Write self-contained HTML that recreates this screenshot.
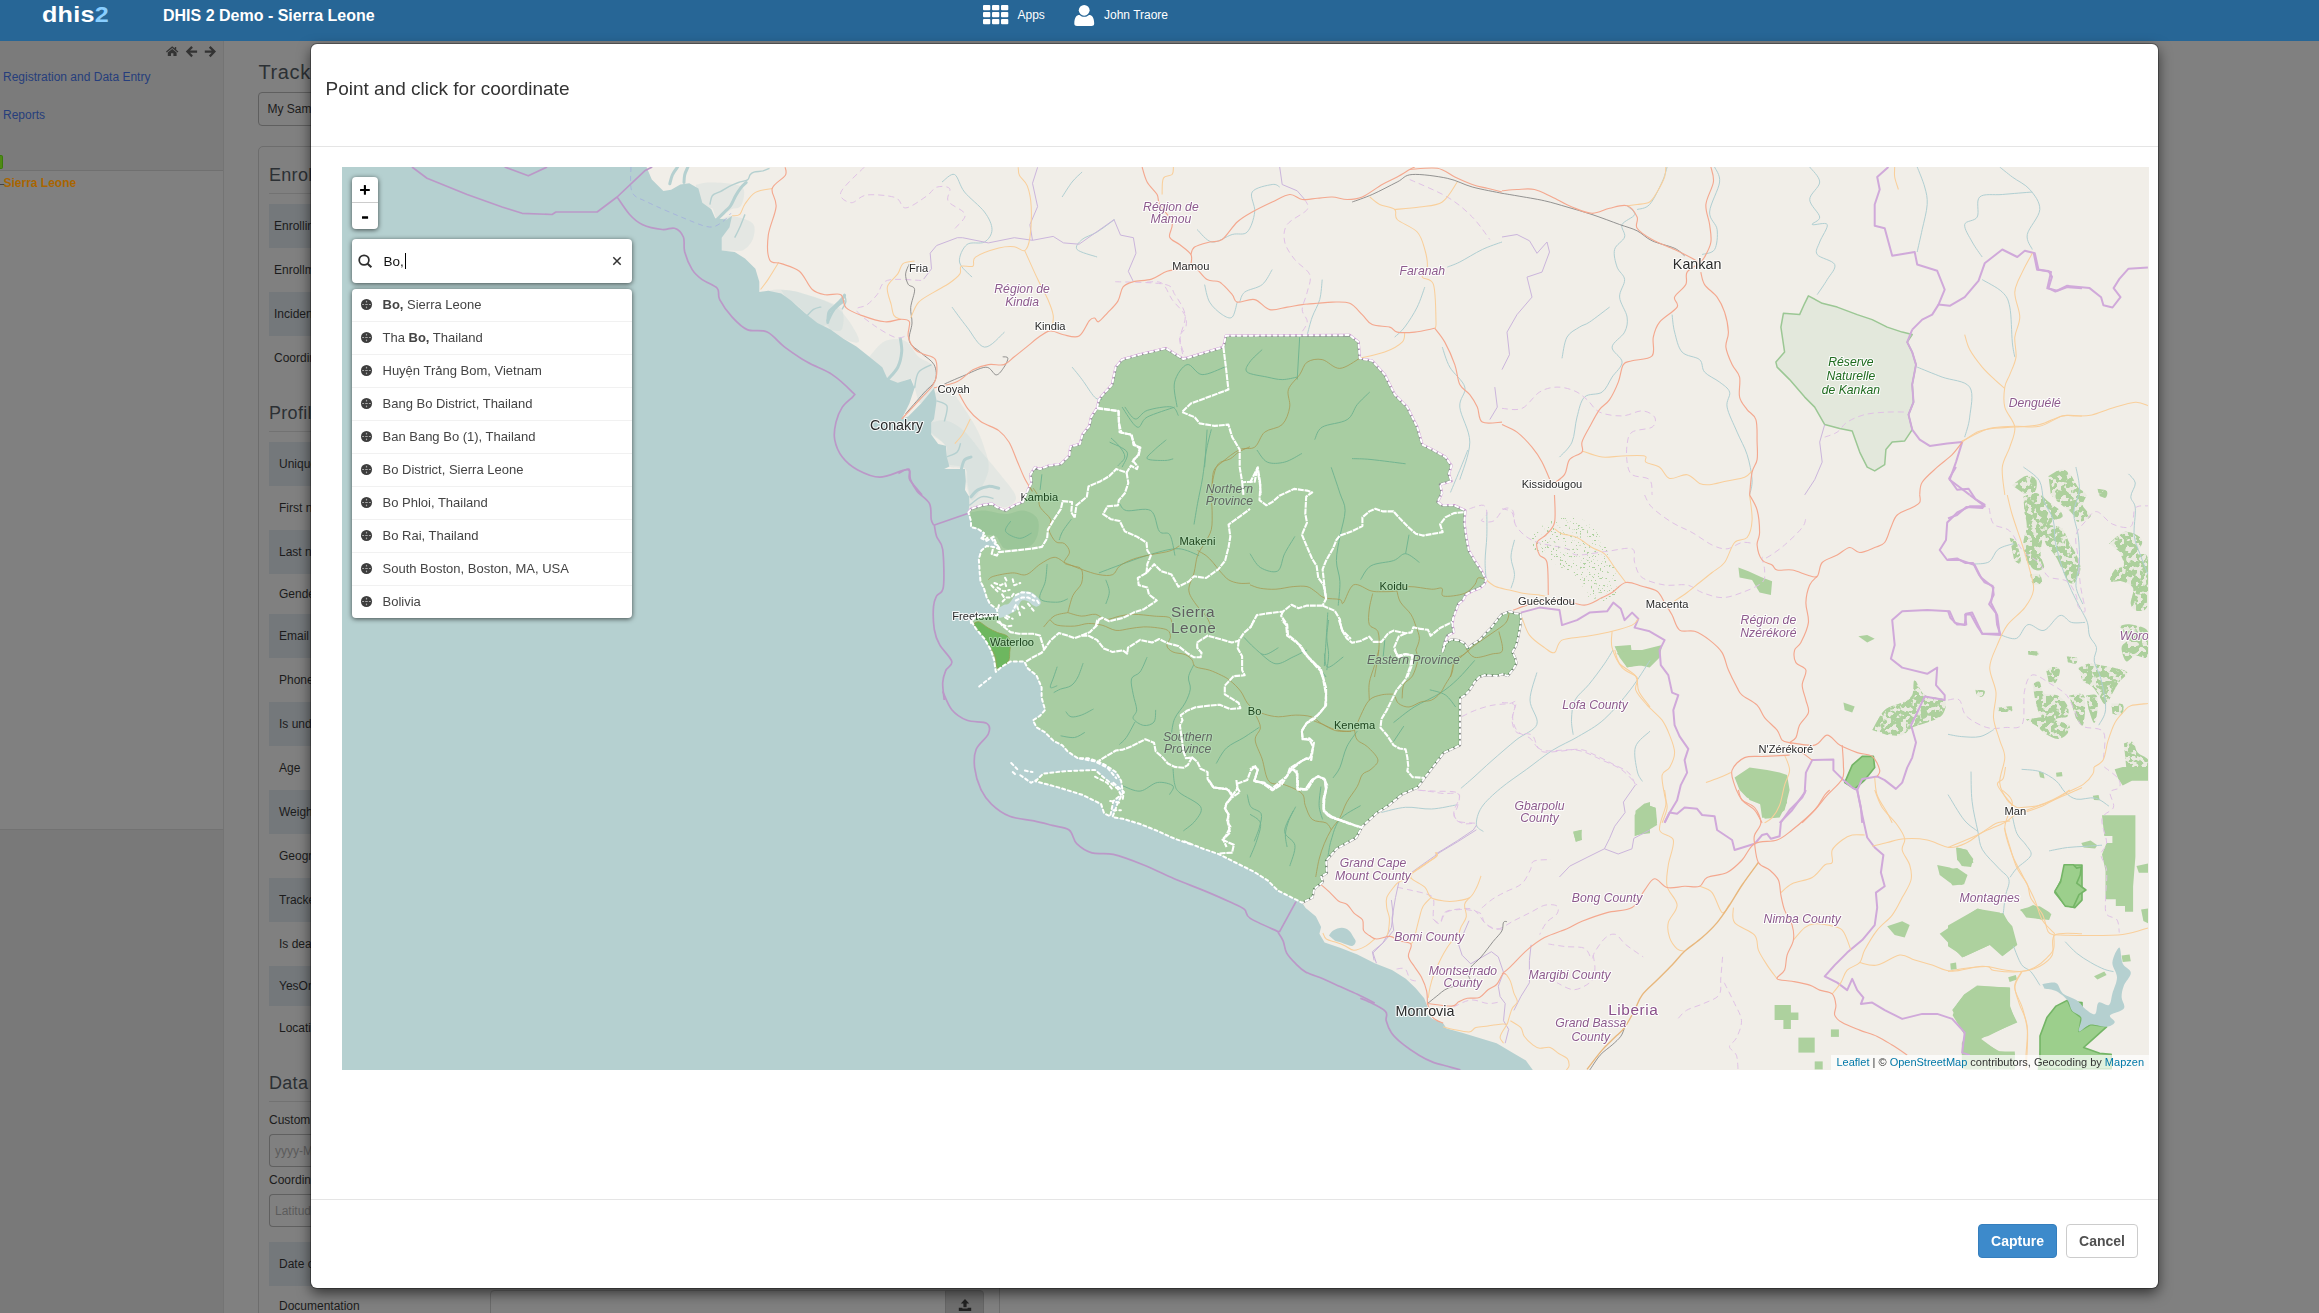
<!DOCTYPE html>
<html>
<head>
<meta charset="utf-8">
<title>DHIS 2 Demo - Sierra Leone</title>
<style>
*{box-sizing:border-box;margin:0;padding:0}
html,body{width:2319px;height:1313px;overflow:hidden}
body{font-family:"Liberation Sans",sans-serif;background:#808080;position:relative;color:#1c1c1c;font-size:12px}
.abs{position:absolute}
#hdr{position:absolute;left:0;top:0;width:2319px;height:41px;background:#276696}
#logo{position:absolute;left:41.8px;top:2.3px;font-weight:bold;font-size:21.5px;line-height:26px;color:#fff;letter-spacing:.2px;transform-origin:0 0;transform:scaleX(1.17)}
#logo span{color:#89ceff}
#title{position:absolute;left:163px;top:6px;font-weight:bold;font-size:16px;line-height:20px;color:#fff;white-space:nowrap}
.hl{position:absolute;top:8px;font-size:12px;line-height:14px;color:#fff;white-space:nowrap}
#leftbar{position:absolute;left:0;top:41px;width:224px;height:788px;background:#808080;border-right:1px solid #747474}
#leftbar .top{position:absolute;left:0;top:0;width:223px;height:130px;background:#7b7b7b;border-bottom:1px solid #707070}
#leftbot{position:absolute;left:0;top:829px;width:224px;height:484px;background:#797979;border-right:1px solid #747474;border-top:1px solid #727272}
.lnk{position:absolute;left:3px;font-size:12px;line-height:14px;color:#263e7c;white-space:nowrap}
.t{position:absolute;white-space:nowrap;color:#1b1b1b;font-size:12px;line-height:14px}
.h{position:absolute;white-space:nowrap;color:#2c3034;font-size:18px;line-height:22px;left:269px;letter-spacing:.3px}
.row{position:absolute;left:269px;width:60px;background:#74787b}
.hr{position:absolute;left:269px;width:60px;height:1px;background:#727272}
.inp{position:absolute;left:269px;width:60px;height:33px;border:1px solid #606060;border-right:0;border-radius:4px 0 0 4px;background:#808080}
#panel{position:absolute;left:258px;top:146px;width:742px;height:1200px;border:1px solid #6d6d6d;border-radius:5px}
#sel{position:absolute;left:258px;top:92px;width:300px;height:34px;border:1px solid #5f5f5f;border-radius:4px}
#modal{will-change:transform;position:absolute;left:311px;top:44px;width:1847px;height:1244px;background:#fff;border-radius:6px;box-shadow:0 5px 14px rgba(0,0,0,.62), 0 0 0 1px rgba(0,0,0,.3)}
#mtitle{position:absolute;left:14.5px;top:34.2px;font-size:19px;line-height:22px;color:#333;white-space:nowrap}
#mhl{position:absolute;left:0;top:102px;width:100%;height:1px;background:#e5e5e5}
#mfl{position:absolute;left:0;top:1155px;width:100%;height:1px;background:#e5e5e5}
#map{position:absolute;left:31px;top:123px;width:1807px;height:903px;background:#f1eee8;overflow:hidden}
#map svg{position:absolute;left:0;top:0}
.btn{position:absolute;top:1180px;height:34px;border-radius:4px;font-weight:bold;font-size:14px;line-height:32px;text-align:center;border:1px solid}
#zoomc{position:absolute;left:10px;top:10px;width:26px;height:52px;background:#fff;border-radius:4px;box-shadow:0 1px 5px rgba(0,0,0,.65)}
#zoomc div{position:absolute;left:0;width:26px;text-align:center;font-weight:bold;font-family:"Liberation Mono",monospace;color:#000;font-size:18px;line-height:26px}
#sbox{position:absolute;left:10px;top:72px;width:280px;height:44px;background:#fff;border-radius:4px;box-shadow:0 1px 5px rgba(0,0,0,.65)}
#res{position:absolute;left:10px;top:122px;width:280px;height:329px;background:#fff;border-radius:4px;box-shadow:0 1px 5px rgba(0,0,0,.65);overflow:hidden}
#res .it{position:absolute;left:0;width:280px;height:33px;border-bottom:1px solid #f1f1f1;font-size:13px;line-height:32px;color:#444;padding-left:30.5px;white-space:nowrap}
#res .it svg{position:absolute;left:7px;top:8px}
#attr{position:absolute;right:0;bottom:0;height:15px;background:rgba(255,255,255,.7);font-size:11px;line-height:15px;padding:0 5px;color:#333;white-space:nowrap}
#attr span{color:#0078a8}
</style>
</head>
<body>
<!-- background page (already dimmed by modal backdrop) -->
<div id="leftbar"><div class="top"></div></div>
<div id="leftbot"></div>
<div id="hdr">
  <div id="logo">dhis<span>2</span></div>
  <div id="title">DHIS 2 Demo - Sierra Leone</div>
  <svg class="abs" style="left:983px;top:5px" width="26" height="20" viewBox="0 0 26 20"><g fill="#fff"><rect x="0" y="0" width="7.3" height="5.2" rx="1"/><rect x="9" y="0" width="7.3" height="5.2" rx="1"/><rect x="18" y="0" width="7.3" height="5.2" rx="1"/><rect x="0" y="7" width="7.3" height="5.2" rx="1"/><rect x="9" y="7" width="7.3" height="5.2" rx="1"/><rect x="18" y="7" width="7.3" height="5.2" rx="1"/><rect x="0" y="14" width="7.3" height="5.2" rx="1"/><rect x="9" y="14" width="7.3" height="5.2" rx="1"/><rect x="18" y="14" width="7.3" height="5.2" rx="1"/></g></svg>
  <div class="hl" style="left:1017.5px">Apps</div>
  <svg class="abs" style="left:1074px;top:4px" width="21" height="23" viewBox="0 0 21 23"><g fill="#fff"><circle cx="10.2" cy="6.3" r="5.4"/><path d="M0.3 19.5 C0.3 13.5 2.5 11 5.5 11 C7 12.3 8.5 12.8 10.2 12.8 C12 12.8 13.5 12.3 15 11 C18 11 20.2 13.5 20.2 19.5 C20.2 21.3 19 22 17.5 22 L3 22 C1.5 22 0.3 21.3 0.3 19.5 Z"/></g></svg>
  <div class="hl" style="left:1104px">John Traore</div>
</div>
<!-- left bar content -->
<svg class="abs" style="left:165px;top:45px" width="54" height="14" viewBox="165 45 54 14"><g fill="#333">
<path d="M172.2 46.2 L166 51.6 L166.8 52.5 L172.2 47.9 L177.6 52.5 L178.4 51.6 L176.2 49.7 L176.2 46.9 L174.8 46.9 L174.8 48.5 Z"/>
<path d="M172.2 48.9 L167.8 52.6 L167.8 56 L171 56 L171 53.2 L173.4 53.2 L173.4 56 L176.6 56 L176.6 52.6 Z"/>
<path d="M185.8 51.6 L191.3 46.1 L192.9 47.7 L190.1 50.5 L197.1 50.5 L197.1 52.8 L190.1 52.8 L192.9 55.6 L191.3 57.2 Z"/>
<path d="M216 51.6 L210.5 46.1 L208.9 47.7 L211.7 50.5 L204.8 50.5 L204.8 52.8 L211.7 52.8 L208.9 55.6 L210.5 57.2 Z"/>
</g></svg>
<div class="lnk" style="top:70px">Registration and Data Entry</div>
<div class="lnk" style="top:108px">Reports</div>
<div class="abs" style="left:0;top:155px;width:3px;height:14px;background:#4f8a14;border:1px solid #3a7a0c;border-left:0;border-radius:0 2px 2px 0"></div>
<div class="abs" style="left:0;top:184px;width:4px;height:1px;background:#444"></div>
<div class="lnk" style="left:3.5px;top:176px;font-weight:bold;color:#a96500">Sierra Leone</div>
<!-- main content under modal -->
<div class="h" style="left:258.5px;top:61px;font-size:20px;letter-spacing:.6px">Tracker Capture</div>
<div id="sel"><div class="t" style="left:8.5px;top:9px">My Sample Programs</div></div>
<div id="panel"></div>
<div class="h" style="top:164px">Enrollment</div>
<div class="hr" style="top:193px"></div>
<div class="row" style="top:204px;height:44px"></div><div class="t" style="left:274px;top:219px">Enrolling organisation unit</div>
<div class="t" style="left:274px;top:263px">Enrollment date</div>
<div class="row" style="top:292px;height:44px"></div><div class="t" style="left:274px;top:307px">Incident date</div>
<div class="t" style="left:274px;top:351px">Coordinate</div>
<div class="h" style="top:402px">Profile</div>
<div class="hr" style="top:431px"></div>
<div class="row" style="top:442px;height:44px"></div><div class="t" style="left:279px;top:457px">Unique ID</div>
<div class="t" style="left:279px;top:501px">First name</div>
<div class="row" style="top:530px;height:43.5px"></div><div class="t" style="left:279px;top:545px">Last name</div>
<div class="t" style="left:279px;top:587px">Gender</div>
<div class="row" style="top:613.5px;height:44px"></div><div class="t" style="left:279px;top:629px">Email</div>
<div class="t" style="left:279px;top:673px">Phone number</div>
<div class="row" style="top:702px;height:44px"></div><div class="t" style="left:279px;top:717px">Is under 5</div>
<div class="t" style="left:279px;top:761px">Age</div>
<div class="row" style="top:790px;height:43.5px"></div><div class="t" style="left:279px;top:805px">Weight in kg</div>
<div class="t" style="left:279px;top:849px">Geography</div>
<div class="row" style="top:877.5px;height:44.5px"></div><div class="t" style="left:279px;top:893px">Tracker</div>
<div class="t" style="left:279px;top:937px">Is dead</div>
<div class="row" style="top:966px;height:40px"></div><div class="t" style="left:279px;top:979px">YesOnly</div>
<div class="t" style="left:279px;top:1021px">Location</div>
<div class="h" style="top:1072px">Data entry</div>
<div class="hr" style="top:1101px"></div>
<div class="t" style="left:269px;top:1113px">Custom date</div>
<div class="inp" style="top:1133.5px"><div class="t" style="left:5px;top:9px;color:#5c5c5c">yyyy-MM-dd</div></div>
<div class="t" style="left:269px;top:1173px">Coordinate</div>
<div class="inp" style="top:1193.5px"><div class="t" style="left:5px;top:9px;color:#5c5c5c">Latitude</div></div>
<div class="row" style="top:1242px;height:44px"></div><div class="t" style="left:279px;top:1257px">Date of birth</div>
<div class="t" style="left:279px;top:1298.5px">Documentation</div>
<!-- bits visible below the modal -->
<div class="abs" style="left:490px;top:1290px;width:456px;height:34px;border:1px solid #6b6b6b;border-radius:4px 0 0 4px"></div>
<div class="abs" style="left:945px;top:1290px;width:39px;height:34px;background:#6e6e6e;border:1px solid #666;border-radius:0 4px 4px 0"></div>
<svg class="abs" style="left:958px;top:1298px" width="14" height="14" viewBox="0 0 14 14"><g fill="#222"><path d="M7 1 L11.2 5.6 L8.6 5.6 L8.6 9.2 L5.4 9.2 L5.4 5.6 L2.8 5.6 Z"/><path d="M0.8 9.8 L4.4 9.8 L4.4 10.4 L9.6 10.4 L9.6 9.8 L13.2 9.8 L13.2 13 L0.8 13 Z"/></g></svg>
<!-- modal -->
<div id="modal">
  <div id="mtitle">Point and click for coordinate</div>
  <div id="mhl"></div>
  <div id="map">
<svg width="1806" height="903" viewBox="0 0 1806 903" font-family="Liberation Sans, sans-serif">
<g fill="#add19e"><path d="M1272.6 479.3 L1288.8 478.1 L1290.1 488.1 L1300.1 483.1 L1310.1 480.6 L1320.1 478.1 L1317.6 490.6 L1307.6 500.6 L1296.3 498.1 L1285.1 500.6 L1277.6 490.6Z"/><path d="M1396.4 400.5 L1406.4 404.3 L1420.1 410.5 L1430.1 414.3 L1428.9 428.1 L1417.6 425.5 L1410.1 413 L1397.6 410.5Z"/><path d="M1392.6 610.6 L1407.6 600.6 L1425.1 603.1 L1437.6 605.6 L1445.1 608.1 L1447.6 623.1 L1442.6 643.2 L1432.6 650.7 L1420.1 650.7 L1417.6 633.2 L1405.1 630.7 L1397.6 623.1Z"/><path d="M1516.4 469.3 L1525.2 468.1 L1532.7 471.8 L1525.2 475.6Z"/><path d="M1501.4 535.6 L1512.7 539.4 L1510.2 545.6 L1502.7 543.1Z"/><path d="M1293.8 645.7 L1305.1 638.2 L1313.8 640.7 L1315.1 655.9 L1293.8 655.9Z"/><path d="M1292.6 648 L1302.6 636.8 L1312.6 640.5 L1315.1 658 L1302.6 665.5 L1292.6 669.3Z"/><path d="M1401.4 623 L1440.1 623 L1445.1 635.5 L1437.6 650.5 L1422.6 651.8 L1420.1 638 L1407.6 633Z"/><path d="M1432.6 838.1 L1448.9 838.1 L1448.9 845.6 L1456.4 845.6 L1456.4 853.1 L1448.9 853.1 L1448.9 861.9 L1441.4 861.9 L1441.4 853.1 L1432.6 853.1Z"/><path d="M1456.4 870.6 L1472.7 870.6 L1472.7 885.6 L1456.4 885.6Z"/><path d="M1488.9 862.4 L1496.9 862.4 L1496.9 869.9 L1488.9 869.9Z"/><path d="M1472.7 894.4 L1480.7 894.4 L1480.7 902.4 L1472.7 902.4Z"/><path d="M1597.7 766.8 L1635.2 741.8 L1657.7 745.6 L1670.3 759.3 L1675.3 778.1 L1660.3 789.3 L1647.7 778.1 L1620.2 790.6Z"/><path d="M1610.2 843.1 L1622.7 826.9 L1634 819.3 L1667.8 820.6 L1667.8 840.6 L1675.3 855.6 L1642.7 869.4 L1637.7 873.1 L1657.7 884.4 L1672.8 884.4 L1672.8 902.4 L1622.7 902.4 L1620.2 885.6 L1622.7 865.6Z"/><path d="M1545.2 759.3 L1560.2 754.3 L1567.7 758.1 L1562.7 770.6 L1552.7 768.1Z"/><path d="M1595.2 698 L1607.7 700.5 L1625.2 708 L1620.2 718 L1607.7 715.5 L1597.7 708Z"/><path d="M1614 680.5 L1625.2 683 L1631.5 695.5 L1622.7 699.3 L1615.2 693Z"/><path d="M1677.8 743.1 L1687.8 740.6 L1697.8 739.3 L1707.8 745.6 L1700.3 753.1 L1687.8 749.3Z"/><path d="M1231.3 665.5 L1238.8 663 L1240 673 L1233.8 674.3Z"/><path d="M1760 648.3 L1793.4 648.3 L1793.4 689.7 L1791.1 719.5 L1791.1 744.8 L1783 744.8 L1783 739.1 L1773.8 739.1 L1773.8 732.2 L1763.5 732.2 L1763.5 703.4 L1760 687.4 L1764.6 675.9 L1770.4 675.9 L1770.4 669 L1762.3 669Z"/><path d="M1606 758.6 L1635.9 741.4 L1652 747.1 L1661.2 746 L1668.1 758.6 L1668.1 770.1 L1675 777 L1661.2 788.5 L1649.7 777 L1622.1 789.7 L1606 779.3Z"/><path d="M1610.6 848.3 L1615.2 836.8 L1622.1 827.6 L1633.6 825.3 L1634.7 818.4 L1668.1 820.7 L1668.1 839.1 L1673.8 855.2 L1646.2 869 L1638.2 871.3 L1655.4 883.9 L1672.7 886.2 L1672.7 901.8 L1619.8 901.8 L1619.8 875.9 L1623.2 869Z"/><path d="M1615.2 680.5 L1624.4 682.8 L1631.3 692 L1629 700 L1619.8 698.9 L1615.2 692Z"/><path d="M1606 702.3 L1615.2 701.1 L1625.5 708 L1622.1 717.2 L1610.6 718.4 L1606 712.6Z"/><path d="M1678.4 742.5 L1686.5 740.2 L1691.1 737.9 L1698 740.2 L1709.4 747.1 L1707.1 752.9 L1695.7 751.7 L1684.2 750.6Z"/><path d="M1772.7 602.3 L1780.7 600 L1806 600 L1806 613.8 L1789.9 613.8 L1780.7 618.4 L1776.1 611.5Z"/><path d="M1739.3 675.9 L1748.5 673.6 L1755.4 678.2 L1753.1 681.6 L1741.6 680.5Z"/><path d="M1794.5 698.9 L1806 696.6 L1806 705.7 L1796.8 705.7Z"/><path d="M1799.1 742.5 L1806 741.4 L1806 756.3 L1801.4 754Z"/><path d="M1779.6 788.5 L1787.6 787.4 L1788.8 794.3 L1780.7 794.9Z"/><path d="M1752 809.2 L1762.3 804.6 L1764.6 808 L1755.4 812.6Z"/><path d="M1696.8 604.6 L1701.4 605.7 L1702.6 611.5 L1698 610.3Z"/><path d="M1714 605.7 L1719.8 605.1 L1720.5 609.2 L1714.5 609.7Z"/><path d="M1750.8 628.7 L1756.6 628 L1757.7 633.3 L1752 632.9Z"/><path d="M1666.2 810.3 L1673.8 808 L1675 812.6 L1667.6 814.9Z"/><path d="M1608.3 796.6 L1614 795.4 L1614.7 802.3 L1608.8 802.8Z"/><path d="M1274.5 486.5 L1288.3 483 L1308 483 L1308 495.1 L1298.7 498.6 L1284.8 500.3 L1281.4 491.6Z"/><path d="M1293.5 643.8 L1302.1 636.8 L1308 635.1 L1308 666.2 L1293.5 668Z"/><path d="M1231.2 664.5 L1239.9 662.8 L1239 673.1 L1233.8 674.9Z"/></g>
<defs><filter id="sp" x="0" y="0" width="100%" height="100%" filterUnits="userSpaceOnUse" primitiveUnits="userSpaceOnUse"><feTurbulence type="fractalNoise" baseFrequency="0.2" numOctaves="2" seed="7" result="n"/><feColorMatrix in="n" type="matrix" values="0 0 0 0 0  0 0 0 0 0  0 0 0 0 0  0 0 0 -16 9.2" result="m"/><feComposite in="SourceGraphic" in2="m" operator="in"/></filter></defs>
<g fill="#add19e" filter="url(#sp)"><path d="M1530.2 563.1 C1532.3 559.8 1537.7 547.7 1542.7 543.1 C1547.7 538.5 1555.6 538.1 1560.2 535.6 C1564.8 533.1 1568.1 531.9 1570.2 528.1 C1572.3 524.4 1570.6 513.1 1572.7 513.1 C1574.8 513.1 1577.7 524.8 1582.7 528.1 C1587.7 531.4 1599.8 529.8 1602.7 533.1 C1605.6 536.4 1603.1 544.4 1600.2 548.1 C1597.3 551.9 1590.2 553.5 1585.2 555.6 C1580.2 557.7 1574.4 558.5 1570.2 560.6 C1566.0 562.7 1564.4 566.9 1560.2 568.1 C1556.0 569.4 1547.7 568.1 1545.2 568.1Z"/><path d="M1670 318.3 C1672.3 316.8 1679.7 310.1 1683.7 309.1 C1687.7 308.2 1692.5 309.9 1694 312.6 C1695.5 315.3 1694.9 322.8 1692.8 325.1 C1690.7 327.4 1683.3 326.1 1681.4 326.3Z"/><path d="M1681.4 329.7 C1683.7 329.1 1690.5 325.1 1695.1 326.3 C1699.7 327.5 1705.0 333.8 1708.8 336.6 C1712.6 339.5 1716.0 341.1 1717.9 343.4 C1719.8 345.7 1721.5 348.4 1720.2 350.3 C1718.9 352.2 1713.0 351.8 1710 354.8 C1707.0 357.8 1703.9 363.2 1702 368.5 C1700.1 373.8 1698.5 381.5 1698.5 386.8 C1698.5 392.1 1703.0 397.8 1702 400.5 C1701.0 403.2 1695.8 404.3 1692.8 402.8 C1689.8 401.3 1685.6 396.0 1683.7 391.4 C1681.8 386.8 1681.2 380.7 1681.4 375.4 C1681.6 370.1 1684.6 364.3 1684.8 359.4 C1685.0 354.4 1682.9 348.0 1682.5 345.7Z"/><path d="M1706.5 309.1 C1708.8 308.0 1716.4 302.3 1720.2 302.3 C1724.0 302.3 1726.7 306.1 1729.4 309.1 C1732.1 312.2 1733.7 317.6 1736.2 320.6 C1738.7 323.7 1743.4 324.4 1744.2 327.4 C1745.0 330.4 1740.0 335.2 1740.8 338.8 C1741.6 342.4 1749.6 346.4 1748.8 349.1 C1748.0 351.8 1739.4 355.4 1736.2 354.8 C1733.0 354.2 1732.5 348.7 1729.4 345.7 C1726.4 342.7 1721.3 339.7 1717.9 336.6 C1714.5 333.6 1710.3 328.9 1708.8 327.4Z"/><path d="M1696.2 357.1 C1698.3 357.3 1704.8 357.5 1708.8 358.3 C1712.8 359.1 1717.2 358.9 1720.2 361.7 C1723.2 364.5 1724.8 371.2 1727.1 375.4 C1729.4 379.6 1732.0 382.6 1733.9 386.8 C1735.8 391.0 1738.5 395.9 1738.5 400.5 C1738.5 405.1 1735.8 411.7 1733.9 414.2 C1732.0 416.7 1729.4 417.3 1727.1 415.4 C1724.8 413.5 1722.5 407.2 1720.2 402.8 C1717.9 398.4 1716.1 393.3 1713.4 389.1 C1710.7 384.9 1705.7 379.6 1704.2 377.7Z"/><path d="M1767.1 376.5 C1769.6 374.6 1777.2 366.4 1781.9 365.1 C1786.7 363.8 1792.5 366.8 1795.6 368.5 C1798.6 370.2 1800.2 372.3 1800.2 375.4 C1800.2 378.4 1794.6 384.1 1795.6 386.8 C1796.5 389.5 1804.2 383.0 1805.9 391.4 C1807.6 399.8 1807.6 428.4 1805.9 437.1 C1804.2 445.9 1798.4 443.9 1795.6 443.9 C1792.8 443.9 1789.5 440.9 1788.8 437.1 C1788.0 433.3 1792.6 424.9 1791.1 421.1 C1789.6 417.3 1783.4 415.4 1779.6 414.2 C1775.8 413.0 1769.3 416.1 1768.2 414.2 C1767.1 412.3 1770.5 405.5 1772.8 402.8 C1775.1 400.1 1781.1 401.2 1781.9 398.2 C1782.7 395.1 1778.2 386.8 1777.4 384.5Z"/><path d="M1777.4 458.8 C1779.3 458.6 1784.0 456.7 1788.8 457.6 C1793.5 458.6 1803.1 459.2 1805.9 464.5 C1808.8 469.8 1808.0 485.6 1805.9 489.6 C1803.8 493.6 1796.9 487.7 1793.3 488.5 C1789.7 489.3 1786.5 495.5 1784.2 494.2 C1781.9 492.9 1779.2 483.9 1779.6 480.5 C1780.0 477.1 1785.3 474.8 1786.5 473.6Z"/><path d="M1736.2 501.1 C1738.1 500.3 1743.4 496.9 1747.6 496.5 C1751.8 496.1 1757.2 498.0 1761.4 498.8 C1765.6 499.6 1768.8 500.0 1772.8 501.1 C1776.8 502.2 1784.5 503.3 1785.3 505.6 C1786.1 507.9 1779.9 511.4 1777.4 514.8 C1774.9 518.2 1772.8 522.4 1770.5 526.2 C1768.2 530.0 1765.9 537.2 1763.6 537.6 C1761.3 538.0 1759.1 531.5 1756.8 528.5 C1754.5 525.5 1752.6 521.6 1749.9 519.3 C1747.2 517.0 1742.3 515.5 1740.8 514.8Z"/><path d="M1690.5 517 C1691.7 516.6 1695.5 513.3 1697.4 514.8 C1699.3 516.3 1699.0 523.9 1702 526.2 C1705.0 528.5 1711.9 526.6 1715.7 528.5 C1719.5 530.4 1723.1 534.2 1724.8 537.6 C1726.5 541.0 1727.4 546.7 1725.9 549 C1724.4 551.3 1718.9 550.1 1715.7 551.3 C1712.5 552.4 1709.5 556.7 1706.5 555.9 C1703.5 555.1 1699.7 550.9 1697.4 546.7 C1695.1 542.5 1693.6 533.4 1692.8 530.8Z"/><path d="M1727.1 528.5 C1729.4 528.3 1738.1 525.4 1740.8 527.3 C1743.5 529.2 1743.1 534.8 1743.1 539.9 C1743.1 545.0 1742.3 556.3 1740.8 558.2 C1739.3 560.1 1735.1 552.4 1733.9 551.3Z"/><path d="M1744.2 528.5 C1745.9 528.5 1752.6 526.2 1754.5 528.5 C1756.4 530.8 1756.0 537.6 1755.6 542.2 C1755.2 546.8 1753.7 555.9 1752.2 555.9 C1750.7 555.9 1747.5 544.5 1746.5 542.2Z"/><path d="M1683.7 552.5 C1686.8 552.1 1697.0 550.0 1702 550.2 C1707.0 550.4 1709.2 552.3 1713.4 553.6 C1717.6 554.9 1725.2 555.9 1727.1 558.2 C1729.0 560.5 1726.7 565.0 1724.8 567.3 C1722.9 569.6 1719.1 571.9 1715.7 571.9 C1712.3 571.9 1707.6 569.4 1704.2 567.3 C1700.8 565.2 1696.6 560.6 1695.1 559.3Z"/><path d="M1704.2 503.3 C1705.3 502.7 1708.8 499.9 1711.1 499.9 C1713.4 499.9 1717.5 500.6 1717.9 503.3 C1718.3 506.0 1715.3 514.0 1713.4 515.9 C1711.5 517.8 1707.7 515.0 1706.5 514.8Z"/><path d="M1781.9 576.4 C1783.4 576.2 1788.8 573.8 1791.1 575.3 C1793.4 576.8 1793.1 582.8 1795.6 585.6 C1798.1 588.5 1804.2 590.0 1805.9 592.4 C1807.6 594.8 1809.5 598.7 1805.9 600 C1802.3 601.3 1787.8 600.0 1784.2 600Z"/><path d="M1688.2 407.4 C1689.7 407.4 1695.5 405.9 1697.4 407.4 C1699.3 408.9 1700.9 414.8 1699.7 416.5 C1698.5 418.2 1692.0 417.5 1690.5 417.7Z"/><path d="M1769.4 536.5 C1771.3 536.7 1779.1 535.7 1780.8 537.6 C1782.5 539.5 1781.3 546.4 1779.6 547.9 C1777.9 549.4 1772.0 546.9 1770.5 546.7Z"/><path d="M1667.7 370.8 C1668.8 371.6 1672.6 371.2 1674.5 375.4 C1676.4 379.6 1679.5 392.9 1679.1 396 C1678.7 399.1 1673.4 394.1 1672.3 393.7Z"/><path d="M1755.6 321.7 C1757.1 322.1 1763.5 322.5 1764.8 324 C1766.1 325.5 1764.9 330.0 1763.6 330.8 C1762.3 331.6 1757.9 329.0 1756.8 328.6Z"/><path d="M1633.4 522.8 C1634.9 523.0 1641.4 522.8 1642.6 523.9 C1643.8 525.0 1641.6 528.8 1640.3 529.6 C1639.0 530.4 1635.5 528.7 1634.6 528.5Z"/><path d="M1655.1 541 C1657.6 540.7 1667.7 538.8 1670 539.4 C1672.3 540.0 1671.1 543.6 1668.8 544.5 C1666.5 545.4 1658.4 544.8 1656.3 544.9Z"/><path d="M1724.8 489.6 C1726.5 489.8 1733.6 489.7 1735.1 490.8 C1736.6 491.9 1735.4 495.8 1733.9 496.5 C1732.4 497.2 1727.2 495.5 1725.9 495.3Z"/><path d="M1686 483.9 C1687.7 484.0 1694.6 483.8 1696.2 484.6 C1697.8 485.4 1697.2 488.0 1695.6 488.5 C1694.0 489.0 1687.9 487.9 1686.4 487.8Z"/></g>
<g fill="#add19e" fill-opacity=".1"><path d="M1530.2 563.1 C1532.3 559.8 1537.7 547.7 1542.7 543.1 C1547.7 538.5 1555.6 538.1 1560.2 535.6 C1564.8 533.1 1568.1 531.9 1570.2 528.1 C1572.3 524.4 1570.6 513.1 1572.7 513.1 C1574.8 513.1 1577.7 524.8 1582.7 528.1 C1587.7 531.4 1599.8 529.8 1602.7 533.1 C1605.6 536.4 1603.1 544.4 1600.2 548.1 C1597.3 551.9 1590.2 553.5 1585.2 555.6 C1580.2 557.7 1574.4 558.5 1570.2 560.6 C1566.0 562.7 1564.4 566.9 1560.2 568.1 C1556.0 569.4 1547.7 568.1 1545.2 568.1Z"/><path d="M1670 318.3 C1672.3 316.8 1679.7 310.1 1683.7 309.1 C1687.7 308.2 1692.5 309.9 1694 312.6 C1695.5 315.3 1694.9 322.8 1692.8 325.1 C1690.7 327.4 1683.3 326.1 1681.4 326.3Z"/><path d="M1681.4 329.7 C1683.7 329.1 1690.5 325.1 1695.1 326.3 C1699.7 327.5 1705.0 333.8 1708.8 336.6 C1712.6 339.5 1716.0 341.1 1717.9 343.4 C1719.8 345.7 1721.5 348.4 1720.2 350.3 C1718.9 352.2 1713.0 351.8 1710 354.8 C1707.0 357.8 1703.9 363.2 1702 368.5 C1700.1 373.8 1698.5 381.5 1698.5 386.8 C1698.5 392.1 1703.0 397.8 1702 400.5 C1701.0 403.2 1695.8 404.3 1692.8 402.8 C1689.8 401.3 1685.6 396.0 1683.7 391.4 C1681.8 386.8 1681.2 380.7 1681.4 375.4 C1681.6 370.1 1684.6 364.3 1684.8 359.4 C1685.0 354.4 1682.9 348.0 1682.5 345.7Z"/><path d="M1706.5 309.1 C1708.8 308.0 1716.4 302.3 1720.2 302.3 C1724.0 302.3 1726.7 306.1 1729.4 309.1 C1732.1 312.2 1733.7 317.6 1736.2 320.6 C1738.7 323.7 1743.4 324.4 1744.2 327.4 C1745.0 330.4 1740.0 335.2 1740.8 338.8 C1741.6 342.4 1749.6 346.4 1748.8 349.1 C1748.0 351.8 1739.4 355.4 1736.2 354.8 C1733.0 354.2 1732.5 348.7 1729.4 345.7 C1726.4 342.7 1721.3 339.7 1717.9 336.6 C1714.5 333.6 1710.3 328.9 1708.8 327.4Z"/><path d="M1696.2 357.1 C1698.3 357.3 1704.8 357.5 1708.8 358.3 C1712.8 359.1 1717.2 358.9 1720.2 361.7 C1723.2 364.5 1724.8 371.2 1727.1 375.4 C1729.4 379.6 1732.0 382.6 1733.9 386.8 C1735.8 391.0 1738.5 395.9 1738.5 400.5 C1738.5 405.1 1735.8 411.7 1733.9 414.2 C1732.0 416.7 1729.4 417.3 1727.1 415.4 C1724.8 413.5 1722.5 407.2 1720.2 402.8 C1717.9 398.4 1716.1 393.3 1713.4 389.1 C1710.7 384.9 1705.7 379.6 1704.2 377.7Z"/><path d="M1767.1 376.5 C1769.6 374.6 1777.2 366.4 1781.9 365.1 C1786.7 363.8 1792.5 366.8 1795.6 368.5 C1798.6 370.2 1800.2 372.3 1800.2 375.4 C1800.2 378.4 1794.6 384.1 1795.6 386.8 C1796.5 389.5 1804.2 383.0 1805.9 391.4 C1807.6 399.8 1807.6 428.4 1805.9 437.1 C1804.2 445.9 1798.4 443.9 1795.6 443.9 C1792.8 443.9 1789.5 440.9 1788.8 437.1 C1788.0 433.3 1792.6 424.9 1791.1 421.1 C1789.6 417.3 1783.4 415.4 1779.6 414.2 C1775.8 413.0 1769.3 416.1 1768.2 414.2 C1767.1 412.3 1770.5 405.5 1772.8 402.8 C1775.1 400.1 1781.1 401.2 1781.9 398.2 C1782.7 395.1 1778.2 386.8 1777.4 384.5Z"/><path d="M1777.4 458.8 C1779.3 458.6 1784.0 456.7 1788.8 457.6 C1793.5 458.6 1803.1 459.2 1805.9 464.5 C1808.8 469.8 1808.0 485.6 1805.9 489.6 C1803.8 493.6 1796.9 487.7 1793.3 488.5 C1789.7 489.3 1786.5 495.5 1784.2 494.2 C1781.9 492.9 1779.2 483.9 1779.6 480.5 C1780.0 477.1 1785.3 474.8 1786.5 473.6Z"/><path d="M1736.2 501.1 C1738.1 500.3 1743.4 496.9 1747.6 496.5 C1751.8 496.1 1757.2 498.0 1761.4 498.8 C1765.6 499.6 1768.8 500.0 1772.8 501.1 C1776.8 502.2 1784.5 503.3 1785.3 505.6 C1786.1 507.9 1779.9 511.4 1777.4 514.8 C1774.9 518.2 1772.8 522.4 1770.5 526.2 C1768.2 530.0 1765.9 537.2 1763.6 537.6 C1761.3 538.0 1759.1 531.5 1756.8 528.5 C1754.5 525.5 1752.6 521.6 1749.9 519.3 C1747.2 517.0 1742.3 515.5 1740.8 514.8Z"/><path d="M1690.5 517 C1691.7 516.6 1695.5 513.3 1697.4 514.8 C1699.3 516.3 1699.0 523.9 1702 526.2 C1705.0 528.5 1711.9 526.6 1715.7 528.5 C1719.5 530.4 1723.1 534.2 1724.8 537.6 C1726.5 541.0 1727.4 546.7 1725.9 549 C1724.4 551.3 1718.9 550.1 1715.7 551.3 C1712.5 552.4 1709.5 556.7 1706.5 555.9 C1703.5 555.1 1699.7 550.9 1697.4 546.7 C1695.1 542.5 1693.6 533.4 1692.8 530.8Z"/><path d="M1727.1 528.5 C1729.4 528.3 1738.1 525.4 1740.8 527.3 C1743.5 529.2 1743.1 534.8 1743.1 539.9 C1743.1 545.0 1742.3 556.3 1740.8 558.2 C1739.3 560.1 1735.1 552.4 1733.9 551.3Z"/><path d="M1744.2 528.5 C1745.9 528.5 1752.6 526.2 1754.5 528.5 C1756.4 530.8 1756.0 537.6 1755.6 542.2 C1755.2 546.8 1753.7 555.9 1752.2 555.9 C1750.7 555.9 1747.5 544.5 1746.5 542.2Z"/><path d="M1683.7 552.5 C1686.8 552.1 1697.0 550.0 1702 550.2 C1707.0 550.4 1709.2 552.3 1713.4 553.6 C1717.6 554.9 1725.2 555.9 1727.1 558.2 C1729.0 560.5 1726.7 565.0 1724.8 567.3 C1722.9 569.6 1719.1 571.9 1715.7 571.9 C1712.3 571.9 1707.6 569.4 1704.2 567.3 C1700.8 565.2 1696.6 560.6 1695.1 559.3Z"/><path d="M1704.2 503.3 C1705.3 502.7 1708.8 499.9 1711.1 499.9 C1713.4 499.9 1717.5 500.6 1717.9 503.3 C1718.3 506.0 1715.3 514.0 1713.4 515.9 C1711.5 517.8 1707.7 515.0 1706.5 514.8Z"/><path d="M1781.9 576.4 C1783.4 576.2 1788.8 573.8 1791.1 575.3 C1793.4 576.8 1793.1 582.8 1795.6 585.6 C1798.1 588.5 1804.2 590.0 1805.9 592.4 C1807.6 594.8 1809.5 598.7 1805.9 600 C1802.3 601.3 1787.8 600.0 1784.2 600Z"/><path d="M1688.2 407.4 C1689.7 407.4 1695.5 405.9 1697.4 407.4 C1699.3 408.9 1700.9 414.8 1699.7 416.5 C1698.5 418.2 1692.0 417.5 1690.5 417.7Z"/><path d="M1769.4 536.5 C1771.3 536.7 1779.1 535.7 1780.8 537.6 C1782.5 539.5 1781.3 546.4 1779.6 547.9 C1777.9 549.4 1772.0 546.9 1770.5 546.7Z"/><path d="M1667.7 370.8 C1668.8 371.6 1672.6 371.2 1674.5 375.4 C1676.4 379.6 1679.5 392.9 1679.1 396 C1678.7 399.1 1673.4 394.1 1672.3 393.7Z"/><path d="M1755.6 321.7 C1757.1 322.1 1763.5 322.5 1764.8 324 C1766.1 325.5 1764.9 330.0 1763.6 330.8 C1762.3 331.6 1757.9 329.0 1756.8 328.6Z"/><path d="M1633.4 522.8 C1634.9 523.0 1641.4 522.8 1642.6 523.9 C1643.8 525.0 1641.6 528.8 1640.3 529.6 C1639.0 530.4 1635.5 528.7 1634.6 528.5Z"/><path d="M1655.1 541 C1657.6 540.7 1667.7 538.8 1670 539.4 C1672.3 540.0 1671.1 543.6 1668.8 544.5 C1666.5 545.4 1658.4 544.8 1656.3 544.9Z"/><path d="M1724.8 489.6 C1726.5 489.8 1733.6 489.7 1735.1 490.8 C1736.6 491.9 1735.4 495.8 1733.9 496.5 C1732.4 497.2 1727.2 495.5 1725.9 495.3Z"/><path d="M1686 483.9 C1687.7 484.0 1694.6 483.8 1696.2 484.6 C1697.8 485.4 1697.2 488.0 1695.6 488.5 C1694.0 489.0 1687.9 487.9 1686.4 487.8Z"/></g>
<defs><filter id="dt" x="0" y="0" width="100%" height="100%" filterUnits="userSpaceOnUse" primitiveUnits="userSpaceOnUse"><feTurbulence type="fractalNoise" baseFrequency="0.55" numOctaves="1" seed="11" result="n"/><feColorMatrix in="n" type="matrix" values="0 0 0 0 0  0 0 0 0 0  0 0 0 0 0  0 0 0 -20 7.2" result="m"/><feComposite in="SourceGraphic" in2="m" operator="in"/></filter></defs>
<g fill="#add19e" filter="url(#dt)"><path d="M1192.5 365.5 C1195.4 363.4 1202.9 355.5 1210 353 C1217.1 350.5 1227.5 348.4 1235 350.5 C1242.5 352.6 1249.2 358.4 1255 365.5 C1260.8 372.6 1266.3 384.7 1270.1 393 C1273.9 401.3 1277.6 409.2 1277.6 415.5 C1277.6 421.8 1274.7 427.7 1270.1 430.6 C1265.5 433.5 1255.8 436.5 1250 433.1 C1244.2 429.8 1240.4 415.9 1235 410.5 C1229.6 405.1 1222.9 404.7 1217.5 400.5 C1212.1 396.3 1205.0 388.0 1202.5 385.5Z"/><path d="M1191.5 366 C1193.2 365.7 1199.0 363.1 1201.9 364.2 C1204.8 365.3 1208.2 369.7 1208.8 372.9 C1209.4 376.1 1207.6 381.3 1205.3 383.3 C1203.0 385.3 1197.8 386.2 1194.9 385 C1192.0 383.8 1189.2 377.8 1188 376.3Z"/></g>
<g fill="#9ccf88" stroke="#d0b070" stroke-width=".8"><path d="M631.9 456.4 C632.8 456.1 634.8 454.1 637.2 454.9 C639.6 455.7 643.2 459.2 646.3 461 C649.3 462.8 652.5 464.2 655.5 465.5 C658.5 466.8 662.5 467.1 664.6 468.6 C666.8 470.1 667.9 471.9 668.4 474.7 C668.9 477.5 668.0 482.3 667.7 485.3 C667.5 488.3 667.9 490.6 666.9 492.9 C665.9 495.2 663.5 497.6 661.6 499 C659.7 500.4 656.9 502.8 655.5 501.3 C654.1 499.8 654.2 493.1 653.2 489.9 C652.2 486.7 651.0 484.8 649.4 482.3 C647.8 479.8 645.3 477.2 643.3 474.7 C641.3 472.1 638.2 468.3 637.2 467Z"/></g>
<g fill="#9ccf8c" stroke="#74b566" stroke-width="1.6" stroke-linejoin="round"><path d="M1502.7 615.6 L1510.2 598.1 L1520.2 589.4 L1531.4 589.4 L1532.7 600.6 L1522.7 613.1 L1512.7 621.9Z"/><path d="M1740 698 L1727.8 698 L1720.3 710.5 L1712.8 725.6 L1722.8 738.1 L1732.8 740.6 L1740 733.1Z"/><path d="M1740 835.6 L1725.3 834.4 L1710.3 848.1 L1700.3 868.1 L1696.5 902.4 L1740 902.4Z"/><path d="M1722.1 697.7 L1731.3 697.7 L1734.7 701.1 L1739.3 700 L1738.2 708 L1734.7 716.1 L1743.9 723 L1737 727.6 L1731.3 740.2 L1723.2 739.1 L1712.9 724.1 L1718.6 714.9Z"/><path d="M1698 901.8 L1698 869 L1704.9 850.6 L1714 839.1 L1725.5 833.3 L1730.1 843.7 L1739.3 850.6 L1737 864.4 L1748.5 857.5 L1764.6 859.8 L1741.6 880.5 L1757.7 886.2 L1769.2 887.4 L1769.2 901.8Z"/></g>
<path d="M1466.4 128.8 L1480.2 136.3 L1495.2 140.1 L1515.2 147.6 L1530.2 152.6 L1545.2 160.1 L1560.2 165.1 L1570.2 167.6 L1565.2 175.1 L1570.2 185.1 L1574 197.6 L1570.2 217.6 L1571.5 235.1 L1566.5 247.6 L1570.2 262.6 L1562.7 273.9 L1550.2 275.1 L1543.9 282.6 L1542.7 297.6 L1532.7 303.9 L1525.2 300.2 L1517.7 285.1 L1510.2 263.9 L1497.7 261.4 L1482.7 257.6 L1472.7 240.1 L1462.7 230.1 L1447.6 212.6 L1435.1 200.1 L1433.9 195.1 L1442.6 185.1 L1438.9 160.1 L1441.4 146.3 L1457.6 147.6 L1462.7 136.3Z" fill="#e3e8dc" stroke="#9bc794" stroke-width="1.5" stroke-linejoin="round"/>
<g fill="#b5d0d0" fill-opacity=".22"><path d="M379.6 51.8 C381.1 51.4 384.9 49.2 388.6 49.2 C392.3 49.2 397.7 50.3 401.6 51.8 C405.5 53.3 410.4 54.8 411.9 58.3 C413.4 61.8 412.4 68.4 410.7 72.5 C409.0 76.6 405.3 81.1 401.6 82.9 C397.9 84.7 392.3 83.3 388.6 83.5 C384.9 83.7 381.3 86.0 379.6 84.2 C377.9 82.4 378.1 76.0 378.3 72.5 C378.5 69.0 380.5 64.9 380.9 63.4Z"/><path d="M439.1 123 C441.5 123.2 448.2 123.2 453.4 124.3 C458.6 125.4 464.8 127.8 470.2 129.5 C475.6 131.2 480.8 132.5 485.8 134.7 C490.8 136.8 497.6 137.9 500 142.4 C502.4 146.9 501.7 158.5 500 161.9 C498.3 165.3 492.2 163.8 489.6 163.1 C487.0 162.4 486.9 158.4 484.5 158 C482.1 157.6 478.4 161.7 475.4 160.6 C472.4 159.5 470.0 155.2 466.3 151.5 C462.6 147.8 456.8 141.5 453.4 138.5 C449.9 135.5 446.9 134.2 445.6 133.4Z"/><path d="M353.7 18.1 C355.6 17.7 359.5 15.7 365.3 15.5 C371.1 15.3 382.6 15.7 388.6 16.8 C394.7 17.9 399.9 18.3 401.6 22 C403.3 25.7 401.2 35.3 399 38.8 C396.8 42.2 392.5 40.5 388.6 42.7 C384.7 44.9 378.7 52.0 375.7 51.8 C372.7 51.6 372.2 42.9 370.5 41.4 C368.8 39.9 367.4 43.6 365.3 42.7 C363.2 41.9 358.9 37.4 357.6 36.3Z"/><path d="M418.6 125.1 C422.1 124.7 431.5 122.1 439.3 122.5 C447.1 122.9 456.6 125.1 465.2 127.7 C473.8 130.3 484.2 133.7 491.1 138 C498.0 142.3 502.3 147.5 506.6 153.6 C510.9 159.7 517.9 171.3 517 174.3 C516.1 177.3 508.3 174.7 501.4 171.7 C494.5 168.7 484.1 162.4 475.5 156.1 C466.9 149.8 457.8 139.5 449.6 134.1 C441.4 128.7 430.2 125.5 426.3 123.8Z"/><path d="M527.3 189.8 C529.9 187.2 536.8 176.9 542.8 174.3 C548.8 171.7 558.0 171.7 563.6 174.3 C569.2 176.9 571.8 185.5 576.5 189.8 C581.2 194.1 589.4 195.0 592 200.2 C594.6 205.4 594.1 214.9 592 220.9 C589.9 226.9 582.3 236.4 579.1 236.4 C575.9 236.4 574.3 225.0 572.6 220.9 C570.9 216.8 571.5 212.7 568.7 211.8 C565.9 210.9 559.7 215.7 555.8 215.7 C551.9 215.7 547.1 212.5 545.4 211.8Z"/><path d="M592 226.1 C594.6 225.7 602.9 221.3 607.6 223.5 C612.4 225.7 616.2 233.0 620.5 239 C624.8 245.0 630.0 253.2 633.5 259.7 C637.0 266.2 639.1 270.5 641.3 277.8 C643.4 285.1 648.1 294.5 646.4 303.7 C644.7 312.9 634.3 330.8 630.9 333 C627.5 335.2 627.0 322.0 625.7 316.7 C624.4 311.4 626.6 304.6 623.1 301.2 C619.6 297.8 608.2 299.7 605 296 C601.8 292.3 606.5 284.3 603.7 279.1 C600.9 273.9 590.8 267.3 588.2 264.9Z"/><path d="M589.2 255.5 C591.8 255.2 599.3 252.3 604.8 253.7 C610.3 255.1 616.3 258.9 622.1 264.1 C627.9 269.3 633.6 278.0 639.4 284.9 C645.2 291.8 651.0 298.1 656.7 305.6 C662.5 313.1 672.8 324.0 673.9 329.8 C675.0 335.6 667.6 339.1 663.6 340.2 C659.6 341.3 655.5 336.4 649.7 336.7 C643.9 337.0 632.7 343.0 629 341.9 C625.3 340.8 628.2 334.4 627.3 329.8 C626.4 325.2 624.5 318.8 623.8 314.2 C623.1 309.6 625.7 304.5 623 302.1 C620.3 299.7 610.4 301.6 607.4 299.6 C604.4 297.6 605.4 293.5 604.8 290 C604.2 286.5 606.5 282.5 603.9 278.8 C601.3 275.1 591.7 269.5 589.2 267.6Z"/></g>
<g fill="none" stroke="#b5d0d0" stroke-width="3" stroke-linecap="round"><path d="M375.7 51.8 C377.0 50.5 381.4 46.2 383.5 44 C385.6 41.8 386.9 41.4 388.6 38.8 C390.3 36.2 392.1 31.5 393.8 28.5 C395.5 25.5 397.3 22.9 399 20.7 C400.7 18.5 403.3 16.4 404.2 15.5"/><path d="M485.8 155.4 C486.0 153.7 485.9 147.6 487 145 C488.1 142.4 490.0 142.0 492.2 139.8 C494.4 137.7 498.3 134.0 500 132.1 C501.7 130.2 502.2 128.8 502.6 128.2"/><path d="M327.8 16.8 C328.2 15.3 329.1 10.6 330.4 7.8 C331.7 5.0 334.7 1.3 335.6 0"/><path d="M342 15.5 C342.1 14.2 342.1 10.4 342.7 7.8 C343.3 5.2 345.4 1.3 345.9 0"/><path d="M485.9 153.6 C487.0 151.7 489.8 145.2 492.4 141.9 C495.0 138.7 499.9 135.4 501.4 134.1"/><path d="M545.4 213.1 C547.1 210.9 553.4 204.9 555.8 200.2 C558.2 195.4 559.3 189.3 559.7 184.6 C560.1 179.8 558.6 173.8 558.4 171.7"/><path d="M618.6 305.6 C619.2 303.6 620.4 296.1 622.1 293.5 C623.8 290.9 627.9 290.6 629 290"/><path d="M629 329.8 C630.1 328.6 633.0 324.6 635.9 322.9 C638.8 321.2 642.8 319.7 646.3 319.4 C649.8 319.1 655.0 320.9 656.7 321.2"/></g>
<g fill="none" stroke="#b5d0d0" stroke-width="1.4"><path d="M367.9 37.6 C368.3 36.1 368.8 30.7 370.5 28.5 C372.2 26.3 375.5 26.1 378.3 24.6 C381.1 23.1 384.3 20.9 387.3 19.4 C390.3 17.9 393.4 16.6 396.4 15.5 C399.4 14.4 403.6 14.2 405.5 12.9 C407.4 11.6 407.0 9.1 408.1 7.8 C409.2 6.5 409.8 5.9 411.9 5.2 C414.0 4.5 418.4 4.5 421 3.9 C423.6 3.2 426.4 1.7 427.5 1.3"/><path d="M465 148.9 C466.1 147.8 469.1 143.9 471.5 142.4 C473.9 140.9 478.0 140.2 479.3 139.8"/><path d="M502.6 128.2 C502.8 129.3 504.3 132.3 503.9 134.7 C503.5 137.1 500.6 141.1 500 142.4"/><path d="M403 47.4 C402.1 49.5 399.5 56.4 397.8 60.3 C396.1 64.2 393.6 69.0 392.7 70.7"/><path d="M572.6 220.9 C573.2 218.3 573.7 209.2 576.5 205.3 C579.3 201.4 587.3 198.9 589.5 197.6"/><path d="M594.6 233.8 C596.3 234.7 603.7 235.6 605 239 C606.3 242.4 602.8 251.9 602.4 254.5"/><path d="M604.8 290 C606.5 289.1 612.9 287.2 615.2 284.9 C617.5 282.6 618.0 277.6 618.6 276.2"/><path d="M627.3 338.4 C629.3 337.0 635.4 330.9 639.4 329.8 C643.4 328.7 649.5 331.2 651.5 331.5"/></g>
<g fill="#5f9f80" fill-opacity=".12"><path d="M629 345.4 C631.3 345.1 637.0 343.3 642.8 343.6 C648.6 343.9 657.2 347.1 663.6 347.1 C670.0 347.1 675.7 343.0 680.9 343.6 C686.1 344.2 692.1 347.0 694.7 350.5 C697.3 354.0 697.0 360.1 696.4 364.4 C695.8 368.7 693.8 373.6 691.2 376.5 C688.6 379.4 685.5 380.8 680.9 381.7 C676.3 382.6 667.4 382.6 663.6 381.7 C659.9 380.8 660.0 378.5 658.4 376.5 C656.8 374.5 656.4 371.1 654.1 369.6 C651.8 368.2 647.6 369.1 644.6 367.8 C641.6 366.5 638.5 363.1 635.9 361.8 C633.3 360.5 630.1 360.4 629 360.1Z"/></g>
<path d="M0 0 L304.6 0 L304.6 0.3 L309.8 12.4 L321.4 24.1 L329.2 22.8 L338.3 17.6 L347.3 16.3 L356.4 21.5 L360.3 35.7 L369.3 42.2 L373.2 51.3 L384.9 52.6 L390.1 48.7 L387.5 60.3 L379.7 70.7 L379.7 83.6 L392.7 84.9 L403 91.4 L413.4 101.8 L417.3 114.7 L417.3 125.1 L426.3 123.8 L439.3 126.4 L449.6 134.1 L462.6 145.8 L475.5 156.1 L488.5 162.6 L501.4 171.7 L514.4 179.4 L527.3 189.8 L540.3 200.2 L545.4 211.8 L555.8 215.7 L568.7 211.8 L572.6 220.9 L567.4 236.4 L559.7 252 L566.2 249.4 L579.1 236.4 L592 220.9 L594.6 233.8 L592 252 L589.2 255.5 L589.2 267.6 L596.2 277.1 L603.9 278.8 L604.8 290 L607.4 299.6 L602.2 302.1 L611.7 302.1 L623 302.1 L623.8 314.2 L623 322.9 L627.3 329.8 L627.3 338.4 L626.4 345.4 L629 354 L629 360.1 L635.9 361.8 L642 366.1 L639.4 371.3 L644.6 373.9 L651.5 369.6 L654.1 376.5 L658.4 382.5 L651.5 379.9 L644.6 379.1 L639.4 383.4 L636.8 392 L637.6 404.1 L638.5 414.5 L642 421.4 L644.6 430.1 L648 437 L654.9 442.2 L655.8 448.2 L646.3 449.1 L632.5 450.8 L629 456 L628.7 453 L633.9 461.6 L642.6 472 L648.6 482.4 L652.1 492.8 L653.8 504.9 L659.9 499.7 L668.5 494.5 L682.3 494.5 L685.8 501.4 L694.4 508.3 L699.6 520.4 L699.6 530.8 L703.1 542.9 L697.9 548.9 L691 553.3 L694.4 560.2 L703.1 565.4 L711.7 574 L720.4 578.3 L725.5 584.4 L735.9 591.3 L746.3 591.3 L756.7 594.7 L763.6 598.2 L773.9 605.1 L779.1 613.8 L780.9 625.9 L775.7 636.2 L770.5 650.1 L780.9 651.8 L798.1 657 L815.4 663.9 L832.7 671.7 L850 677.7 L842.6 674.4 L859.9 681.3 L877.1 687.3 L894.4 696 L911.7 704.6 L925.5 713.3 L935.9 723.6 L946.3 728.8 L960.1 735.7 L963.6 740.9 L973.9 749.6 L979.1 759.9 L977.4 766.8 L982.6 775.5 L998.1 780.7 L1015.4 787.6 L1032.7 796.2 L1050 803.1 L1063.8 811.8 L1073.5 821 L1082.2 831.3 L1085.6 839.9 L1083.9 846.8 L1090.8 852 L1101.1 856.3 L1104.6 861.5 L1120.1 865.8 L1137.4 871 L1154.6 876.2 L1171.9 886.5 L1183.9 893.4 L1190.8 902.9 L1193.8 903 L0 903Z" fill="#b5d0d0"/>
<path d="M693.6 614.3 L701.2 606.6 L722.5 604.2 L753 603 L759.1 608.2 L768.2 615.8 L775.8 621.9 L778.9 628 L771.3 634.1 L768.2 649.3 L762.1 646.3 L759.1 637.1 L740.8 628 L716.4 620.4Z" fill="#f1eee8"/>
<path d="M1700.3 817.2 C1702.6 817.0 1710.6 814.6 1714 816.1 C1717.4 817.6 1717.5 823.5 1720.9 826.4 C1724.4 829.3 1730.9 830.6 1734.7 833.3 C1738.5 836.0 1740.8 840.2 1743.9 842.5 C1747.0 844.8 1751.0 848.2 1753.1 847.1 C1755.2 846.0 1754.3 837.1 1756.6 835.6 C1758.9 834.1 1764.6 839.4 1766.9 837.9 C1769.2 836.4 1769.1 831.0 1770.4 826.4 C1771.8 821.8 1775.0 815.5 1775 810.3 C1775.0 805.1 1770.0 800.4 1770.4 795.4 C1770.8 790.4 1775.6 780.3 1777.3 780.5 C1779.0 780.7 1778.8 792.4 1780.7 796.6 C1782.6 800.8 1788.6 802.1 1788.8 805.7 C1789.0 809.3 1783.4 814.4 1781.9 818.4 C1780.4 822.4 1779.6 826.1 1779.6 829.9 C1779.6 833.7 1783.8 838.3 1781.9 841.4 C1780.0 844.5 1769.6 846.0 1768.1 848.3 C1766.6 850.6 1773.3 853.3 1772.7 855.2 C1772.1 857.1 1768.6 859.4 1764.6 859.8 C1760.6 860.2 1753.1 856.7 1748.5 857.5 C1743.9 858.3 1738.5 865.5 1737 864.4 C1735.5 863.2 1740.5 854.0 1739.3 850.6 C1738.1 847.2 1732.4 846.6 1730.1 843.7 C1727.8 840.8 1728.2 836.6 1725.5 833.3 C1722.8 830.0 1717.8 826.0 1714 824.1 C1710.2 822.2 1704.5 822.2 1702.6 821.8Z" fill="#b5d0d0"/>
<path d="M986.9 768.6 C987.6 767.7 989.0 764.7 991.2 763.4 C993.4 762.1 997.3 760.8 999.9 760.8 C1002.5 760.8 1004.9 762.0 1006.8 763.4 C1008.7 764.8 1010.0 767.5 1011.1 769.4 C1012.2 771.3 1013.9 773.0 1013.7 774.6 C1013.6 776.2 1012.2 778.6 1010.2 778.9 C1008.2 779.2 1004.5 777.2 1001.6 776.4 C998.7 775.5 994.4 774.2 993 773.8Z" fill="#b5d0d0"/>
<g fill="none" stroke="#b0cfd2" stroke-width="1" stroke-linejoin="round"><path d="M1467.7 0 C1469.4 2.5 1477.7 9.6 1477.7 15 C1477.7 20.4 1467.7 26.7 1467.7 32.5 C1467.7 38.3 1477.3 45.8 1477.7 50 C1478.1 54.2 1469.0 56.2 1470.2 57.5 C1471.5 58.8 1484.0 54.6 1485.2 57.5 C1486.5 60.4 1479.4 70.0 1477.7 75 C1476.0 80.0 1472.7 83.8 1475.2 87.5 C1477.7 91.2 1491.0 93.3 1492.7 97.5 C1494.4 101.7 1488.1 107.6 1485.2 112.6 C1482.3 117.6 1476.9 125.1 1475.2 127.6"/><path d="M1285.1 38.8 C1286.3 40.2 1293.4 44.4 1292.6 47.5 C1291.8 50.6 1281.8 53.8 1280.1 57.5 C1278.4 61.2 1283.8 65.8 1282.6 70 C1281.3 74.2 1273.8 77.5 1272.6 82.5 C1271.3 87.5 1273.4 95.1 1275.1 100.1 C1276.8 105.1 1282.2 107.6 1282.6 112.6 C1283.0 117.6 1277.2 123.8 1277.6 130.1 C1278.0 136.3 1284.3 144.3 1285.1 150.1 C1285.9 155.9 1285.1 160.1 1282.6 165.1 C1280.1 170.1 1270.5 175.1 1270.1 180.1 C1269.7 185.1 1280.1 190.1 1280.1 195.1 C1280.1 200.1 1273.4 205.1 1270.1 210.1 C1266.8 215.1 1264.7 221.8 1260.1 225.1 C1255.5 228.4 1246.7 225.9 1242.5 230.1 C1238.3 234.3 1237.1 242.6 1235 250.1 C1232.9 257.6 1232.9 268.4 1230 275.1 C1227.1 281.8 1219.6 287.6 1217.5 290.1"/><path d="M1325.1 0 C1324.3 2.5 1323.0 8.8 1320.1 15 C1317.2 21.2 1311.8 32.9 1307.6 37.5 C1303.4 42.1 1297.2 41.7 1295.1 42.5"/><path d="M1372.6 0 C1373.4 2.5 1378.4 7.5 1377.6 15 C1376.8 22.5 1368.0 37.1 1367.6 45 C1367.2 52.9 1374.3 56.2 1375.1 62.5 C1375.9 68.8 1375.1 78.3 1372.6 82.5 C1370.1 86.7 1362.2 86.7 1360.1 87.5"/><path d="M1330.1 147.6 C1330.5 150.5 1330.9 158.8 1332.6 165.1 C1334.3 171.3 1335.9 180.5 1340.1 185.1 C1344.3 189.7 1353.8 189.3 1357.6 192.6 C1361.3 195.9 1359.3 201.3 1362.6 205.1 C1365.9 208.8 1373.4 211.8 1377.6 215.1 C1381.8 218.4 1386.3 220.9 1387.6 225.1 C1388.8 229.3 1383.8 233.4 1385.1 240.1 C1386.3 246.8 1391.8 257.2 1395.1 265.1 C1398.4 273.0 1402.6 279.7 1405.1 287.6 C1407.6 295.5 1409.7 306.0 1410.1 312.7 C1410.5 319.4 1408.0 325.4 1407.6 327.9"/><path d="M1267.6 140.1 C1264.2 142.6 1252.5 151.8 1247.5 155.1 C1242.5 158.4 1241.2 157.6 1237.5 160.1 C1233.8 162.6 1227.9 164.9 1225 170.1 C1222.1 175.3 1220.8 187.8 1220 191.3"/><path d="M1575.2 0 C1576.5 3.3 1581.0 13.8 1582.7 20 C1584.4 26.2 1585.6 30.4 1585.2 37.5 C1584.8 44.6 1581.9 54.6 1580.2 62.5 C1578.5 70.4 1576.0 81.2 1575.2 85"/><path d="M1657.7 0 C1659.8 1.7 1665.3 6.2 1670.3 10 C1675.3 13.8 1683.2 17.1 1687.8 22.5 C1692.4 27.9 1698.2 35.0 1697.8 42.5 C1697.4 50.0 1686.5 60.8 1685.3 67.5 C1684.0 74.2 1689.5 80.0 1690.3 82.5"/><path d="M1690.3 25 C1685.3 25.4 1669.1 26.7 1660.3 27.5 C1651.5 28.3 1641.9 26.2 1637.7 30 C1633.5 33.8 1637.7 45.4 1635.2 50 C1632.7 54.6 1623.5 53.3 1622.7 57.5 C1621.9 61.7 1627.3 69.6 1630.2 75 C1633.1 80.4 1638.5 87.5 1640.2 90"/><path d="M1640.2 112.6 C1643.5 114.7 1655.7 120.5 1660.3 125.1 C1664.9 129.7 1666.1 131.8 1667.8 140.1 C1669.5 148.4 1669.5 166.8 1670.3 175.1 C1671.1 183.4 1672.4 187.6 1672.8 190.1"/><path d="M1575.2 200.1 C1579.4 201.8 1591.5 206.8 1600.2 210.1 C1609.0 213.4 1623.1 213.4 1627.7 220.1 C1632.3 226.8 1628.5 241.8 1627.7 250.1 C1626.9 258.4 1623.5 266.8 1622.7 270.1"/><path d="M1681.4 300 C1684.1 302.3 1694.0 308.0 1697.4 313.7 C1700.8 319.4 1699.7 327.8 1702 334.3 C1704.3 340.8 1709.2 345.6 1711.1 352.5 C1713.0 359.4 1711.9 367.4 1713.4 375.4 C1714.9 383.4 1717.5 392.5 1720.2 400.5 C1722.9 408.5 1726.4 416.5 1729.4 423.4 C1732.5 430.2 1735.8 436.3 1738.5 441.6 C1741.2 446.9 1743.9 450.8 1745.4 455.4 C1746.9 460.0 1746.1 464.9 1747.6 469.1 C1749.1 473.3 1753.7 476.3 1754.5 480.5 C1755.3 484.7 1751.4 488.9 1752.2 494.2 C1753.0 499.5 1757.2 504.5 1759.1 512.5 C1761.0 520.5 1764.0 534.6 1763.6 542.2 C1763.2 549.8 1757.9 555.5 1756.8 558.2"/><path d="M1733.9 300 C1734.5 303.8 1737.8 315.2 1737.4 322.8 C1737.0 330.4 1731.9 338.1 1731.7 345.7 C1731.5 353.3 1735.2 360.1 1736.2 368.5 C1737.2 376.9 1737.8 387.6 1737.4 396 C1737.0 404.4 1733.3 411.9 1733.9 418.8 C1734.5 425.7 1739.7 434.1 1740.8 437.1"/><path d="M1631.1 397.1 C1633.8 396.7 1642.9 397.3 1647.1 394.8 C1651.3 392.3 1652.1 385.2 1656.3 382.2 C1660.5 379.1 1669.6 377.4 1672.3 376.5"/><path d="M1658.5 467.9 C1661.2 468.5 1669.9 473.1 1674.5 471.4 C1679.1 469.7 1681.4 458.9 1686 457.6 C1690.6 456.3 1696.7 464.9 1702 463.4 C1707.3 461.9 1713.3 449.8 1717.9 448.5 C1722.5 447.2 1725.2 454.2 1729.4 455.4 C1733.6 456.5 1740.8 455.4 1743.1 455.4"/><path d="M1606 567.3 C1608.3 567.7 1614.4 569.2 1619.7 569.6 C1625.0 570.0 1632.7 570.8 1638 569.6 C1643.3 568.5 1649.4 563.9 1651.7 562.7"/><path d="M1786.5 306.9 C1787.6 308.4 1792.9 312.2 1793.3 316 C1793.7 319.8 1788.8 325.5 1788.8 329.7 C1788.8 333.9 1792.7 334.6 1793.3 341.1 C1793.9 347.6 1791.4 360.9 1792.2 368.5 C1793.0 376.1 1795.6 380.3 1797.9 386.8 C1800.2 393.3 1804.6 404.0 1805.9 407.4"/><path d="M1629 604.6 C1629.2 609.6 1628.9 624.5 1630.1 634.5 C1631.2 644.5 1634.2 656.4 1635.9 664.4 C1637.6 672.4 1637.0 676.7 1640.5 682.8 C1644.0 688.9 1652.2 696.1 1656.6 701.1 C1661.0 706.1 1665.8 708.0 1666.9 712.6 C1668.1 717.2 1664.5 723.0 1663.5 728.7 C1662.5 734.5 1661.6 744.0 1661.2 747.1"/><path d="M1606 627.6 C1608.7 631.8 1617.1 646.8 1622.1 652.9 C1627.1 659.0 1633.6 662.5 1635.9 664.4"/><path d="M1670.4 649.4 C1671.2 652.3 1672.7 661.9 1675 666.7 C1677.3 671.5 1681.9 674.6 1684.2 678.2 C1686.5 681.8 1690.3 684.7 1688.8 688.5 C1687.3 692.3 1678.5 697.5 1675 701.1 C1671.5 704.7 1669.2 708.8 1668.1 710.3"/><path d="M1679.6 602.3 C1682.7 602.7 1692.3 602.7 1698 604.6 C1703.7 606.5 1709.8 610.3 1714 613.8 C1718.2 617.2 1719.8 622.2 1723.2 625.3 C1726.7 628.4 1729.7 631.2 1734.7 632.2 C1739.7 633.2 1747.7 629.9 1753.1 631 C1758.5 632.1 1764.6 637.8 1766.9 639.1"/><path d="M1707.1 683.9 C1710.2 683.3 1719.4 681.3 1725.5 680.5 C1731.6 679.7 1738.2 679.7 1743.9 679.3 C1749.7 678.9 1757.3 678.4 1760 678.2"/><path d="M1723.2 774.7 C1725.1 776.6 1730.5 782.8 1734.7 786.2 C1738.9 789.7 1743.9 792.7 1748.5 795.4 C1753.1 798.1 1758.5 800.8 1762.3 802.3 C1766.1 803.8 1770.0 804.2 1771.5 804.6"/><path d="M1671.5 779.3 C1672.8 782.4 1676.7 793.5 1679.6 797.7 C1682.5 801.9 1685.7 801.2 1688.8 804.6 C1691.9 808.0 1696.5 816.1 1698 818.4"/><path d="M600 15 C602.1 13.8 608.8 5.8 612.5 7.5 C616.2 9.2 617.5 18.8 622.5 25 C627.5 31.2 637.9 38.8 642.5 45 C647.1 51.2 650.0 57.5 650 62.5 C650.0 67.5 646.7 72.5 642.5 75 C638.3 77.5 629.2 74.2 625 77.5 C620.8 80.8 616.7 89.6 617.5 95 C618.3 100.4 627.9 107.6 630 110.1"/><path d="M720.1 30 C721.8 27.5 726.8 19.2 730.1 15 C733.4 10.8 738.4 6.7 740.1 5"/><path d="M772.6 52.5 C769.7 54.6 760.5 61.7 755.1 65 C749.7 68.3 743.4 69.6 740.1 72.5 C736.8 75.4 732.6 79.6 735.1 82.5 C737.6 85.4 751.8 88.8 755.1 90"/><path d="M855.1 62.5 C857.6 64.6 864.2 74.2 870.1 75 C876.0 75.8 884.4 69.2 890.2 67.5 C896.1 65.8 901.5 68.8 905.2 65 C909.0 61.2 911.9 51.7 912.7 45 C913.5 38.3 907.3 29.6 910.2 25 C913.1 20.4 925.6 18.3 930.2 17.5 C934.8 16.7 936.5 19.6 937.7 20"/><path d="M862.6 117.6 C863.4 120.5 864.7 130.1 867.6 135.1 C870.5 140.1 876.4 145.1 880.2 147.6 C884.0 150.1 887.7 152.2 890.2 150.1 C892.7 148.0 894.4 137.6 895.2 135.1"/><path d="M930.2 102.6 C928.5 105.1 924.8 113.8 920.2 117.6 C915.6 121.3 906.5 122.2 902.7 125.1 C899.0 128.0 898.5 133.4 897.7 135.1"/><path d="M980.2 112.6 C979.8 115.9 979.4 126.3 977.7 132.6 C976.0 138.8 972.3 144.2 970.2 150.1 C968.1 156.0 966.0 165.1 965.2 168.1"/><path d="M610 140.1 C612.5 143.4 619.6 153.4 625 160.1 C630.4 166.8 636.2 179.3 642.5 180.1 C648.8 180.9 659.2 167.6 662.5 165.1"/><path d="M730.1 200.1 C731.8 202.2 736.4 207.6 740.1 212.6 C743.9 217.6 749.3 226.8 752.6 230.1 C755.9 233.4 758.9 232.2 760.1 232.6"/><path d="M1082.8 120.1 C1081.5 123.4 1078.5 133.4 1075.2 140.1 C1071.9 146.8 1066.5 155.1 1062.7 160.1 C1059.0 165.1 1054.4 168.4 1052.7 170.1"/><path d="M1100.3 180.1 C1101.5 183.4 1104.0 193.4 1107.8 200.1 C1111.5 206.8 1121.1 213.4 1122.8 220.1 C1124.5 226.8 1117.0 230.9 1117.8 240.1 C1118.6 249.3 1127.8 263.0 1127.8 275.1 C1127.8 287.2 1119.5 306.4 1117.8 312.7"/><path d="M1160 75 C1156.7 76.2 1147.3 79.2 1140.3 82.5 C1133.3 85.8 1123.6 92.1 1117.8 95 C1112.0 97.9 1107.4 99.2 1105.3 100.1"/><path d="M1271 483 C1269.6 485.3 1266.4 491.0 1262.4 496.8 C1258.4 502.6 1251.7 511.6 1246.8 517.6 C1241.9 523.6 1235.9 527.4 1233 533.1 C1230.1 538.9 1229.8 546.3 1229.5 552.1 C1229.2 557.9 1230.9 565.1 1231.2 567.7"/><path d="M1308 493.4 C1304.7 498.3 1295.9 513.0 1288.3 522.8 C1280.7 532.6 1271.1 544.3 1262.4 552.1 C1253.8 559.9 1245.1 564.2 1236.4 569.4 C1227.8 574.6 1219.1 577.8 1210.5 583.3 C1201.9 588.8 1193.2 596.0 1184.6 602.3 C1175.9 608.6 1166.1 615.0 1158.6 621.3 C1151.1 627.6 1143.6 634.2 1139.6 640.3 C1135.6 646.3 1134.1 653.6 1134.4 657.6 C1134.7 661.6 1140.2 663.4 1141.4 664.5"/><path d="M1194.9 505.5 C1193.8 510.1 1188.0 524.5 1188 533.1 C1188.0 541.7 1197.2 550.7 1194.9 557.3 C1192.6 563.9 1181.7 566.8 1174.2 572.9 C1166.7 579.0 1157.2 587.3 1150 593.6 C1142.8 599.9 1136.2 606.3 1131 610.9 C1125.8 615.5 1120.9 619.6 1118.9 621.3"/><path d="M1039.4 645.5 C1043.4 644.6 1055.2 640.9 1063.6 640.3 C1071.9 639.7 1080.9 642.4 1089.5 642 C1098.1 641.6 1111.1 638.4 1115.4 637.7"/><path d="M1308 564.2 C1305.6 566.8 1295.6 573.2 1293.5 579.8 C1291.4 586.4 1294.0 598.2 1295.2 604 C1296.4 609.8 1299.5 612.7 1300.4 614.4"/><path d="M1125.8 283 C1124.7 285.9 1121.8 293.2 1118.9 300.3 C1116.0 307.4 1110.2 321.2 1108.5 325.4"/><path d="M1144.8 345.2 C1144.8 349.2 1145.1 361.3 1144.8 369.4 C1144.5 377.5 1143.2 386.7 1143.1 393.6 C1143.0 400.5 1143.8 408.0 1144 410.9"/><path d="M1172.5 372.9 C1171.9 375.8 1169.0 384.4 1169 390.2 C1169.0 396.0 1172.5 402.3 1172.5 407.5 C1172.5 412.7 1169.6 419.0 1169 421.3"/></g>
<g fill="none" stroke="#a4cbd0" stroke-width="1" stroke-linejoin="round"><path d="M715.2 499.7 C714.6 501.4 712.9 506.6 711.7 510 C710.6 513.5 707.7 518.9 708.3 520.4 C708.9 521.9 714.1 519.0 715.2 518.7"/><path d="M741.1 496.2 C740.2 498.5 737.9 506.2 735.9 510 C733.9 513.8 731.9 516.7 729 518.7 C726.1 520.7 721.5 521.0 718.6 522.1 C715.7 523.2 712.9 525.0 711.7 525.6"/><path d="M805.1 490.2 C803.9 492.6 800.7 501.3 798.1 504.9 C795.5 508.5 790.6 508.1 789.5 511.8 C788.4 515.5 790.3 522.1 791.2 527.3 C792.1 532.5 794.7 538.9 794.7 542.9 C794.7 546.9 790.1 548.9 791.2 551.5 C792.4 554.1 798.1 557.8 801.6 558.4 C805.1 559.0 810.0 557.6 812 555 C814.0 552.4 813.4 544.9 813.7 542.9"/><path d="M851.7 497.9 C850.8 499.9 847.1 506.0 846.5 510 C845.9 514.0 848.9 517.8 848.3 522.1 C847.7 526.4 845.7 531.1 843.1 536 C840.5 540.9 835.0 546.3 832.7 551.5 C830.4 556.7 829.9 564.5 829.3 567.1"/><path d="M751.5 542 C749.5 543.0 743.1 546.8 739.4 548.1 C735.6 549.4 731.6 550.4 729 549.8 C726.4 549.2 724.7 545.5 723.8 544.6"/><path d="M742.8 565.4 C741.1 566.2 736.5 569.9 732.5 570.5 C728.5 571.1 720.9 569.1 718.6 568.8"/><path d="M793 555 C791.5 557.6 786.9 566.8 784.3 570.5 C781.7 574.2 778.5 576.3 777.4 577.5"/><path d="M917.4 560.2 C914.8 561.9 907.4 567.0 901.9 570.5 C896.4 574.0 889.2 576.6 884.6 580.9 C880.0 585.2 875.9 593.9 874.2 596.5"/><path d="M780.9 618.9 C783.8 619.8 792.4 624.7 798.1 624.1 C803.9 623.5 809.9 616.4 815.4 615.5 C820.9 614.6 829.0 616.9 831 618.9 C833.0 620.9 828.1 626.1 827.5 627.6"/><path d="M831 601.7 C831.3 604.3 831.6 613.2 832.7 617.2 C833.9 621.2 833.6 622.1 837.9 625.9 C842.2 629.6 856.0 635.1 858.6 639.7 C861.2 644.3 856.4 649.5 853.5 653.5 C850.6 657.5 843.4 662.2 841.4 663.9"/><path d="M905.3 627.6 C905.9 629.6 906.5 636.5 908.8 639.7 C911.1 642.9 917.7 643.2 919.1 646.6 C920.5 650.0 918.5 655.8 917.4 660.4 C916.2 665.0 913.1 672.0 912.2 674.3"/><path d="M953.7 639.7 C952.6 642.0 948.5 648.9 946.8 653.5 C945.1 658.1 943.7 662.9 943.4 667.3 C943.1 671.7 944.8 677.9 945.1 680"/><path d="M984.8 503.1 C985.1 500.5 986.6 493.1 986.6 487.6 C986.6 482.1 984.8 476.1 984.8 470.3 C984.8 464.5 986.3 455.9 986.6 453"/><path d="M901.9 470.3 C903.6 472.0 908.8 477.8 912.2 480.7 C915.7 483.6 918.6 487.6 922.6 487.6 C926.6 487.6 934.1 481.9 936.4 480.7"/><path d="M782.8 239.9 C784.5 241.9 789.5 251.4 793.2 252 C797.0 252.6 799.2 245.4 805.3 243.4 C811.3 241.4 824.3 239.0 829.5 239.9 C834.7 240.8 835.2 247.2 836.4 248.6"/><path d="M769 271 C770.5 272.4 775.4 276.5 777.7 279.7 C780.0 282.9 783.1 286.8 782.8 290 C782.5 293.2 777.0 297.2 775.9 298.7"/><path d="M824.3 272.8 C822.3 274.5 815.4 279.9 812.2 283.1 C809.0 286.3 803.6 290.1 805.3 291.8 C807.0 293.5 818.3 293.5 822.6 293.5 C826.9 293.5 829.8 292.1 831.2 291.8"/><path d="M869.3 262.4 C868.4 266.1 865.5 276.8 864.1 284.9 C862.7 293.0 862.0 302.2 860.6 310.8 C859.2 319.4 856.9 328.9 855.5 336.7 C854.1 344.5 852.6 354.0 852 357.5"/><path d="M777.7 336.7 C778.9 337.9 779.4 342.5 784.6 343.6 C789.8 344.8 803.3 340.1 808.8 343.6 C814.3 347.1 814.2 360.4 817.4 364.4 C820.6 368.4 825.2 363.8 827.8 367.8 C830.4 371.8 832.1 385.1 833 388.6"/><path d="M699.9 307.3 L698.1 322.9"/><path d="M729.3 352.3 C727.8 354.3 722.6 360.9 720.6 364.4 C718.6 367.8 717.8 371.6 717.2 373"/><path d="M668.8 354 C667.9 355.7 662.2 361.5 663.6 364.4 C665.0 367.3 673.1 371.0 677.4 371.3 C681.7 371.6 687.5 367.0 689.5 366.1"/><path d="M857.2 388.6 C853.7 387.5 844.2 382.0 836.4 381.7 C828.6 381.4 819.1 384.5 810.5 386.8 C801.9 389.1 793.5 392.3 784.6 395.5 C775.7 398.7 761.5 404.2 756.9 405.9"/><path d="M705.1 397.2 C704.8 400.1 704.5 408.7 703.3 414.5 C702.1 420.3 696.1 428.4 698.1 431.8 C700.1 435.2 710.8 435.2 715.4 435.2 C720.0 435.2 724.1 432.4 725.8 431.8"/><path d="M763.8 412.8 C764.4 414.8 767.3 420.9 767.3 424.9 C767.3 428.9 764.4 435.0 763.8 437"/><path d="M914.9 283 C916.6 285.0 920.7 293.1 925.3 295.1 C929.9 297.1 936.8 296.5 942.6 295.1 C948.4 293.7 957.0 287.9 959.9 286.5"/><path d="M989.2 300.3 C990.7 304.6 995.6 319.0 997.9 326.2 C1000.2 333.4 1003.1 336.3 1003.1 343.5 C1003.1 350.7 999.4 361.0 997.9 369.4 C996.4 377.8 994.4 386.1 994.4 393.6 C994.4 401.1 997.6 406.9 997.9 414.4 C998.2 421.9 996.5 434.6 996.2 438.6"/><path d="M1010 291.6 C1013.2 291.8 1020.1 291.6 1029 292.5 C1037.9 293.4 1057.8 296.1 1063.6 296.8"/><path d="M908 386.7 C909.7 389.0 913.8 397.6 918.4 400.5 C923.0 403.4 931.7 406.3 935.7 404 C939.7 401.7 939.7 392.5 942.6 386.7 C945.5 380.9 951.2 372.3 952.9 369.4"/><path d="M1018.6 412.6 C1020.3 410.3 1023.5 402.0 1029 398.8 C1034.5 395.6 1045.7 395.6 1051.5 393.6 C1057.3 391.6 1059.3 386.4 1063.6 386.7 C1067.9 387.0 1075.1 393.9 1077.4 395.4"/><path d="M1063.6 386.7 L1067 367.7"/><path d="M985.8 445.5 C985.5 450.1 984.7 464.2 984.1 473.1 C983.5 482.0 982.6 494.8 982.3 499.1"/><path d="M1042.8 473.1 L1041.1 490.4"/><path d="M977.1 500.8 L984.1 510"/><path d="M918.4 486.5 C921.0 488.2 928.4 496.2 933.9 496.8 C939.4 497.4 946.0 492.2 951.2 489.9 C956.4 487.6 962.7 484.1 965 483"/><path d="M982.3 486.5 C982.9 488.8 982.6 499.7 985.8 500.3 C989.0 500.9 998.7 491.6 1001.3 489.9"/><path d="M1132.7 493.4 C1129.8 496.6 1121.2 506.9 1115.4 512.4 C1109.6 517.9 1105.3 521.6 1098.1 526.2 C1090.9 530.8 1080.0 535.1 1072.2 540 C1064.4 544.9 1055.0 553.0 1051.5 555.6"/><path d="M1113.7 540 C1112.0 538.0 1107.6 530.8 1103.3 527.9 C1099.0 525.0 1090.4 523.6 1087.8 522.8"/><path d="M1015.2 564.2 C1013.5 566.8 1007.7 573.8 1004.8 579.8 C1001.9 585.8 1000.2 595.3 997.9 600.5 C995.6 605.7 992.1 609.2 991 610.9"/><path d="M1061.8 559.1 L1051.5 574.6"/><path d="M1018.6 638.6 C1015.1 640.9 1002.8 646.6 997.9 652.4 C993.0 658.1 991.2 666.8 989.2 673.1 C987.2 679.4 986.4 687.5 985.8 690.4"/><path d="M951.2 643.8 C949.8 647.2 942.3 658.8 942.6 664.5 C942.9 670.2 952.0 672.5 952.9 678.3 C953.8 684.1 948.6 695.6 947.8 699.1"/><path d="M908 647.2 C909.7 648.7 917.2 651.6 918.4 655.9 C919.5 660.2 916.6 667.4 914.9 673.1 C913.2 678.9 909.1 687.5 908 690.4"/><path d="M978.9 619.6 C978.6 622.8 976.8 633.1 977.1 638.6 C977.4 644.1 980.0 650.1 980.6 652.4"/><path d="M882.7 200.1 C878.9 201.3 866.4 208.0 860.1 207.6 C853.8 207.2 849.7 196.3 845.1 197.6 C840.5 198.8 834.3 208.0 832.6 215.1 C830.9 222.2 834.7 235.9 835.1 240.1"/><path d="M832.6 240.1 C828.0 241.8 811.4 246.8 805.1 250.1 C798.9 253.4 799.3 261.8 795.1 260.1 C790.9 258.4 782.6 243.4 780.1 240.1"/><path d="M920.2 182.6 C918.1 184.7 910.2 191.3 907.7 195.1 C905.2 198.8 902.3 202.6 905.2 205.1 C908.1 207.6 919.4 208.8 925.2 210.1 C931.0 211.3 935.2 212.6 940.2 212.6 C945.2 212.6 952.7 210.5 955.2 210.1"/><path d="M957.7 170.1 L955.2 212.6"/><path d="M1027.7 225.1 C1025.6 227.2 1019.0 233.0 1015.2 237.6 C1011.5 242.2 1011.0 248.8 1005.2 252.6 C999.4 256.4 985.6 256.8 980.2 260.1 C974.8 263.4 974.0 270.5 972.7 272.6"/><path d="M865.1 262.6 L862.6 300.2"/><path d="M767.6 275.1 C770.5 276.8 783.0 280.9 785.1 285.1 C787.2 289.3 780.9 297.7 780.1 300.2"/></g>
<g fill="none" stroke="#e0c2e6" stroke-width="1" stroke-dasharray="6 4"><path d="M1160 241.4 C1163.3 241.4 1173.8 244.1 1180 241.4 C1186.2 238.7 1191.7 228.7 1197.5 225.1 C1203.3 221.5 1209.2 220.3 1215 220.1 C1220.8 219.9 1227.5 221.8 1232.5 223.9 C1237.5 226.0 1240.8 229.1 1245 232.6 C1249.2 236.1 1251.7 242.4 1257.5 245.1 C1263.3 247.8 1273.0 249.1 1280.1 248.9 C1287.2 248.7 1294.7 243.7 1300.1 243.9 C1305.5 244.1 1310.9 247.4 1312.6 250.1 C1314.3 252.8 1313.8 257.6 1310.1 260.1 C1306.3 262.6 1294.3 262.2 1290.1 265.1 C1285.9 268.0 1285.9 272.6 1285.1 277.6 C1284.3 282.6 1284.3 290.1 1285.1 295.1 C1285.9 300.1 1286.3 304.8 1290.1 307.7 C1293.8 310.6 1304.3 309.3 1307.6 312.7 C1310.9 316.1 1309.7 325.4 1310.1 327.9"/><path d="M1482.7 270.1 C1484.8 269.3 1491.5 267.6 1495.2 265.1 C1499.0 262.6 1500.6 258.0 1505.2 255.1 C1509.8 252.2 1516.0 249.3 1522.7 247.6 C1529.4 245.9 1538.1 245.5 1545.2 245.1 C1552.3 244.7 1561.9 245.1 1565.2 245.1"/><path d="M1302.6 328 C1303.8 330.1 1305.5 335.9 1310.1 340.5 C1314.7 345.1 1323.4 351.3 1330.1 355.5 C1336.8 359.7 1343.4 361.8 1350.1 365.5 C1356.8 369.2 1364.3 375.3 1370.1 378 C1375.9 380.7 1380.1 382.2 1385.1 381.8 C1390.1 381.4 1395.5 376.3 1400.1 375.5 C1404.7 374.7 1410.5 376.6 1412.6 376.8"/><path d="M1160 341.8 C1161.7 342.4 1167.5 342.4 1170 345.5 C1172.5 348.6 1171.2 355.7 1175 360.5 C1178.8 365.3 1184.2 370.8 1192.5 374.3 C1200.8 377.9 1217.9 379.5 1225 381.8 C1232.1 384.1 1228.3 387.6 1235 388 C1241.7 388.4 1255.9 385.3 1265.1 384.3 C1274.3 383.3 1285.5 379.9 1290.1 381.8 C1294.7 383.7 1290.9 390.7 1292.6 395.5 C1294.3 400.3 1295.1 406.8 1300.1 410.5 C1305.1 414.2 1315.1 416.8 1322.6 418 C1330.1 419.2 1338.8 416.8 1345.1 418 C1351.3 419.2 1354.3 423.4 1360.1 425.5 C1365.9 427.6 1373.4 430.6 1380.1 430.6 C1386.8 430.6 1393.4 428.0 1400.1 425.5 C1406.8 423.0 1416.3 419.2 1420.1 415.5 C1423.8 411.8 1422.6 407.2 1422.6 403 C1422.6 398.8 1419.7 392.6 1420.1 390.5 C1420.5 388.4 1421.3 392.6 1425.1 390.5 C1428.8 388.4 1436.8 383.0 1442.6 378 C1448.4 373.0 1456.7 365.1 1460.2 360.5 C1463.8 355.9 1463.3 352.2 1463.9 350.5"/><path d="M1160 535.6 C1162.1 536.0 1170.8 535.2 1172.5 538.1 C1174.2 541.0 1169.6 548.5 1170 553.1 C1170.4 557.7 1171.7 563.1 1175 565.6 C1178.3 568.1 1185.8 565.2 1190 568.1 C1194.2 571.0 1192.5 580.6 1200 583.1 C1207.5 585.6 1225.0 581.4 1235 583.1 C1245.0 584.8 1252.6 589.8 1260.1 593.1 C1267.6 596.4 1274.3 598.9 1280.1 603.1 C1285.9 607.3 1292.6 615.6 1295.1 618.1"/><path d="M1647.1 341.1 C1647.9 343.8 1648.3 353.3 1651.7 357.1 C1655.1 360.9 1662.8 359.4 1667.7 364 C1672.7 368.6 1676.5 379.2 1681.4 384.5 C1686.4 389.8 1693.2 391.8 1697.4 396 C1701.6 400.2 1701.9 406.7 1706.5 409.7 C1711.1 412.7 1720.2 411.2 1724.8 414.2 C1729.4 417.2 1732.0 423.7 1733.9 427.9 C1735.8 432.1 1734.7 436.7 1736.2 439.4 C1737.7 442.1 1742.7 447.3 1743.1 443.9 C1743.5 440.5 1739.7 427.6 1738.5 418.8 C1737.3 410.1 1737.0 399.8 1736.2 391.4 C1735.4 383.0 1732.8 374.6 1733.9 368.5 C1735.1 362.4 1739.7 358.8 1743.1 354.8 C1746.5 350.8 1749.9 344.2 1754.5 344.6 C1759.1 345.0 1764.8 354.6 1770.5 357.1 C1776.2 359.6 1785.0 362.1 1788.8 359.4 C1792.6 356.7 1790.4 344.5 1793.3 341.1 C1796.2 337.7 1803.8 339.2 1805.9 338.8"/><path d="M1606 533 C1607.9 533.0 1614.4 530.3 1617.4 533 C1620.5 535.7 1619.7 544.4 1624.3 549 C1628.9 553.6 1638.3 558.6 1644.8 560.5 C1651.3 562.4 1657.2 561.1 1663.1 560.5 C1669.0 559.9 1677.1 563.1 1680.3 557 C1683.5 550.9 1680.8 532.1 1682.5 523.9 C1684.2 515.7 1686.1 509.0 1690.5 507.9 C1694.9 506.8 1703.1 513.6 1708.8 517 C1714.5 520.4 1720.6 523.5 1724.8 528.5 C1729.0 533.5 1731.2 541.6 1733.9 546.7 C1736.6 551.8 1736.2 556.2 1740.8 559.3 C1745.4 562.3 1758.0 559.5 1761.4 565 C1764.8 570.5 1761.4 587.8 1761.4 592.4"/><path d="M1762.3 600 C1764.6 601.9 1773.6 608.0 1776.1 611.5 C1778.6 615.0 1778.6 618.4 1777.3 620.7 C1776.0 623.0 1769.1 622.0 1768.1 625.3 C1767.1 628.5 1772.8 635.8 1771.5 640.2 C1770.2 644.6 1761.2 645.8 1760 651.7 C1758.8 657.7 1764.8 670.0 1764.6 675.9 C1764.4 681.8 1758.9 682.8 1758.9 687.4 C1758.9 692.0 1763.8 695.9 1764.6 703.4 C1765.4 710.9 1763.5 724.9 1763.5 732.2 C1763.5 739.5 1762.7 743.7 1764.6 747.1 C1766.5 750.5 1772.9 749.8 1775 752.9 C1777.1 756.0 1776.9 763.4 1777.3 765.5"/><path d="M522.1 0.3 C518.2 4.5 501.0 19.5 498.8 25.4 C496.6 31.3 504.9 35.3 509.2 35.7 C513.5 36.1 517.4 28.9 524.7 28 C532.0 27.1 546.7 28.4 553.2 30.5 C559.7 32.6 558.4 41.1 563.6 40.9 C568.8 40.7 579.1 32.8 584.3 29.3 C589.5 25.9 590.7 21.5 594.6 20.2 C598.5 18.9 605.7 19.1 607.6 21.5 C609.5 23.9 603.7 30.1 606.3 34.4 C608.9 38.7 622.0 42.9 623.1 47.4 C624.2 51.9 614.5 59.2 612.8 61.6"/><path d="M579.1 113.4 C573.5 113.4 552.7 111.0 545.4 113.4 C538.1 115.8 538.5 123.6 535.1 127.7 C531.7 131.8 528.2 135.4 524.7 138 C521.2 140.6 513.1 139.8 514.4 143.2 C515.7 146.6 526.0 154.2 532.5 158.7 C539.0 163.2 548.0 168.7 553.2 170.4 C558.4 172.1 561.9 169.3 563.6 169.1"/><path d="M773.3 114.7 C781.5 115.1 812.6 115.1 822.5 117.3 C832.4 119.5 829.4 122.5 832.9 127.7 C836.4 132.9 842.3 141.1 843.2 148.4 C844.1 155.7 838.1 164.8 838.1 171.7 C838.1 178.6 842.4 186.8 843.2 189.8"/><path d="M805.1 115.1 C807.6 115.3 815.9 113.4 820.1 116.3 C824.3 119.2 826.4 127.4 830.1 132.6 C833.9 137.8 840.3 143.0 842.6 147.6 C844.9 152.2 844.7 156.3 843.9 160.1 C843.1 163.8 838.0 165.1 837.6 170.1 C837.2 175.1 840.8 186.8 841.4 190.1"/><path d="M962.7 32.5 C963.1 34.2 968.1 38.3 965.2 42.5 C962.3 46.7 949.0 52.1 945.2 57.5 C941.5 62.9 941.5 69.2 942.7 75 C944.0 80.8 948.5 87.1 952.7 92.5 C956.9 97.9 965.6 102.2 967.7 107.6 C969.8 113.0 966.5 119.3 965.2 125.1 C964.0 130.9 960.2 137.6 960.2 142.6 C960.2 147.6 965.6 150.8 965.2 155.1 C964.8 159.3 959.0 165.9 957.7 168.1"/><path d="M1067.7 12.5 C1074.0 15.4 1094.9 23.8 1105.3 30 C1115.7 36.2 1123.2 42.9 1130.3 50 C1137.4 57.1 1144.9 68.8 1147.8 72.5"/><path d="M1077.7 623.4 C1080.3 623.5 1086.9 623.8 1093.2 624.2 C1099.5 624.6 1112.0 623.5 1115.7 626 C1119.5 628.5 1116.3 635.3 1115.7 638.9 C1115.1 642.5 1111.9 645.0 1112.2 647.6 C1112.5 650.2 1113.9 653.1 1117.4 654.5 C1120.9 655.9 1130.4 655.9 1133 656.2"/><path d="M1055.2 720.2 C1057.8 720.8 1065.8 722.5 1070.7 723.6 C1075.6 724.8 1081.1 725.7 1084.6 727.1 C1088.1 728.5 1090.3 728.3 1091.5 732.3 C1092.7 736.3 1090.3 747.3 1091.5 751.3 C1092.7 755.3 1096.7 757.4 1098.4 756.5 C1100.1 755.6 1099.6 748.4 1101.9 746.1 C1104.2 743.8 1107.3 743.2 1112.2 742.6 C1117.1 742.0 1126.0 740.3 1131.2 742.6 C1136.4 744.9 1139.7 753.3 1143.4 756.5 C1147.2 759.7 1150.2 760.8 1153.7 761.7 C1157.2 762.6 1162.4 761.7 1164.1 761.7"/><path d="M1139.9 740.9 C1141.6 739.5 1146.5 734.9 1150.3 732.3 C1154.0 729.7 1157.5 728.0 1162.4 725.4 C1167.3 722.8 1175.4 720.5 1179.7 716.7 C1184.0 713.0 1186.3 706.6 1188.3 702.9 C1190.3 699.1 1188.4 695.9 1191.8 694.2 C1195.2 692.5 1206.1 692.8 1208.9 692.5"/><path d="M1090.8 752 C1092.0 752.6 1095.4 756.5 1097.7 755.4 C1100.0 754.2 1101.1 747.2 1104.6 745.1 C1108.0 743.0 1114.4 742.8 1118.4 742.5 C1122.4 742.2 1125.2 742.6 1128.7 743.3 C1132.2 744.0 1136.8 744.8 1139.1 746.8 C1141.4 748.8 1139.9 752.8 1142.5 755.4 C1145.1 758.0 1149.7 762.6 1154.6 762.3 C1159.5 762.0 1166.2 756.6 1171.9 753.7 C1177.7 750.8 1183.9 747.7 1189.1 745.1 C1194.3 742.5 1198.6 739.2 1202.9 738.2 C1207.2 737.2 1213.0 737.6 1215 739 C1217.0 740.4 1216.7 744.1 1215 746.8 C1213.3 749.5 1207.5 751.9 1204.6 755.4 C1201.7 758.9 1198.8 765.5 1197.7 767.5"/><path d="M1206.4 777 C1209.3 777.4 1217.6 778.9 1223.6 779.6 C1229.6 780.3 1238.3 779.3 1242.6 781.3 C1246.9 783.3 1247.8 791.0 1249.5 791.6 C1251.2 792.2 1250.6 788.2 1252.9 784.7 C1255.2 781.2 1259.8 773.8 1263.3 770.9 C1266.8 768.0 1270.1 766.4 1273.6 767.5 C1277.0 768.6 1279.4 774.1 1284 777.8 C1288.6 781.5 1298.3 787.9 1301.2 789.9"/><path d="M1251.2 788.2 C1251.5 790.5 1253.2 797.7 1252.9 802 C1252.6 806.3 1253.0 810.6 1249.5 814.1 C1246.0 817.6 1238.0 822.4 1232.2 822.7 C1226.5 823.0 1217.9 816.9 1215 815.8"/><path d="M1054.6 802 C1056.0 802.0 1060.9 800.3 1063.2 802 C1065.5 803.7 1066.1 810.3 1068.4 812.3 C1070.7 814.3 1075.6 813.8 1077 814.1"/><path d="M1111.5 839.9 C1114.4 838.8 1123.0 833.6 1128.7 833 C1134.5 832.4 1141.1 836.2 1146 836.5 C1150.9 836.8 1156.1 835.1 1158.1 834.8"/><path d="M1380.6 789.9 C1380.3 793.4 1379.4 804.3 1378.8 810.6 C1378.2 816.9 1380.0 823.6 1377.1 827.9 C1374.2 832.2 1367.0 833.9 1361.6 836.5 C1356.1 839.1 1348.7 840.8 1344.4 843.4 C1340.1 846.0 1337.2 850.6 1335.7 852"/><path d="M1382.3 815.8 C1384.0 819.2 1389.7 830.2 1392.6 836.5 C1395.5 842.8 1399.2 848.0 1399.5 853.7 C1399.8 859.5 1396.4 866.7 1394.4 871 C1392.4 875.3 1387.5 876.7 1387.5 879.6 C1387.5 882.5 1393.0 884.3 1394.4 888.2 C1395.8 892.1 1395.8 900.5 1396.1 902.9"/><path d="M1119.8 549.6 C1122.0 548.6 1127.7 545.4 1132.7 543.5 C1137.7 541.6 1144.2 539.4 1150 538.3 C1155.8 537.1 1163.3 537.2 1167.3 536.6 C1171.3 536.0 1173.6 532.9 1174.2 534.9 C1174.8 536.9 1171.0 544.7 1170.7 548.7 C1170.4 552.7 1171.3 556.2 1172.5 559.1 C1173.7 562.0 1175.1 564.0 1177.7 566 C1180.3 568.0 1185.1 568.9 1188 571.2 C1190.9 573.5 1192.6 577.5 1194.9 579.8 C1197.2 582.1 1197.9 584.3 1201.9 585 C1205.9 585.7 1213.0 584.5 1219.1 584.1 C1225.1 583.7 1232.4 581.7 1238.2 582.4 C1244.0 583.1 1248.2 585.9 1253.7 588.4 C1259.2 590.9 1265.5 594.2 1271 597.1 C1276.5 600.0 1282.8 602.2 1286.6 605.7 C1290.3 609.2 1292.3 615.8 1293.5 617.8"/><path d="M1075.7 623 C1078.0 623.3 1085.2 624.1 1089.5 624.7 C1093.8 625.3 1097.3 626.2 1101.6 626.5 C1105.9 626.8 1112.8 625.6 1115.4 626.5 C1118.0 627.4 1117.8 628.8 1117.2 631.7 C1116.6 634.6 1112.6 640.3 1112 643.8 C1111.4 647.2 1112.0 650.2 1113.7 652.4 C1115.4 654.5 1118.8 656.1 1122.3 656.7 C1125.8 657.3 1132.4 656.0 1134.4 655.9"/><path d="M1127.5 341.8 C1129.8 341.2 1138.5 337.4 1141.4 338.3 C1144.3 339.2 1145.1 344.4 1144.8 347 C1144.5 349.6 1138.4 352.8 1139.6 353.9 C1140.8 355.0 1148.0 355.9 1151.7 353.9 C1155.5 351.9 1158.9 343.5 1162.1 341.8 C1165.3 340.1 1169.0 341.2 1170.7 343.5 C1172.4 345.8 1172.2 353.6 1172.5 355.6"/></g>
<g fill="none" stroke="#cbb5dc" stroke-width="1" stroke-linejoin="round"><path d="M1160 70 L1175 67.5 L1187.5 73.8 L1195 86.3 L1205 75 L1207.5 85 L1200 105.1 L1185 110.1 L1190 130.1 L1175 147.6 L1165 165.1 L1167.5 187.6 L1160 202.6"/><path d="M1482.7 257.6 L1477.7 275.1 L1480.2 295.1 L1472.7 312.7 L1462.7 327.9"/><path d="M695.6 0.3 L690.5 16.3 L695.6 39.6 L687.9 57.7 L690.5 73.3 L711.2 69.4 L721.5 75.9 L737.1 77.2 L750 68.1 L763 59 L772 52.6 L778.5 68.1 L791.4 70.7 L794 86.2 L786.3 104.3 L791.4 114.7"/><path d="M690.5 73.3 L672.3 70.7 L646.4 75.9 L620.5 70.7 L615.4 70.7 L594.6 78.5 L588.2 86.2 L589.5 101.8 L581.7 112.1"/><path d="M937.7 0 L940.2 17.5 L955.2 23.8 L962.7 32.5"/><path d="M1152.8 220.1 L1155.3 240.1 L1147.8 252.6"/><path d="M1093.2 687.3 L1101.9 682.1 L1115.7 673.5 L1131.2 663.1 L1134.7 657.9"/><path d="M1056.9 715 L1053.5 730.5 L1050 751.3 L1051.7 763.4 L1041.4 775.5 L1031 785.9 L1034.4 796.2"/><path d="M1049.4 733 L1051.1 746.8 L1049.4 760.6 L1040.8 776.1 L1030.4 784.7 L1032.1 793.4"/><path d="M1127 753.7 L1116.7 777.8 L1120.1 788.2 L1128.7 796.8 L1149.4 784.7 L1156.3 789.9 L1161.5 805.4 L1156.3 819.2 L1158.1 829.6 L1163.2 836.5 L1161.5 853.7 L1166.7 862.4 L1163.2 876.2"/><path d="M1189.1 777.8 L1187.4 793.4 L1187.4 815.8 L1178.8 829.6 L1171.9 843.4"/><path d="M1293.5 617.8 L1281.4 635.1 L1283.1 645.5 L1272.7 659.3 L1267.6 671.4 L1262.4 681.8 L1276.2 687 L1290 681.8 L1291.8 671.4 L1308 662.8"/><path d="M1262.4 681.8 L1245.1 690.4 L1227.8 699.1 L1217.4 710"/><path d="M1134.4 662.8 L1115.4 674.9 L1098.1 685.2 L1080.9 697.3 L1068.8 706"/></g>
<g fill="none" stroke="#9fa8e0" stroke-width=".7" stroke-dasharray="5 4"><path d="M288.9 0 C289.1 4.2 287.4 19.2 290.1 25 C292.8 30.8 296.0 30.4 305.2 35 C314.4 39.6 334.8 48.3 345.2 52.5 C355.6 56.7 361.9 59.6 367.7 60 C373.5 60.4 376.7 57.3 380.2 55 C383.7 52.7 387.4 47.8 388.9 46.3"/></g>
<g fill="none" stroke="#bb98c8" stroke-width="1.7" stroke-linejoin="round"><path d="M70 0 L85 11.3 L125.1 27.5 L160.1 40 L180.1 46.3 L210.1 47.5 L213.9 45 L255.1 45 L275.1 30 L302.7 3.8 L310.2 0"/><path d="M162.6 0 L186.3 8.8 L205.1 0"/><path d="M591.8 358.3 L626.4 346.2"/><path d="M937.3 765.1 L954 734.6"/></g>
<g fill="none" stroke="#bb98c8" stroke-width="1.7" stroke-linejoin="round"><path d="M275.1 30 C277.2 32.9 283.4 42.9 287.6 47.5 C291.8 52.1 294.8 55.0 300.2 57.5 C305.6 60.0 314.8 61.9 320.2 62.5 C325.6 63.1 329.2 60.0 332.7 61.3 C336.2 62.5 339.7 66.0 341.4 70 C343.1 74.0 341.2 79.6 342.7 85 C344.2 90.4 347.3 98.0 350.2 102.6 C353.1 107.2 356.0 109.5 360.2 112.6 C364.4 115.7 372.3 118.0 375.2 121.3 C378.1 124.6 375.2 127.8 377.7 132.6 C380.2 137.4 385.6 145.1 390.2 150.1 C394.8 155.1 399.4 160.1 405.2 162.6 C411.0 165.1 418.9 162.2 425.2 165.1 C431.4 168.0 436.0 175.1 442.7 180.1 C449.4 185.1 457.3 190.5 465.2 195.1 C473.1 199.7 482.7 202.6 490.2 207.6 C497.7 212.6 506.8 221.5 510.3 225.1 C513.9 228.7 513.2 226.4 511.5 228.9 C509.8 231.4 503.2 235.7 500.3 240.1 C497.4 244.5 495.3 249.7 494 255.1 C492.7 260.5 491.6 266.8 492.7 272.6 C493.8 278.4 496.5 285.1 500.3 290.1 C504.1 295.1 509.0 299.4 515.3 302.7 C521.5 306.0 529.5 310.2 537.8 310.2 C546.1 310.2 560.3 302.3 565.3 302.7 C570.3 303.1 565.3 308.5 567.8 312.7 C570.2 316.9 578.0 325.4 580 327.9"/><path d="M556.4 306.5 C558.1 305.8 564.8 301.1 566.8 302.1 C568.8 303.1 567.1 308.8 568.5 312.5 C569.9 316.2 572.2 320.6 575.4 324.6 C578.6 328.6 585.2 332.1 587.5 336.7 C589.8 341.3 588.5 348.7 589.2 352.3 C589.9 355.9 591.4 357.3 591.8 358.3"/><path d="M592.3 358.1 C592.7 360.0 593.2 365.5 594.6 369.6 C596.0 373.7 599.6 374.1 600.7 382.5 C601.8 390.9 602.4 412.1 601.4 419.8 C600.4 427.6 596.2 425.7 594.6 429 C593.0 432.3 591.9 434.0 591.5 439.6 C591.1 445.2 591.3 456.1 592.3 462.5 C593.3 468.9 594.7 472.4 597.6 477.7 C600.5 483.0 608.8 490.2 609.8 494.5 C610.8 498.8 605.2 500.1 603.7 503.6 C602.2 507.2 601.0 510.9 600.7 515.8 C600.5 520.7 602.0 530.1 602.2 533"/><path d="M600.7 524.4 C602.2 527.5 605.8 537.9 609.8 542.7 C613.8 547.5 619.2 551.0 625 553.3 C630.8 555.6 641.2 554.1 644.8 556.4 C648.3 558.7 648.1 562.7 646.3 567 C644.5 571.3 636.5 576.7 634.2 582.3 C631.9 587.9 631.9 594.0 632.6 600.6 C633.4 607.2 635.9 615.8 638.7 621.9 C641.5 628.0 644.6 632.5 649.4 637.1 C654.2 641.7 660.6 646.5 667.7 649.3 C674.8 652.1 684.9 652.4 692 653.9 C699.1 655.4 704.4 656.9 710.3 658.4 C716.1 659.9 723.0 660.0 727.1 663 C731.2 666.0 730.9 672.9 734.7 676.7 C738.5 680.5 743.8 684.1 749.9 685.9 C756.0 687.7 762.7 685.4 771.3 687.4 C779.9 689.4 791.6 693.9 801.7 698 C811.9 702.1 822.1 707.5 832.2 711.8 C842.4 716.1 853.5 720.1 862.6 723.9 C871.7 727.7 880.4 731.5 887 734.6 C893.6 737.7 898.7 739.4 902.2 742.2 C905.8 745.0 902.4 747.6 908.3 751.4 C914.1 755.2 932.5 762.8 937.3 765.1"/><path d="M1018.3 831.3 C1019.4 831.7 1021.0 831.7 1025.2 833.9 C1029.4 836.1 1040.2 841.0 1043.4 844.3 C1046.6 847.6 1043.2 850.1 1044.2 853.7 C1045.2 857.3 1046.8 862.0 1049.4 865.8 C1052.0 869.5 1055.1 872.5 1059.7 876.2 C1064.3 879.9 1071.8 885.1 1077 888.2 C1082.2 891.4 1085.9 893.2 1090.8 895.1 C1095.7 897.0 1101.7 898.2 1106.3 899.5 C1110.9 900.8 1116.4 902.3 1118.4 902.9"/><path d="M935.9 765.1 C936.8 766.5 939.6 770.3 941.1 773.8 C942.6 777.3 942.6 782.2 944.6 785.9 C946.6 789.6 950.0 793.0 953.2 796.2 C956.4 799.4 959.0 802.3 963.6 804.9 C968.2 807.5 975.1 809.3 980.9 811.8 C986.6 814.2 992.4 817.0 998.1 819.6 C1003.9 822.2 1009.6 824.6 1015.4 827.3 C1021.2 830.0 1029.8 834.5 1032.7 836"/></g>
<g fill="none" stroke="#cb9ad2" stroke-width="2.6" stroke-linejoin="round"><path d="M626.4 345.4 L629 341.9 L639.4 338.4 L649.7 336.7 L654.9 340.2 L663.6 343.6 L672.2 338.4 L680.9 335 L686 322.9 L689.5 316 L688.6 307.3 L693 300.4 L698.1 302.1 L706.8 298.7 L718.9 297 L727.5 288.3 L728.4 279.7 L737.9 277.1 L740.5 267.6 L747.4 258.9 L749.1 250.3 L755.2 240.8 L756.9 233 L758.8 230.1 L770.1 217.6 L773.8 200.1 L780.1 192.6 L797.6 187.6 L823.9 181.3 L841.4 192.1 L881.4 180.1 L883.9 168.8 L1007.7 168.1 L1016.5 175.1 L1017.7 191.3 L1030.2 193.8 L1042.7 207.6 L1052.7 227.6 L1065.2 240.1 L1075.2 260.1 L1080.3 277.6 L1090.3 282.6 L1103.3 289.9 L1109.4 298.6 L1106.8 307.2 L1109.4 314.1 L1098.1 317.6 L1099.9 326.2 L1095.6 334.9 L1099.9 338.3 L1112 338.3 L1123.2 343.5 L1122.3 355.6 L1124.1 369.4 L1126.7 383.3 L1132.7 393.6 L1139.6 404 L1144 412.6 L1143.9 413 L1142.1 417.6 L1137.5 421.2 L1130.2 424 L1123.8 427.6 L1121 433.1 L1116.5 436.8 L1113.7 444.1 L1111 451.4 L1110.5 458.7 L1111.9 465.1 L1105.5 468.7 L1102.8 475.1 L1100.5 485.2"/></g>
<g fill="none" stroke="#8a8a8a" stroke-width="2.4" stroke-linejoin="round"><path d="M1100.5 485.2 L1103.7 476 L1109.2 472.4 L1116.5 473.3 L1122 476 L1125.6 481.1 L1131.1 477 L1138.4 472.4 L1143.9 466 L1149.4 460.5 L1155.8 452.3 L1159.4 447.7 L1167.6 444.5 L1173.1 446.4 L1178.6 447.3 L1179.1 453.2 L1177.7 462.3 L1175.9 471.5 L1174 478.8 L1170.4 485.2 L1173.1 490.7 L1174.5 496.2 L1172.2 500.7 L1168.6 505.3 L1165.8 508.9 L1160.3 507.1 L1154.9 508.9 L1149.4 508.5 L1143 508 L1137.5 509.9 L1132.9 514.4 L1130.2 519 L1126.5 524.5 L1122 529 L1118.3 530.9 L1118 533.1 L1118 578.1 L1101.6 585.9 L1082.6 610.9 L1075.7 620.4 L1060.1 627.3 L1046.3 638.6 L1034.2 646.4 L1020.4 659.3 L1014.3 670.6 L994.4 681.8 L984.1 693.9 L984.9 706 L979.1 709.8 L980.9 715 L972.2 721.9 L970.5 730.5 L960.1 735.7"/></g>
<g fill="none" stroke="#d0a9da" stroke-width="2" stroke-linejoin="round"><path d="M1546.4 0 L1535.2 10 L1537.7 22.5 L1532.7 37.5 L1532.7 58.8 L1542.7 61.3 L1550.2 88.8 L1572.7 85 L1575.2 97.5 L1595.2 103.8 L1602.7 122.6 L1596.5 137.6 L1607.7 138.8 L1622.7 130.1 L1636.5 113.8 L1642.7 96.3 L1660.3 82.5 L1675.3 90 L1682.8 83.8 L1692.8 86.3 L1696.5 102.6 L1709 105.1 L1705.3 121.3 L1715.3 123.8 L1725.3 120.1 L1740 121.3"/><path d="M1691.7 85.7 L1695.1 102.8 L1706.5 104 L1710 109.7 L1706.5 121.1 L1713.4 124.5 L1724.8 118.8 L1747.6 121.1 L1759.1 130.2 L1761.4 138.2 L1770.5 140.5 L1778.5 130.2 L1771.6 121.1 L1777.4 111.9 L1786.5 101.7 L1805.9 100.5"/><path d="M1570.2 162.6 L1580.2 152.6 L1590.2 147.6 L1596.5 137.6"/><path d="M1570.2 162.6 L1565.2 175.1 L1570.2 185.1 L1574 197.6 L1570.2 217.6 L1571.5 235.1 L1566.5 247.6 L1570.2 262.6 L1577.7 272.6 L1587.7 278.9 L1605.2 276.4 L1620.2 275.1 L1614 295.1 L1607.7 312.7 L1617.7 320.2 L1627.7 327.9"/><path d="M1178.8 445.6 L1197.5 440.6 L1217.5 443.1 L1220 458.1 L1235 453.1 L1247.5 445.6 L1265.1 444.3 L1271.3 435.6 L1278.8 441.8 L1282.6 453.1 L1290.1 445.6 L1296.3 451.8 L1292.6 460.6 L1307.6 464.3 L1322.6 473.1 L1317.6 483.1 L1318.8 498.1 L1326.3 508.1 L1330.1 525.6 L1336.3 528.1 L1331.3 543.1 L1332.6 558.1 L1337.6 569.4 L1346.3 581.9 L1342.6 593.1 L1345.1 605.6 L1338.8 618.1 L1335.1 633.2 L1327.6 645.7 L1322.6 655.9"/><path d="M1627.7 328 L1642.7 339.3 L1627.7 339.3 L1615.2 345.5 L1605.2 355.5 L1604 373 L1597.7 383 L1605.2 393 L1617.7 393 L1632.7 398 L1639 410.5 L1651.5 420.5 L1649 435.6 L1655.2 448.1 L1657.7 466.8 L1640.2 466.8 L1630.2 445.6 L1624 446.8 L1622.7 458.1 L1612.7 455.6 L1607.7 444.3 L1585.2 443.1 L1560.2 444.3 L1550.2 453.1 L1552.7 478.1 L1548.9 491.8 L1560.2 500.6 L1585.2 506.8 L1595.2 500.6 L1594 518.1 L1602.7 528.1 L1602.7 533.1 L1582.7 529.4 L1575.2 545.6 L1569 558.1 L1574 575.6 L1570.2 590.6 L1565.2 600.6 L1560.2 615.6 L1553.9 621.9 L1542.7 613.1 L1535.2 609.4 L1520.2 611.9 L1515.2 623.1 L1518.9 640.7 L1520.2 655.9"/><path d="M1437.6 655.9 L1450.1 643.2 L1462.7 625.6 L1463.9 605.6 L1470.2 593.1 L1491.4 592.6 L1491.4 603.1 L1500.2 611.9 L1510.2 620.6 L1515.2 623.1"/><path d="M1322.6 655.5 L1327.6 645.5 L1335.1 646.8 L1342.6 640.5 L1355.1 641.8 L1360.1 648 L1372.6 649.3 L1375.1 663 L1390.1 673 L1392.6 683 L1412.6 676.8 L1420.1 668 L1425.1 666.8 L1428.9 671.8 L1437.6 669.3 L1438.9 655.5 L1447.6 643 L1460.2 630.5 L1463.9 623"/><path d="M1515.2 623 L1520.2 648 L1525.2 670.5 L1532.7 680.5 L1541.4 688 L1538.9 705.5 L1542.7 719.3 L1533.9 725.6 L1535.2 740.6 L1532.7 758.1 L1520.2 773.1 L1505.2 785.6 L1492.7 798.1 L1482.7 809.3 L1495.2 815.6 L1505.2 823.1 L1510.2 811.8 L1515.2 823.1 L1521.4 830.6 L1518.9 836.9 L1530.2 835.6 L1542.7 843.1 L1560.2 851.9 L1580.2 846.9 L1595.2 846.9 L1610.2 851.9 L1622.7 865.6 L1620.2 885.6 L1627.7 888.1"/><path d="M1614 300 L1607.1 311.4 L1615.1 322.8 L1626.6 321.7 L1633.4 332 L1642.6 337.7 L1640.3 341.1 L1624.3 340 L1615.1 348 L1606 351.4"/><path d="M1606 392.5 L1615.1 391.4 L1623.1 396 L1631.1 396 L1636.8 407.4 L1642.6 415.4 L1650.6 418.8 L1651.7 427.9 L1647.1 437.1 L1654 446.2 L1655.1 457.6 L1658.5 467.9 L1640.3 466.8 L1635.7 459.9 L1628.8 447.4 L1623.1 447.4 L1624.3 457.6 L1615.1 457.6 L1608.3 450.8 L1606 443.9"/></g>
<g fill="none" stroke="#7a7a7a" stroke-width=".8"><path d="M1160 26.3 C1162.5 26.7 1167.9 27.6 1175 28.8 C1182.1 30.1 1194.2 31.9 1202.5 33.8 C1210.8 35.7 1217.1 37.7 1225 40 C1232.9 42.3 1241.2 44.6 1250 47.5 C1258.8 50.4 1270.1 54.8 1277.6 57.5 C1285.1 60.2 1289.7 61.1 1295.1 63.8 C1300.5 66.5 1303.8 70.9 1310.1 73.8 C1316.3 76.7 1327.2 78.8 1332.6 81.3 C1338.0 83.8 1340.9 87.5 1342.6 88.8"/><path d="M567.4 96.6 C566.8 98.3 563.8 103.5 563.6 106.9 C563.4 110.4 564.7 114.7 566.2 117.3 C567.7 119.9 572.2 118.6 572.6 122.5 C573.0 126.4 569.1 135.0 568.7 140.6 C568.3 146.2 570.2 150.5 570 156.1 C569.8 161.7 565.9 169.3 567.4 174.3 C568.9 179.3 575.0 182.0 579.1 185.9 C583.2 189.8 589.6 193.1 592 197.6 C594.4 202.1 595.0 208.3 593.3 213.1 C591.6 217.8 586.7 220.5 581.7 226.1 C576.8 231.7 566.6 243.4 563.6 246.8"/><path d="M602.4 217 C605.4 215.7 613.6 212.0 620.5 209.2 C627.4 206.4 638.2 200.4 643.8 200.2 C649.4 200.0 651.2 207.9 654.2 207.9 C657.2 207.9 660.0 203.0 662 200.2 C664.0 197.4 666.1 192.8 665.9 191.1 C665.7 189.4 661.6 190.0 660.7 189.8"/><path d="M1010.2 35 C1013.5 33.8 1022.7 30.8 1030.2 27.5 C1037.7 24.2 1048.5 18.3 1055.2 15 C1061.9 11.7 1061.9 8.1 1070.2 7.5 C1078.5 6.9 1095.3 9.2 1105.3 11.3 C1115.3 13.4 1121.2 17.5 1130.3 20 C1139.4 22.5 1155.0 25.2 1160 26.3"/><path d="M1085.6 836.5 C1087.0 835.4 1090.8 832.2 1094.2 829.6 C1097.7 827.0 1100.8 823.3 1106.3 821 C1111.8 818.7 1123.7 818.1 1127 815.8 C1130.3 813.5 1125.9 809.8 1126.2 807.2 C1126.5 804.6 1126.6 803.2 1128.7 800.3 C1130.8 797.4 1135.3 794.2 1139.1 789.9 C1142.8 785.6 1147.8 778.7 1151.2 774.4 C1154.7 770.1 1158.1 767.2 1159.8 764 C1161.5 760.8 1160.6 757.0 1161.5 755.4 C1162.4 753.8 1164.4 754.7 1165 754.6"/><path d="M1247.8 902.9 C1249.5 900.5 1254.4 892.4 1258.1 888.2 C1261.8 884.0 1266.8 881.0 1270.2 877.9 C1273.7 874.8 1276.8 872.0 1278.8 869.3 C1280.8 866.6 1281.7 862.8 1282.3 861.5"/></g>
<g fill="none" stroke="#f9cf9b" stroke-width="1.05" stroke-linejoin="round"><path d="M1323.8 0 C1323.6 1.7 1324.0 5.8 1322.6 10 C1321.1 14.2 1317.6 20.8 1315.1 25 C1312.6 29.2 1310.9 32.9 1307.6 35 C1304.3 37.1 1298.8 36.9 1295.1 37.5 C1291.3 38.1 1286.8 38.6 1285.1 38.8"/><path d="M1240 283.9 C1243.3 284.9 1253.4 289.3 1260.1 290.1 C1266.8 290.9 1273.0 289.1 1280.1 288.9 C1287.2 288.7 1298.6 287.9 1302.6 288.9 C1306.5 289.9 1301.3 293.2 1303.8 295.1 C1306.3 297.0 1313.6 297.5 1317.6 300.2 C1321.6 302.9 1323.0 310.1 1327.6 311.4 C1332.2 312.6 1340.1 306.9 1345.1 307.7 C1350.1 308.5 1353.8 314.7 1357.6 316.4 C1361.3 318.1 1363.0 318.1 1367.6 317.7 C1372.2 317.3 1379.3 315.1 1385.1 313.9 C1390.9 312.6 1398.4 311.9 1402.6 310.2 C1406.8 308.5 1408.8 304.9 1410.1 303.9"/><path d="M1690.3 86.3 C1688.6 89.4 1683.2 98.6 1680.3 105.1 C1677.4 111.6 1673.2 117.6 1672.8 125.1 C1672.4 132.6 1677.8 142.6 1677.8 150.1 C1677.8 157.6 1673.4 163.4 1672.8 170.1 C1672.2 176.8 1674.8 183.8 1674 190.1 C1673.2 196.3 1669.7 202.6 1667.8 207.6 C1665.9 212.6 1663.6 214.7 1662.8 220.1 C1662.0 225.5 1661.1 233.4 1662.8 240.1 C1664.5 246.8 1672.0 253.4 1672.8 260.1 C1673.6 266.8 1669.9 273.4 1667.8 280.1 C1665.7 286.8 1661.1 292.2 1660.3 300.2 C1659.5 308.2 1662.4 323.3 1662.8 327.9"/><path d="M1622.7 167.6 C1623.5 170.1 1624.8 177.2 1627.7 182.6 C1630.6 188.0 1636.0 195.1 1640.2 200.1 C1644.4 205.1 1648.9 209.0 1652.7 212.6 C1656.5 216.2 1661.1 219.9 1662.8 221.4"/><path d="M1620.2 275.1 C1622.7 273.4 1630.2 267.4 1635.2 265.1 C1640.2 262.8 1643.9 262.2 1650.2 261.4 C1656.5 260.6 1664.9 260.7 1672.8 260.1 C1680.7 259.5 1689.9 259.5 1697.8 257.6 C1705.7 255.7 1713.3 250.4 1720.3 248.9 C1727.3 247.4 1736.7 248.9 1740 248.9"/><path d="M1619.7 274.2 C1624.3 272.1 1638.3 264.1 1647.1 261.6 C1655.9 259.1 1663.9 259.7 1672.3 259.3 C1680.7 258.9 1689.4 261.0 1697.4 259.3 C1705.4 257.6 1714.1 250.7 1720.2 249 C1726.3 247.3 1729.0 249.2 1733.9 249 C1738.9 248.8 1743.8 249.2 1749.9 247.9 C1756.0 246.6 1763.3 243.1 1770.5 241 C1777.7 238.9 1787.4 235.7 1793.3 235.3 C1799.2 234.9 1803.8 238.1 1805.9 238.7"/><path d="M1552.7 0 C1552.7 1.7 1552.1 6.2 1552.7 10 C1553.3 13.8 1555.8 20.4 1556.4 22.5"/><path d="M1212.5 361.8 C1213.8 362.6 1216.2 365.4 1220 366.8 C1223.8 368.2 1230.0 368.2 1235 370.5 C1240.0 372.8 1245.4 377.8 1250 380.5 C1254.6 383.2 1258.8 383.5 1262.6 386.8 C1266.4 390.1 1269.1 395.7 1272.6 400.5 C1276.1 405.3 1281.9 413.0 1283.8 415.5"/><path d="M1330.1 435.6 C1332.6 433.9 1340.5 428.9 1345.1 425.5 C1349.7 422.1 1353.4 418.8 1357.6 415.5 C1361.8 412.2 1365.9 408.8 1370.1 405.5 C1374.3 402.2 1378.8 400.5 1382.6 395.5 C1386.3 390.5 1388.8 379.7 1392.6 375.5 C1396.3 371.3 1402.2 374.2 1405.1 370.5 C1408.0 366.8 1409.7 360.1 1410.1 353 C1410.5 345.9 1408.0 332.2 1407.6 328"/><path d="M1180 450.6 C1181.2 453.5 1183.8 463.1 1187.5 468.1 C1191.2 473.1 1198.3 477.7 1202.5 480.6 C1206.7 483.5 1209.6 486.9 1212.5 485.6 C1215.4 484.4 1214.6 475.8 1220 473.1 C1225.4 470.4 1236.7 470.8 1245 469.3 C1253.3 467.8 1262.6 466.2 1270.1 464.3 C1277.6 462.4 1285.7 460.2 1290.1 458.1 C1294.5 456.0 1295.3 452.9 1296.3 451.8"/><path d="M1270.1 464.3 C1270.1 467.0 1268.4 474.6 1270.1 480.6 C1271.8 486.7 1275.9 495.6 1280.1 500.6 C1284.3 505.6 1292.8 506.9 1295.1 510.6 C1297.4 514.4 1292.1 518.5 1293.8 523.1 C1295.5 527.7 1300.7 533.1 1305.1 538.1 C1309.5 543.1 1316.3 548.1 1320.1 553.1 C1323.8 558.1 1325.5 562.7 1327.6 568.1 C1329.7 573.5 1332.6 580.2 1332.6 585.6 C1332.6 591.0 1329.7 596.9 1327.6 600.6 C1325.5 604.4 1320.9 603.5 1320.1 608.1 C1319.3 612.7 1321.8 622.8 1322.6 628.2 C1323.4 633.6 1325.5 636.1 1325.1 640.7 C1324.7 645.3 1320.9 653.4 1320.1 655.9"/><path d="M1665.3 328 C1666.1 331.3 1667.8 339.7 1670.3 348 C1672.8 356.3 1677.4 368.8 1680.3 378 C1683.2 387.2 1685.9 395.5 1687.8 403 C1689.7 410.5 1692.3 416.7 1691.5 423 C1690.7 429.3 1687.2 434.8 1682.8 440.6 C1678.4 446.5 1669.9 451.9 1665.3 458.1 C1660.7 464.4 1658.1 471.0 1655.2 478.1 C1652.3 485.2 1647.9 492.7 1647.7 500.6 C1647.5 508.5 1653.4 517.3 1654 525.6 C1654.6 533.9 1650.9 542.7 1651.5 550.6 C1652.1 558.5 1655.8 566.4 1657.7 573.1 C1659.6 579.8 1662.8 583.5 1662.8 590.6 C1662.8 597.7 1657.3 608.5 1657.7 615.6 C1658.1 622.7 1662.4 629.0 1665.3 633.2 C1668.2 637.4 1673.6 639.5 1675.3 640.7"/><path d="M1675.3 640.7 C1679.0 640.3 1689.9 640.3 1697.8 638.2 C1705.7 636.1 1715.8 631.1 1722.8 628.2 C1729.8 625.3 1737.1 621.9 1740 620.6"/><path d="M1442.6 588.1 C1443.4 590.6 1447.6 598.1 1447.6 603.1 C1447.6 608.1 1444.3 612.2 1442.6 618.1 C1440.9 624.0 1439.7 632.8 1437.6 638.2 C1435.5 643.6 1432.6 647.8 1430.1 650.7 C1427.6 653.7 1423.8 655.0 1422.6 655.9"/><path d="M1363.9 615.6 C1366.2 614.8 1373.4 612.3 1377.6 610.6 C1381.8 608.9 1387.0 606.4 1388.9 605.6"/><path d="M1532.7 610.6 C1533.1 613.5 1533.1 622.4 1535.2 628.2 C1537.3 634.1 1542.7 641.1 1545.2 645.7 C1547.7 650.3 1549.4 654.2 1550.2 655.9"/><path d="M1322.6 623 C1322.8 625.5 1324.6 631.3 1323.8 638 C1323.0 644.7 1316.3 657.2 1317.6 663 C1318.8 668.8 1329.8 667.2 1331.3 673 C1332.8 678.8 1327.3 690.3 1326.3 698 C1325.3 705.7 1323.6 712.6 1325.1 719.3 C1326.6 726.0 1334.9 732.0 1335.1 738.1 C1335.3 744.2 1327.5 750.2 1326.3 755.6 C1325.0 761.0 1326.1 766.2 1327.6 770.6 C1329.1 775.0 1332.6 779.5 1335.1 781.8 C1337.6 784.1 1341.3 783.9 1342.6 784.3"/><path d="M1357.6 719.3 C1359.7 720.3 1366.3 721.2 1370.1 725.6 C1373.8 730.0 1377.2 743.7 1380.1 745.6 C1383.0 747.5 1386.3 738.3 1387.6 736.8"/><path d="M1391.4 740.6 C1391.6 743.1 1389.1 751.0 1392.6 755.6 C1396.1 760.2 1408.6 763.5 1412.6 768.1 C1416.6 772.7 1414.3 778.1 1416.4 783.1 C1418.5 788.1 1422.0 793.3 1425.1 798.1 C1428.2 802.9 1433.4 809.5 1435.1 811.8"/><path d="M1451.4 773.1 C1453.3 771.0 1459.2 763.3 1462.7 760.6 C1466.2 757.9 1469.0 757.2 1472.7 756.8 C1476.5 756.4 1480.6 757.0 1485.2 758.1 C1489.8 759.2 1496.2 758.9 1500.2 763.1 C1504.2 767.3 1507.5 779.8 1508.9 783.1"/><path d="M1438.9 725.6 C1440.8 724.1 1444.9 719.3 1450.1 716.8 C1455.3 714.3 1464.8 713.6 1470.2 710.5 C1475.6 707.4 1479.4 700.5 1482.7 698 C1486.0 695.5 1489.0 698.0 1490.2 695.5 C1491.5 693.0 1488.5 686.8 1490.2 683 C1491.9 679.2 1496.9 675.5 1500.2 673 C1503.5 670.5 1506.5 668.8 1510.2 668 C1514.0 667.2 1520.6 668.0 1522.7 668"/><path d="M1530.2 679.3 C1532.7 678.7 1539.8 676.8 1545.2 675.5 C1550.6 674.2 1556.0 672.2 1562.7 671.8 C1569.4 671.4 1577.7 671.5 1585.2 673 C1592.7 674.5 1601.0 680.1 1607.7 680.5 C1614.4 680.9 1619.8 678.0 1625.2 675.5 C1630.6 673.0 1633.9 668.8 1640.2 665.5 C1646.5 662.2 1657.4 658.4 1662.8 655.5 C1668.2 652.6 1669.0 650.1 1672.8 648 C1676.5 645.9 1679.0 645.5 1685.3 643 C1691.5 640.5 1703.2 636.3 1710.3 633 C1717.4 629.7 1724.9 624.7 1727.8 623"/><path d="M1532.7 623 C1534.0 625.9 1536.5 634.7 1540.2 640.5 C1544.0 646.3 1551.5 652.8 1555.2 658 C1559.0 663.2 1561.9 667.6 1562.7 671.8 C1563.5 676.0 1559.4 678.6 1560.2 683 C1561.0 687.4 1566.2 693.0 1567.7 698 C1569.2 703.0 1570.2 707.6 1569 713 C1567.8 718.4 1563.3 724.8 1560.2 730.6 C1557.1 736.5 1554.4 742.7 1550.2 748.1 C1546.0 753.5 1539.8 757.3 1535.2 763.1 C1530.6 768.9 1525.6 777.7 1522.7 783.1 C1519.8 788.5 1520.6 792.3 1517.7 795.6 C1514.8 798.9 1508.3 799.8 1505.2 803.1 C1502.1 806.4 1501.4 811.6 1498.9 815.6 C1496.4 819.6 1491.7 825.0 1490.2 826.9"/><path d="M1517.7 795.6 C1520.6 796.0 1528.5 799.4 1535.2 798.1 C1541.9 796.9 1551.5 788.9 1557.7 788.1 C1564.0 787.3 1567.3 791.4 1572.7 793.1 C1578.1 794.8 1584.0 796.2 1590.2 798.1 C1596.5 800.0 1601.9 804.1 1610.2 804.3 C1618.5 804.5 1631.4 799.5 1640.2 799.3 C1649.0 799.1 1656.1 802.3 1662.8 803.1 C1669.5 803.9 1674.5 804.9 1680.3 804.3 C1686.1 803.7 1692.8 802.0 1697.8 799.3 C1702.8 796.6 1707.8 793.3 1710.3 788.1 C1712.8 782.9 1707.8 771.7 1712.8 768.1 C1717.8 764.5 1735.5 767.0 1740 766.8"/><path d="M1660.3 623 C1662.0 625.1 1669.9 629.2 1670.3 635.5 C1670.7 641.8 1662.8 651.8 1662.8 660.5 C1662.8 669.2 1667.4 680.1 1670.3 688 C1673.2 695.9 1676.5 700.5 1680.3 708 C1684.0 715.5 1689.5 725.6 1692.8 733.1 C1696.1 740.6 1697.0 747.5 1700.3 753.1 C1703.6 758.7 1710.7 764.5 1712.8 766.8"/><path d="M1680.3 804.3 C1679.0 807.0 1672.8 814.5 1672.8 820.6 C1672.8 826.7 1678.2 833.5 1680.3 840.6 C1682.4 847.7 1684.7 855.2 1685.3 863.1 C1685.9 871.0 1684.2 881.6 1684 888.1 C1683.8 894.6 1684.0 900.0 1684 902.4"/><path d="M1752.2 600 C1753.7 598.7 1759.1 596.7 1761.4 592.4 C1763.7 588.1 1764.0 580.3 1765.9 574.2 C1767.8 568.1 1770.1 560.9 1772.8 555.9 C1775.5 550.9 1779.2 547.4 1781.9 544.5 C1784.6 541.6 1784.8 540.0 1788.8 538.7 C1792.8 537.4 1803.1 536.9 1805.9 536.5"/><path d="M1663.5 600 C1663.1 601.9 1662.5 608.6 1661.2 611.5 C1659.9 614.4 1655.0 614.1 1655.4 617.2 C1655.8 620.3 1660.8 626.2 1663.5 629.9 C1666.2 633.5 1670.2 637.6 1671.5 639.1"/><path d="M1606 680.5 C1611.0 678.4 1627.9 671.8 1635.9 667.8 C1644.0 663.8 1648.9 658.6 1654.3 656.3 C1659.7 654.0 1665.8 654.4 1668.1 654"/><path d="M1684.2 644.8 C1687.3 643.6 1695.7 641.1 1702.6 637.9 C1709.5 634.6 1719.0 628.8 1725.5 625.3 C1732.0 621.8 1737.4 620.3 1741.6 617.2 C1745.8 614.1 1749.1 609.8 1750.8 606.9 C1752.5 604.0 1751.8 601.1 1752 600"/><path d="M1662.3 660.9 C1663.3 664.2 1666.0 673.8 1668.1 680.5 C1670.2 687.2 1672.1 695.0 1675 701.1 C1677.9 707.2 1683.0 712.2 1685.3 717.2 C1687.6 722.2 1686.3 726.0 1688.8 731 C1691.3 736.0 1697.4 741.5 1700.3 747.1 C1703.2 752.7 1704.1 761.0 1706 764.4 C1707.9 767.8 1710.8 767.2 1711.7 767.8"/><path d="M1711.7 767.8 C1717.1 767.9 1732.4 768.6 1743.9 768.5 C1755.4 768.4 1770.4 768.7 1780.7 767.4 C1791.0 766.1 1801.8 762.0 1806 760.9"/><path d="M1711.7 767.8 C1711.7 770.1 1712.8 777.8 1711.7 781.6 C1710.6 785.4 1708.0 787.7 1704.9 790.8 C1701.9 793.9 1697.6 797.7 1693.4 800 C1689.2 802.3 1686.5 804.0 1679.6 804.6 C1672.7 805.2 1657.8 804.2 1652 803.4 C1646.2 802.5 1650.5 799.8 1645.1 799.5 C1639.7 799.2 1626.3 800.9 1619.8 801.8 C1613.3 802.6 1608.3 804.1 1606 804.6"/><path d="M1679.6 804.6 C1678.4 806.9 1673.1 813.0 1672.7 818.4 C1672.3 823.8 1675.2 829.9 1677.3 836.8 C1679.4 843.7 1684.1 849.0 1685.3 859.8 C1686.5 870.6 1684.4 894.8 1684.2 901.8"/><path d="M430.2 21.5 C427.4 22.1 417.9 22.8 413.4 25.4 C408.9 28.0 405.6 33.3 403 37 C400.4 40.7 399.9 45.4 397.8 47.4 C395.7 49.4 391.4 48.5 390.1 48.7"/><path d="M436.7 95.3 C435.0 98.1 429.3 107.6 426.3 112.1 C423.3 116.6 419.9 120.8 418.6 122.5"/><path d="M572.6 94 C570.7 94.4 563.8 94.4 561 96.6 C558.2 98.8 558.4 103.0 555.8 106.9 C553.2 110.8 546.5 114.7 545.4 119.9 C544.3 125.1 548.2 133.2 549.3 138 C550.4 142.8 550.4 146.0 551.9 148.4 C553.4 150.8 557.3 151.7 558.4 152.3"/><path d="M568.7 151 C570.0 148.4 572.6 139.7 576.5 135.4 C580.4 131.1 586.8 128.3 592 125.1 C597.2 121.9 603.3 119.0 607.6 116 C611.9 113.0 616.0 109.7 617.9 106.9 C619.8 104.1 617.0 100.5 619.2 99.2 C621.4 97.9 628.5 100.7 630.9 99.2 C633.3 97.7 629.2 93.1 633.5 90.1 C637.8 87.1 650.3 82.7 656.8 81 C663.3 79.3 668.0 79.3 672.3 79.7 C676.6 80.1 680.1 85.1 682.7 83.6 C685.3 82.1 686.8 78.0 687.9 70.7 C689.0 63.4 689.6 48.2 689.2 39.6 C688.8 31.0 687.2 24.1 685.3 18.9 C683.3 13.7 679.0 11.6 677.5 8.5 C676.0 5.4 676.4 1.7 676.2 0.3"/><path d="M682.7 83.6 C684.9 88.3 691.7 103.9 695.6 112.1 C699.5 120.3 703.4 126.8 706 132.8 C708.6 138.9 710.6 143.7 711.2 148.4 C711.9 153.2 710.1 159.2 709.9 161.3"/><path d="M628.3 252 C627.0 254.6 623.1 263.4 620.5 267.5 C617.9 271.6 614.1 275.1 612.8 276.6"/><path d="M831.4 0 C831.2 1.2 831.8 5.6 830.1 7.5 C828.4 9.4 823.1 8.0 821.4 11.3 C819.7 14.6 820.3 24.8 820.1 27.5"/><path d="M1027.7 30 C1029.4 31.2 1033.5 35.4 1037.7 37.5 C1041.9 39.6 1049.8 40.0 1052.7 42.5 C1055.6 45.0 1051.5 48.8 1055.2 52.5 C1059.0 56.2 1070.6 60.0 1075.2 65 C1079.8 70.0 1081.1 76.7 1082.8 82.5 C1084.5 88.3 1085.7 95.5 1085.3 100.1 C1084.9 104.7 1079.3 107.2 1080.3 110.1 C1081.3 113.0 1089.2 110.1 1091.5 117.6 C1093.8 125.1 1093.8 147.8 1094 155.1 C1094.2 162.4 1093.0 160.3 1092.8 161.3"/><path d="M1052.7 42.5 C1056.9 42.1 1069.8 41.2 1077.7 40 C1085.6 38.8 1094.0 39.2 1100.3 35 C1106.6 30.8 1112.8 18.3 1115.3 15"/><path d="M1017.7 191.3 C1021.9 190.3 1035.6 187.8 1042.7 185.1 C1049.8 182.4 1056.9 178.4 1060.2 175.1 C1063.5 171.8 1062.3 166.8 1062.7 165.1"/><path d="M1093.2 685.6 C1093.5 686.2 1096.3 687.4 1094.9 689.1 C1093.5 690.8 1088.0 693.7 1084.6 696 C1081.1 698.3 1076.8 700.4 1074.2 702.9 C1071.6 705.4 1067.6 707.8 1069 710.7 C1070.4 713.6 1079.5 716.9 1082.8 720.2 C1086.1 723.5 1085.7 728.2 1088.9 730.5 C1092.1 732.8 1097.7 733.4 1101.9 734 C1106.1 734.6 1109.7 734.6 1114 734 C1118.3 733.4 1124.3 732.8 1127.8 730.5 C1131.2 728.2 1132.8 723.8 1134.7 720.2 C1136.6 716.6 1138.3 710.8 1139 708.9"/><path d="M1069 710.7 C1067.0 711.4 1059.8 713.4 1056.9 715 C1054.0 716.6 1053.7 717.6 1051.7 720.2 C1049.7 722.8 1046.0 727.0 1044.8 730.5 C1043.6 734.0 1044.4 737.4 1044.8 740.9 C1045.2 744.4 1047.1 747.5 1047.4 751.3 C1047.7 755.0 1046.9 760.4 1046.5 763.4 C1046.1 766.4 1045.1 768.4 1044.8 769.4"/><path d="M1088.9 730.5 C1087.6 732.0 1083.0 736.0 1081.1 739.2 C1079.2 742.4 1078.8 745.6 1077.7 749.6 C1076.6 753.6 1075.1 759.7 1074.2 763.4 C1073.3 767.1 1073.4 769.7 1072.5 772 C1071.6 774.3 1069.6 776.3 1069 777.2"/><path d="M1127.8 730.5 C1126.9 731.7 1123.2 734.3 1122.6 737.5 C1122.0 740.7 1124.9 745.9 1124.3 749.6 C1123.7 753.3 1120.5 756.7 1119.1 759.9 C1117.7 763.1 1117.4 766.0 1115.7 768.6 C1114.0 771.2 1111.1 772.6 1108.8 775.5 C1106.5 778.4 1103.9 782.4 1101.9 785.9 C1099.9 789.4 1098.4 792.5 1096.7 796.2 C1095.0 799.9 1093.0 804.3 1091.5 808.3 C1090.0 812.3 1088.9 816.6 1088 820.4 C1087.1 824.1 1086.6 829.1 1086.3 830.8"/><path d="M980.9 766 C981.5 767.0 982.0 770.4 984.3 772 C986.6 773.6 991.5 774.4 994.7 775.5 C997.9 776.6 1000.4 777.6 1003.3 778.9 C1006.2 780.2 1008.5 783.3 1012 783.3 C1015.5 783.3 1020.6 780.8 1024.1 778.9 C1027.5 777.0 1031.3 773.1 1032.7 772"/><path d="M1164.1 807.2 C1164.8 808.4 1167.1 811.0 1168.4 814.1 C1169.7 817.2 1170.8 822.7 1171.9 826.1 C1173.1 829.5 1175.6 832.2 1175.3 834.8 C1175.0 837.4 1171.5 838.8 1170.1 841.7 C1168.7 844.6 1167.5 849.4 1166.7 852 C1165.9 854.6 1166.2 854.9 1165 857.2 C1163.8 859.5 1161.0 863.5 1159.8 865.8 C1158.6 868.1 1157.8 869.3 1158.1 871 C1158.4 872.7 1160.9 875.3 1161.5 876.2"/><path d="M1101.1 859.8 C1102.8 860.2 1107.2 861.5 1111.5 862.4 C1115.8 863.3 1123.3 865.3 1127 865 C1130.7 864.7 1130.7 861.6 1133.9 860.6 C1137.1 859.6 1142.0 859.5 1146 858.9 C1150.0 858.3 1154.9 857.5 1158.1 857.2 C1161.3 856.9 1163.8 857.2 1165 857.2"/><path d="M1168.4 853.7 C1170.1 854.9 1176.5 858.0 1178.8 860.6 C1181.1 863.2 1180.2 866.4 1182.2 869.3 C1184.2 872.2 1188.2 875.9 1190.8 877.9 C1193.4 879.9 1194.8 880.9 1197.7 881.3 C1200.6 881.7 1204.9 879.6 1208.1 880.5 C1211.3 881.4 1213.8 884.6 1216.7 886.5 C1219.6 888.4 1223.6 889.7 1225.3 891.7 C1227.0 893.7 1227.2 896.7 1227.1 898.6 C1227.0 900.5 1224.9 902.2 1224.5 902.9"/><path d="M1272.7 483 C1273.6 485.3 1274.4 492.5 1277.9 496.8 C1281.4 501.1 1290.3 504.3 1293.5 508.9 C1296.7 513.5 1294.5 519.3 1296.9 524.5 C1299.3 529.7 1306.2 537.4 1308 540"/><path d="M1068.8 706.9 C1070.8 705.6 1076.6 702.1 1080.9 699.1 C1085.2 696.1 1092.6 691.0 1094.7 688.7 C1096.8 686.4 1094.0 685.8 1093.8 685.2"/><path d="M1144 412.6 C1145.6 413.8 1149.6 417.9 1153.5 419.6 C1157.4 421.3 1162.4 421.9 1167.3 423 C1172.2 424.1 1177.6 425.6 1182.8 426.5 C1188.0 427.4 1194.7 427.6 1198.4 428.2 C1202.2 428.8 1204.2 429.6 1205.3 429.9"/></g>
<g fill="none" stroke="#e8b77c" stroke-width="1.4" stroke-linejoin="round"><path d="M1245 902.4 C1247.5 899.2 1255.5 888.4 1260.1 883.1 C1264.7 877.8 1268.8 874.4 1272.6 870.6 C1276.3 866.9 1279.3 865.2 1282.6 860.6 C1285.9 856.0 1289.7 848.5 1292.6 843.1 C1295.5 837.7 1296.3 833.1 1300.1 828.1 C1303.8 823.1 1310.1 818.1 1315.1 813.1 C1320.1 808.1 1325.5 802.9 1330.1 798.1 C1334.7 793.3 1337.6 788.9 1342.6 784.3 C1347.6 779.7 1354.7 775.4 1360.1 770.6 C1365.5 765.8 1370.5 761.0 1375.1 755.6 C1379.7 750.2 1383.4 744.4 1387.6 738.1 C1391.8 731.8 1395.3 725.1 1400.1 718 C1404.9 710.9 1413.7 699.2 1416.4 695.5"/></g>
<g fill="none" stroke="#f4a88f" stroke-width="1.15" stroke-linejoin="round"><path d="M1160 23.8 C1162.5 23.6 1169.6 22.7 1175 22.5 C1180.4 22.3 1186.7 21.2 1192.5 22.5 C1198.3 23.8 1203.8 27.1 1210 30 C1216.2 32.9 1223.3 37.3 1230 40 C1236.7 42.7 1243.7 46.1 1250 46.3 C1256.3 46.5 1261.8 42.5 1267.6 41.3 C1273.4 40.0 1280.5 37.3 1285.1 38.8 C1289.7 40.2 1293.4 46.2 1295.1 50 C1296.8 53.8 1292.6 57.5 1295.1 61.3 C1297.6 65.0 1303.8 69.0 1310.1 72.5 C1316.3 76.0 1325.9 79.4 1332.6 82.5 C1339.3 85.6 1345.9 89.0 1350.1 91.3 C1354.3 93.6 1356.3 95.5 1357.6 96.3"/><path d="M1368.9 0 C1369.3 2.5 1372.2 8.8 1371.4 15 C1370.6 21.2 1364.5 30.4 1363.9 37.5 C1363.3 44.6 1366.8 51.2 1367.6 57.5 C1368.4 63.8 1369.7 69.6 1368.9 75 C1368.1 80.4 1364.5 86.5 1362.6 90 C1360.7 93.5 1358.4 95.2 1357.6 96.3"/><path d="M1357.6 96.3 C1355.5 97.8 1347.4 101.5 1345.1 105.1 C1342.8 108.6 1345.9 113.4 1343.8 117.6 C1341.7 121.8 1334.0 126.3 1332.6 130.1 C1331.1 133.8 1337.6 135.9 1335.1 140.1 C1332.6 144.3 1321.6 150.1 1317.6 155.1 C1313.6 160.1 1312.5 164.5 1311.3 170.1 C1310.0 175.7 1313.6 184.9 1310.1 188.8 C1306.6 192.8 1294.9 192.3 1290.1 193.8 C1285.3 195.3 1283.6 194.1 1281.3 197.6 C1279.0 201.1 1278.6 209.3 1276.3 215.1 C1274.0 220.9 1270.7 228.0 1267.6 232.6 C1264.5 237.2 1260.8 238.0 1257.5 242.6 C1254.2 247.2 1250.4 254.7 1247.5 260.1 C1244.6 265.5 1241.2 270.9 1240 275.1 C1238.8 279.3 1242.1 282.2 1240 285.1 C1237.9 288.0 1230.4 288.8 1227.5 292.6 C1224.6 296.4 1225.4 303.5 1222.5 307.7 C1219.6 311.9 1212.1 316.0 1210 317.7"/><path d="M1358.8 105.1 C1359.4 107.2 1359.9 113.4 1362.6 117.6 C1365.3 121.8 1371.8 125.5 1375.1 130.1 C1378.4 134.7 1380.7 139.3 1382.6 145.1 C1384.5 150.9 1386.2 159.3 1386.4 165.1 C1386.6 170.9 1383.3 174.7 1383.9 180.1 C1384.5 185.5 1387.8 192.6 1390.1 197.6 C1392.4 202.6 1396.3 204.7 1397.6 210.1 C1398.8 215.5 1396.3 224.7 1397.6 230.1 C1398.8 235.5 1402.4 238.8 1405.1 242.6 C1407.8 246.3 1412.2 247.2 1413.9 252.6 C1415.6 258.0 1414.9 268.4 1415.1 275.1 C1415.3 281.8 1415.9 287.6 1415.1 292.6 C1414.3 297.6 1411.3 299.3 1410.1 305.2 C1408.8 311.1 1408.0 324.1 1407.6 327.9"/><path d="M1160 257.6 C1162.5 258.9 1170.0 261.4 1175 265.1 C1180.0 268.9 1185.8 275.1 1190 280.1 C1194.2 285.1 1196.7 288.8 1200 295.1 C1203.3 301.4 1208.3 313.9 1210 317.7"/><path d="M1577.7 327.9 C1578.1 325.8 1577.3 319.8 1580.2 315.2 C1583.1 310.6 1590.2 304.8 1595.2 300.2 C1600.2 295.6 1606.0 291.8 1610.2 287.6 C1614.4 283.4 1618.5 277.2 1620.2 275.1"/><path d="M1212.5 328 C1212.5 332.6 1214.0 348.8 1212.5 355.5 C1211.0 362.2 1206.7 364.7 1203.8 368 C1200.9 371.3 1196.0 372.2 1195 375.5 C1194.0 378.8 1195.8 384.7 1197.5 388 C1199.2 391.3 1203.5 388.8 1205 395.5 C1206.5 402.2 1206.1 422.7 1206.3 428.1"/><path d="M1171.3 443.1 C1173.6 442.3 1179.4 439.8 1185 438.1 C1190.6 436.4 1198.8 433.9 1205 433.1 C1211.2 432.3 1216.2 432.3 1222.5 433.1 C1228.8 433.9 1236.2 438.5 1242.5 438.1 C1248.8 437.7 1255.5 432.7 1260.1 430.6 C1264.7 428.5 1266.1 428.0 1270.1 425.5 C1274.0 423.0 1278.8 416.5 1283.8 415.5 C1288.8 414.5 1294.9 417.8 1300.1 419.3 C1305.3 420.8 1311.3 421.6 1315.1 424.3 C1318.8 427.0 1320.1 431.6 1322.6 435.6 C1325.1 439.6 1327.6 443.5 1330.1 448.1 C1332.6 452.7 1333.8 460.4 1337.6 463.1 C1341.3 465.8 1347.6 462.6 1352.6 464.3 C1357.6 466.0 1363.0 469.6 1367.6 473.1 C1372.2 476.7 1377.0 480.6 1380.1 485.6 C1383.2 490.6 1383.9 497.3 1386.4 503.1 C1388.9 508.9 1392.8 516.4 1395.1 520.6 C1397.4 524.8 1396.8 525.2 1400.1 528.1 C1403.4 531.0 1411.3 534.4 1415.1 538.1 C1418.8 541.9 1419.3 546.4 1422.6 550.6 C1425.9 554.8 1432.2 559.4 1435.1 563.1 C1438.0 566.9 1438.0 571.0 1440.1 573.1 C1442.2 575.2 1446.3 575.2 1447.6 575.6"/><path d="M1407.6 328 C1408.8 330.5 1413.4 336.8 1415.1 343 C1416.8 349.2 1417.6 359.7 1417.6 365.5 C1417.6 371.3 1414.7 373.4 1415.1 378 C1415.5 382.6 1417.6 389.7 1420.1 393 C1422.6 396.3 1427.6 396.3 1430.1 398 C1432.6 399.7 1431.8 402.2 1435.1 403 C1438.4 403.8 1445.1 402.2 1450.1 403 C1455.1 403.8 1461.0 406.9 1465.2 408 C1469.4 409.1 1472.7 411.4 1475.2 409.3 C1477.7 407.2 1476.9 399.1 1480.2 395.5 C1483.5 391.9 1490.6 390.5 1495.2 388 C1499.8 385.5 1504.0 380.9 1507.7 380.5 C1511.5 380.1 1513.5 385.5 1517.7 385.5 C1521.9 385.5 1528.5 382.2 1532.7 380.5 C1536.9 378.8 1540.0 378.8 1542.7 375.5 C1545.4 372.2 1546.8 365.1 1548.9 360.5 C1551.0 355.9 1551.7 351.3 1555.2 348 C1558.8 344.7 1566.5 342.6 1570.2 340.5 C1574.0 338.4 1576.5 337.6 1577.7 335.5 C1579.0 333.4 1577.7 329.2 1577.7 328"/><path d="M1475.2 409.3 C1474.0 410.8 1469.6 413.6 1467.7 418 C1465.8 422.4 1464.1 429.3 1463.9 435.6 C1463.7 441.9 1467.2 448.9 1466.4 455.6 C1465.6 462.3 1461.2 471.0 1458.9 475.6 C1456.6 480.2 1453.4 479.8 1452.6 483.1 C1451.8 486.4 1452.0 492.3 1453.9 495.6 C1455.8 498.9 1462.9 499.4 1463.9 503.1 C1465.0 506.9 1460.2 513.1 1460.2 518.1 C1460.2 523.1 1462.9 528.5 1463.9 533.1 C1464.9 537.7 1467.5 541.4 1466.4 545.6 C1465.4 549.8 1459.7 553.9 1457.6 558.1 C1455.5 562.3 1455.6 567.7 1453.9 570.6 C1452.2 573.5 1448.6 574.8 1447.6 575.6"/><path d="M1447.6 575.6 C1449.7 577.3 1456.4 582.7 1460.2 585.6 C1464.0 588.5 1468.5 591.9 1470.2 593.1"/><path d="M1447.6 575.6 C1451.8 576.0 1466.4 579.4 1472.7 578.1 C1479.0 576.9 1481.0 568.1 1485.2 568.1 C1489.4 568.1 1492.7 575.2 1497.7 578.1 C1502.7 581.0 1509.8 583.7 1515.2 585.6 C1520.6 587.5 1526.5 586.5 1530.2 589.4 C1534.0 592.3 1536.9 599.8 1537.7 603.1 C1538.5 606.4 1535.6 608.4 1535.2 609.4"/><path d="M1500.2 578.1 C1500.4 581.4 1501.4 592.5 1501.4 598.1 C1501.4 603.7 1502.9 606.9 1500.2 611.9 C1497.5 616.9 1489.8 623.0 1485.2 628.2 C1480.6 633.4 1476.9 638.6 1472.7 643.2 C1468.5 647.8 1462.3 653.8 1460.2 655.9"/><path d="M1447.6 588.1 C1443.4 588.3 1430.1 589.0 1422.6 589.4 C1415.1 589.8 1408.0 588.3 1402.6 590.6 C1397.2 592.9 1391.8 598.5 1390.1 603.1 C1388.4 607.7 1390.9 613.1 1392.6 618.1 C1394.3 623.1 1396.8 629.0 1400.1 633.2 C1403.4 637.4 1409.3 639.4 1412.6 643.2 C1415.9 647.0 1418.8 653.8 1420.1 655.9"/><path d="M1160 806.8 C1161.2 805.8 1163.3 804.5 1167.5 800.6 C1171.7 796.7 1179.2 788.1 1185 783.1 C1190.8 778.1 1195.8 774.2 1202.5 770.6 C1209.2 767.0 1218.8 764.5 1225 761.8 C1231.2 759.1 1233.3 757.0 1240 754.3 C1246.7 751.6 1256.8 747.9 1265.1 745.6 C1273.4 743.3 1283.8 744.4 1290.1 740.6 C1296.3 736.9 1298.8 727.9 1302.6 723.1 C1306.3 718.3 1308.8 712.2 1312.6 711.8 C1316.3 711.4 1320.1 719.2 1325.1 720.5 C1330.1 721.8 1337.2 719.5 1342.6 719.3 C1348.0 719.1 1353.8 720.8 1357.6 719.3 C1361.3 717.8 1360.5 712.8 1365.1 710.5 C1369.7 708.2 1379.3 708.4 1385.1 705.5 C1390.9 702.6 1395.5 697.8 1400.1 693 C1404.7 688.2 1406.8 680.1 1412.6 676.8 C1418.4 673.5 1428.8 675.3 1435.1 673 C1441.3 670.7 1443.8 668.0 1450.1 663 C1456.4 658.0 1467.3 648.8 1472.7 643 C1478.1 637.2 1480.2 631.3 1482.7 628 C1485.2 624.7 1486.9 623.8 1487.7 623"/><path d="M1396.4 623 C1397.0 624.7 1397.4 630.1 1400.1 633 C1402.8 635.9 1409.5 636.8 1412.6 640.5 C1415.7 644.2 1418.9 650.9 1418.9 655.5 C1418.9 660.1 1413.6 664.5 1412.6 668 C1411.5 671.5 1412.0 672.2 1412.6 676.8 C1413.2 681.4 1413.9 691.1 1416.4 695.5 C1418.9 699.9 1424.3 700.1 1427.6 703 C1430.9 705.9 1434.5 708.8 1436.4 713 C1438.3 717.2 1437.9 723.1 1438.9 728.1 C1439.9 733.1 1440.7 738.1 1442.6 743.1 C1444.5 748.1 1448.6 753.1 1450.1 758.1 C1451.6 763.1 1452.2 768.1 1451.4 773.1 C1450.6 778.1 1446.6 783.1 1445.1 788.1 C1443.6 793.1 1444.3 799.2 1442.6 803.1 C1440.9 807.0 1433.8 809.9 1435.1 811.8 C1436.3 813.7 1444.7 813.2 1450.1 814.3 C1455.5 815.3 1463.1 816.6 1467.7 818.1 C1472.3 819.6 1474.0 821.6 1477.7 823.1 C1481.5 824.6 1487.5 824.4 1490.2 826.9 C1492.9 829.4 1493.5 834.6 1493.9 838.1 C1494.3 841.6 1491.7 845.2 1492.7 848.1 C1493.8 851.0 1496.0 853.1 1500.2 855.6 C1504.4 858.1 1511.9 860.8 1517.7 863.1 C1523.5 865.4 1529.8 866.9 1535.2 869.4 C1540.6 871.9 1545.2 875.0 1550.2 878.1 C1555.2 881.2 1562.7 886.4 1565.2 888.1"/><path d="M443.2 0.3 C443.2 1.7 445.4 5.0 443.2 8.5 C441.0 12.0 431.7 16.3 430.2 21.5 C428.7 26.7 434.8 31.8 434.1 39.6 C433.5 47.4 427.4 59.2 426.3 68.1 C425.2 76.9 425.4 88.0 427.6 92.7 C429.8 97.5 434.3 94.7 439.3 96.6 C444.3 98.5 452.2 100.0 457.4 104.3 C462.6 108.6 466.0 118.6 470.3 122.5 C474.6 126.4 478.6 126.8 483.3 127.7 C488.1 128.6 495.4 125.6 498.8 127.7 C502.2 129.8 500.6 137.2 504 140.6 C507.4 144.0 513.0 146.0 519.5 148.4 C526.0 150.8 536.3 154.2 542.8 154.8 C549.3 155.5 554.3 152.3 558.4 152.3 C562.5 152.3 566.1 152.0 567.4 154.8 C568.7 157.6 565.3 164.6 566.2 169.1 C567.1 173.6 570.0 179.0 572.6 182 C575.2 185.0 578.2 185.5 581.7 187.2 C585.2 188.9 591.1 188.9 593.3 192.4 C595.4 195.9 595.0 203.6 594.6 207.9 C594.2 212.2 593.4 214.4 590.8 218.3 C588.2 222.2 584.3 225.6 579.1 231.2 C573.9 236.8 562.9 248.5 559.7 252"/><path d="M592 220.9 C595.9 219.8 608.9 217.4 615.4 214.4 C621.9 211.4 625.7 205.6 630.9 202.8 C636.1 200.0 641.2 198.5 646.4 197.6 C651.6 196.7 657.7 198.9 662 197.6 C666.3 196.3 668.4 192.8 672.3 189.8 C676.2 186.8 681.0 182.9 685.3 179.4 C689.6 175.9 694.3 171.7 698.2 169.1 C702.1 166.5 704.7 164.1 708.6 163.9 C712.5 163.7 716.8 166.9 721.5 167.8 C726.2 168.7 732.8 171.5 737.1 169.1 C741.4 166.7 744.8 156.6 747.4 153.6 C750.0 150.6 751.1 150.8 752.6 151 C754.1 151.2 754.4 155.7 756.5 154.8 C758.6 153.9 762.3 149.2 765.5 145.8 C768.7 142.4 773.3 138.4 775.9 134.1 C778.5 129.8 778.5 123.1 781.1 119.9 C783.7 116.7 786.6 116.0 791.4 114.7 C796.1 113.4 804.0 113.8 809.6 112.1 C815.2 110.4 819.9 106.0 825.1 104.3 C830.3 102.6 835.1 102.4 840.6 101.8 C846.1 101.2 855.1 100.7 858 100.5"/><path d="M615.4 223.5 C617.1 226.5 621.8 236.4 625.7 241.6 C629.6 246.8 633.5 250.8 638.7 254.5 C643.9 258.2 652.1 260.1 656.8 263.6 C661.5 267.1 664.1 270.3 667.1 275.3 C670.1 280.3 672.3 287.4 674.9 293.4 C677.5 299.4 680.1 306.3 682.7 311.5 C685.3 316.7 689.2 322.3 690.5 324.5"/><path d="M800.1 0 C800.9 2.5 802.6 10.4 805.1 15 C807.6 19.6 813.0 23.8 815.1 27.5 C817.2 31.2 815.1 32.9 817.6 37.5 C820.1 42.1 828.4 49.6 830.1 55 C831.8 60.4 826.4 66.2 827.6 70 C828.9 73.8 834.1 74.6 837.6 77.5 C841.1 80.4 847.0 84.2 848.9 87.5 C850.8 90.8 848.9 95.8 848.9 97.5"/><path d="M830.1 102.6 C833.2 101.8 843.1 95.8 848.9 97.5 C854.7 99.2 860.3 109.7 865.1 112.6 C869.9 115.5 873.4 112.6 877.6 115.1 C881.8 117.6 887.3 124.3 890.2 127.6 C893.1 130.9 891.5 134.3 895.2 135.1 C899.0 135.9 907.3 131.3 912.7 132.6 C918.1 133.8 922.3 141.3 927.7 142.6 C933.1 143.8 939.8 140.9 945.2 140.1 C950.6 139.3 955.2 138.2 960.2 137.6 C965.2 137.0 970.2 136.7 975.2 136.3 C980.2 135.9 984.8 135.1 990.2 135.1 C995.6 135.1 1002.7 134.2 1007.7 136.3 C1012.7 138.4 1016.5 144.1 1020.2 147.6 C1024.0 151.1 1025.6 155.5 1030.2 157.6 C1034.8 159.7 1043.5 158.8 1047.7 160.1 C1051.9 161.3 1051.0 164.3 1055.2 165.1 C1059.4 165.9 1066.4 165.7 1072.7 165.1 C1079.0 164.5 1089.5 161.9 1092.8 161.3"/><path d="M848.9 87.5 C849.5 86.2 849.5 82.1 852.6 80 C855.7 77.9 863.0 76.2 867.6 75 C872.2 73.8 875.6 75.8 880.2 72.5 C884.8 69.2 890.2 59.6 895.2 55 C900.2 50.4 904.4 48.3 910.2 45 C916.0 41.7 924.0 37.9 930.2 35 C936.5 32.1 942.7 27.9 947.7 27.5 C952.7 27.1 955.6 31.9 960.2 32.5 C964.8 33.1 970.2 31.7 975.2 31.3 C980.2 30.9 985.2 29.8 990.2 30 C995.2 30.2 1000.2 32.5 1005.2 32.5 C1010.2 32.5 1014.4 32.5 1020.2 30 C1026.0 27.5 1034.4 20.8 1040.2 17.5 C1046.0 14.2 1050.6 12.5 1055.2 10 C1059.8 7.5 1064.8 4.2 1067.7 2.5 C1070.6 0.8 1071.9 0.4 1072.7 0"/><path d="M1092.8 161.3 C1094.5 163.6 1099.5 169.1 1102.8 175.1 C1106.1 181.1 1110.3 190.5 1112.8 197.6 C1115.3 204.7 1115.3 212.6 1117.8 217.6 C1120.3 222.6 1124.9 223.8 1127.8 227.6 C1130.7 231.3 1133.2 235.5 1135.3 240.1 C1137.4 244.7 1136.2 252.6 1140.3 255.1 C1144.4 257.6 1156.7 255.1 1160 255.1"/><path d="M1067.7 2.5 C1072.3 2.3 1087.8 0.1 1095.3 1.3 C1102.8 2.5 1107.0 7.3 1112.8 10 C1118.6 12.7 1124.9 15.6 1130.3 17.5 C1135.7 19.4 1140.3 20.1 1145.3 21.3 C1150.2 22.6 1157.5 24.4 1160 25"/><path d="M979.1 717.6 C980.5 718.9 984.9 722.7 987.8 725.4 C990.7 728.1 993.5 732.0 996.4 734 C999.3 736.0 1002.5 735.5 1005.1 737.5 C1007.7 739.5 1009.4 743.5 1012 746.1 C1014.6 748.7 1019.0 750.1 1020.6 753 C1022.2 755.9 1020.4 760.8 1021.5 763.4 C1022.6 766.0 1025.3 767.2 1027.5 768.6 C1029.7 770.0 1030.9 771.9 1034.4 772 C1037.9 772.1 1044.5 769.1 1048.3 769.4 C1052.0 769.7 1053.5 772.5 1056.9 773.8 C1060.4 775.1 1067.4 774.6 1069 777.2 C1070.6 779.8 1065.8 785.5 1066.4 789.3 C1067.0 793.0 1070.3 796.2 1072.5 799.7 C1074.7 803.2 1077.4 806.1 1079.4 810.1 C1081.4 814.1 1083.6 819.3 1084.6 823.9 C1085.6 828.5 1085.3 835.4 1085.4 837.7"/><path d="M1085.6 836.5 C1089.6 836.9 1104.6 839.4 1109.8 839.1 C1115.0 838.8 1114.1 836.1 1116.7 834.8 C1119.3 833.5 1121.8 832.0 1125.3 831.3 C1128.8 830.6 1134.0 831.9 1137.4 830.5 C1140.9 829.1 1143.1 824.9 1146 822.7 C1148.9 820.5 1152.1 820.1 1154.6 817.5 C1157.0 814.9 1159.1 808.9 1160.7 807.2 C1162.3 805.5 1163.5 807.2 1164.1 807.2"/><path d="M1085.6 836.5 C1086.5 838.8 1088.2 847.0 1090.8 850.3 C1093.4 853.6 1099.4 855.3 1101.1 856.3"/></g>
<g fill="none" stroke="#f0a070" stroke-width="1" stroke-opacity=".75" stroke-linejoin="round"><path d="M708.3 453 C709.4 453.9 711.2 457.2 715.2 458.2 C719.2 459.2 727.3 459.4 732.5 459.1 C737.7 458.8 741.7 456.6 746.3 456.5 C750.9 456.4 755.5 457.1 760.1 458.2 C764.7 459.3 769.3 462.8 773.9 463.4 C778.5 464.0 783.2 462.2 787.8 461.6 C792.4 461.0 797.0 460.0 801.6 459.9 C806.2 459.8 811.4 460.2 815.4 460.8 C819.4 461.4 823.6 461.8 825.8 463.4 C828.0 465.0 828.5 467.7 828.4 470.3 C828.2 472.9 824.5 476.4 824.9 478.9 C825.3 481.3 828.0 483.6 831 485 C834.0 486.4 839.9 486.3 843.1 487.6 C846.3 488.9 848.3 490.8 850 492.8 C851.7 494.8 850.6 498.0 853.5 499.7 C856.4 501.4 863.0 501.7 867.3 503.1 C871.6 504.5 875.9 506.6 879.4 508.3 C882.9 510.0 884.8 510.9 888 513.5 C891.2 516.1 895.5 520.1 898.4 523.9 C901.3 527.6 902.9 532.8 905.3 536 C907.7 539.2 911.4 541.8 912.6 542.9"/><path d="M912.6 542.9 C914.3 543.6 918.6 546.1 922.6 547.2 C926.6 548.4 931.2 549.6 936.4 549.8 C941.6 549.9 948.2 548.1 953.7 548.1 C959.2 548.1 965.0 548.4 969.3 549.8 C973.6 551.2 975.7 554.4 979.7 556.7 C983.7 559.0 988.6 562.3 993.5 563.6 C998.4 564.9 1006.3 564.4 1008.9 564.5"/><path d="M972 553.9 C973.4 554.5 977.1 555.9 980.6 557.3 C984.1 558.7 988.7 561.4 992.7 562.5 C996.7 563.6 1001.5 564.1 1004.8 564.2 C1008.1 564.4 1011.3 563.5 1012.6 563.4"/><path d="M1012.6 563.4 C1013.0 565.0 1013.1 570.2 1015.2 572.9 C1017.4 575.6 1022.0 576.5 1025.5 579.8 C1029.0 583.1 1035.3 589.0 1035.9 592.8 C1036.5 596.5 1031.6 599.8 1029 602.3 C1026.4 604.8 1022.7 604.6 1020.4 607.5 C1018.1 610.4 1017.8 615.0 1015.2 619.6 C1012.6 624.2 1007.7 629.9 1004.8 635.1 C1001.9 640.3 1000.5 646.1 997.9 650.7 C995.3 655.3 991.8 658.5 989.2 662.8 C986.6 667.1 984.3 671.7 982.3 676.6 C980.3 681.5 978.5 686.6 977.1 692.2 C975.7 697.8 974.3 707.0 973.7 710"/><path d="M1012.6 563.4 C1013.6 561.0 1016.2 553.8 1018.6 548.7 C1021.0 543.7 1023.8 536.6 1027.3 533.1 C1030.8 529.6 1035.4 528.9 1039.4 527.9 C1043.4 526.9 1049.5 527.2 1051.5 527.1"/><path d="M1053.2 529.7 C1053.8 530.9 1054.4 534.9 1056.7 536.6 C1059.0 538.3 1063.3 540.3 1067 540 C1070.7 539.7 1075.3 536.0 1079.1 534.9 C1082.8 533.8 1086.3 534.5 1089.5 533.1 C1092.7 531.7 1095.8 528.8 1098.1 526.2 C1100.4 523.6 1101.3 521.1 1103.3 517.6 C1105.3 514.1 1108.8 509.5 1110.2 505.5 C1111.7 501.5 1110.3 496.3 1112 493.4 C1113.7 490.5 1118.0 489.9 1120.6 488.2 C1123.2 486.5 1126.3 483.9 1127.5 483"/><path d="M1036.8 483 C1036.1 485.6 1034.1 493.1 1032.5 498.6 C1030.9 504.1 1028.2 510.0 1027.3 515.8 C1026.4 521.5 1027.3 530.2 1027.3 533.1"/><path d="M1073.9 483 C1074.2 484.7 1076.3 489.1 1075.7 493.4 C1075.1 497.7 1072.8 504.9 1070.5 508.9 C1068.2 512.9 1063.5 513.9 1061.8 517.6 C1060.1 521.4 1060.4 529.1 1060.1 531.4"/><path d="M914.1 548.7 C914.8 550.7 918.5 556.8 918.4 560.8 C918.2 564.8 912.9 567.7 913.2 572.9 C913.5 578.1 917.8 585.0 920.1 591.9 C922.4 598.8 923.2 610.1 927 614.4 C930.8 618.7 937.1 615.8 942.6 617.8 C948.1 619.8 956.5 623.0 959.9 626.5 C963.3 630.0 961.6 634.3 963.3 638.6 C965.0 642.9 966.7 649.5 970.2 652.4 C973.7 655.3 980.9 654.2 984.1 655.9 C987.3 657.6 988.4 661.6 989.2 662.8"/><path d="M908 417.8 C909.7 418.4 914.1 420.6 918.4 421.3 C922.7 422.0 928.4 422.5 933.9 422.2 C939.4 421.9 946.0 420.0 951.2 419.6 C956.4 419.2 961.2 418.8 965 419.6 C968.8 420.5 970.8 422.8 973.7 424.7 C976.6 426.6 978.3 429.5 982.3 430.8 C986.3 432.1 994.7 431.6 997.9 432.5 C1001.1 433.4 999.0 438.4 1001.3 436 C1003.6 433.6 1007.1 419.8 1011.7 417.8 C1016.3 415.8 1024.4 422.8 1029 423.9 C1033.6 425.0 1035.1 424.7 1039.4 424.7 C1043.7 424.7 1050.3 424.8 1054.9 423.9 C1059.5 423.0 1061.2 419.9 1067 419.6 C1072.8 419.3 1084.0 421.9 1089.5 422.2 C1095.0 422.5 1097.9 420.1 1099.9 421.3 C1101.9 422.5 1097.9 428.2 1101.6 429.1 C1105.3 430.0 1117.1 428.4 1122.3 426.5 C1127.5 424.6 1130.4 420.4 1132.7 417.8 C1135.0 415.2 1134.3 411.8 1136.2 410.9 C1138.1 410.0 1142.7 412.3 1144 412.6"/><path d="M1030.7 426.5 C1030.1 429.1 1027.9 436.8 1027.3 442 C1026.7 447.2 1025.9 453.9 1027.3 457.6 C1028.7 461.4 1034.3 460.3 1035.9 464.5 C1037.5 468.7 1037.4 475.4 1036.8 483 C1036.2 490.6 1033.2 505.5 1032.5 510"/><path d="M1054.9 423.9 C1055.5 425.8 1056.1 431.2 1058.4 435.1 C1060.7 439.0 1066.2 443.2 1068.8 447.2 C1071.4 451.2 1072.5 455.3 1073.9 459.3 C1075.3 463.3 1077.4 467.4 1077.4 471.4 C1077.4 475.3 1074.5 481.1 1073.9 483"/><path d="M1167.3 445.5 C1166.7 447.2 1166.7 452.4 1163.8 455.9 C1160.9 459.3 1155.2 462.5 1150 466.2 C1144.8 469.9 1137.6 474.6 1132.7 478.3 C1127.8 482.1 1124.0 485.5 1120.6 488.7 C1117.1 491.9 1114.0 493.8 1112 497.3 C1110.0 500.9 1109.1 507.9 1108.5 510"/><path d="M1124.1 481.8 C1125.5 483.2 1128.4 489.5 1132.7 490.4 C1137.0 491.3 1145.4 488.1 1150 487 C1154.6 485.9 1159.2 487.2 1160.4 483.5 C1161.6 479.8 1157.5 467.7 1156.9 464.5"/><path d="M870.1 327.9 C870.3 324.1 869.7 310.7 871.4 305.2 C873.1 299.7 875.8 298.9 880.2 295.1 C884.6 291.3 892.3 285.1 897.7 282.6 C903.1 280.1 908.5 283.0 912.7 280.1 C916.9 277.2 918.1 268.9 922.7 265.1 C927.3 261.4 936.0 261.8 940.2 257.6 C944.4 253.4 946.7 245.9 947.7 240.1 C948.7 234.3 944.7 228.0 946.4 222.6 C948.1 217.2 954.6 212.2 957.7 207.6 C960.8 203.0 961.5 197.6 965.2 195.1 C969.0 192.6 974.8 191.5 980.2 192.6 C985.6 193.7 991.5 201.6 997.7 201.4 C1004.0 201.2 1014.4 193.0 1017.7 191.3"/><path d="M869.3 460 C868.4 458.2 866.7 452.9 864.1 449.1 C861.5 445.3 856.6 441.3 853.7 437 C850.8 432.7 847.1 428.3 846.8 423.1 C846.5 417.9 850.5 411.6 852 405.9 C853.5 400.1 853.8 393.5 855.5 388.6 C857.2 383.7 860.1 380.8 862.4 376.5 C864.7 372.2 868.0 368.1 869.3 362.6 C870.6 357.1 870.1 349.1 870.1 343.6 C870.1 338.1 869.1 335.0 869.3 329.8 C869.4 324.6 869.9 318.0 871 312.5 C872.1 307.0 873.3 300.4 876.2 297 C879.1 293.6 884.8 293.8 888.3 291.8 C891.8 289.8 893.6 286.9 896.9 284.9 C900.2 282.9 906.1 280.6 908 279.7"/><path d="M722.3 395.5 C725.2 396.6 733.8 400.4 739.6 402.4 C745.4 404.4 751.7 406.7 756.9 407.6 C762.1 408.5 767.2 409.1 770.7 407.6 C774.2 406.2 774.2 401.5 777.7 398.9 C781.2 396.3 786.3 393.9 791.5 392 C796.7 390.1 802.5 389.1 808.8 387.7 C815.1 386.3 823.5 385.6 829.5 383.4 C835.5 381.2 839.6 375.8 845.1 374.7 C850.6 373.6 859.5 376.2 862.4 376.5"/><path d="M908 416.2 C906.1 416.2 900.5 416.8 896.9 416.2 C893.3 415.6 889.8 414.8 886.6 412.8 C883.4 410.8 880.5 407.0 877.9 404.1 C875.3 401.2 873.3 398.1 871 395.5 C868.7 392.9 866.7 390.6 864.1 388.6 C861.5 386.6 856.9 384.3 855.5 383.4"/><path d="M691.2 321.2 C692.1 322.6 695.2 326.6 696.4 329.8 C697.5 333.0 696.1 336.4 698.1 340.2 C700.1 343.9 707.0 348.6 708.5 352.3 C710.0 356.0 705.9 358.9 706.8 362.6 C707.7 366.3 711.1 372.4 713.7 374.7 C716.3 377.0 720.0 374.8 722.3 376.5 C724.6 378.2 727.5 381.9 727.5 385.1 C727.5 388.3 721.7 393.2 722.3 395.5 C722.9 397.8 728.1 397.8 731 398.9 C733.9 400.0 738.2 399.5 739.6 402.4 C741.0 405.3 741.0 411.9 739.6 416.2 C738.2 420.5 733.3 423.4 731 428.3 C728.7 433.2 726.7 442.7 725.8 445.6"/><path d="M646.3 412.8 C647.2 412.2 647.5 410.5 651.5 409.3 C655.5 408.1 665.0 406.2 670.5 405.9 C676.0 405.6 679.7 409.1 684.3 407.6 C688.9 406.2 693.5 400.1 698.1 397.2 C702.7 394.3 708.0 390.6 712 390.3 C716.0 390.0 720.6 394.6 722.3 395.5"/><path d="M725.8 445.6 C723.5 446.2 716.0 446.7 712 449.1 C708.0 451.5 703.3 458.2 701.6 460"/><path d="M725.8 445.6 C728.1 446.2 735.0 448.8 739.6 449.1 C744.2 449.4 749.5 446.7 753.5 447.3 C757.5 447.9 759.8 452.2 763.8 452.5 C767.8 452.8 773.1 450.0 777.7 449.1 C782.3 448.2 785.8 447.3 791.5 447.3 C797.2 447.3 806.2 448.5 812.2 449.1 C818.2 449.7 824.9 449.0 827.8 450.8 C830.7 452.6 829.2 458.5 829.5 460"/></g>
<g text-anchor="middle" stroke="#fff" stroke-opacity=".85" stroke-width="2.2" paint-order="stroke" stroke-linejoin="round">
<text x="576.5" y="104.98" font-size="11.13" fill="#2a2a2a">Fria</text>
<text x="680.1" y="125.84" font-size="12.19" fill="#8d5a8d" font-style="italic">Région de</text>
<text x="680.1" y="138.74" font-size="12.19" fill="#8d5a8d" font-style="italic">Kindia</text>
<text x="708.1" y="163.28" font-size="11.13" fill="#2a2a2a">Kindia</text>
<text x="611.5" y="225.98" font-size="11.13" fill="#2a2a2a">Coyah</text>
<text x="554.5" y="262.56" font-size="14.31" fill="#2a2a2a">Conakry</text>
<text x="828.9" y="43.64" font-size="12.19" fill="#8d5a8d" font-style="italic">Région de</text>
<text x="828.9" y="56.14" font-size="12.19" fill="#8d5a8d" font-style="italic">Mamou</text>
<text x="848.9" y="103.08" font-size="11.13" fill="#2a2a2a">Mamou</text>
<text x="1080.3" y="108.44" font-size="12.19" fill="#8d5a8d" font-style="italic">Faranah</text>
<text x="1355.1" y="102.36" font-size="14.31" fill="#2a2a2a">Kankan</text>
<text x="1508.9" y="199.24" font-size="12.19" fill="#1f6b1f" font-style="italic">Réserve</text>
<text x="1508.9" y="213.04" font-size="12.19" fill="#1f6b1f" font-style="italic">Naturelle</text>
<text x="1508.9" y="226.74" font-size="12.19" fill="#1f6b1f" font-style="italic">de Kankan</text>
<text x="1692.8" y="239.74" font-size="12.19" fill="#8d5a8d" font-style="italic">Denguélé</text>
<text x="1210" y="321.48" font-size="11.13" fill="#2a2a2a">Kissidougou</text>
<text x="1204.5" y="438.08" font-size="11.13" fill="#2a2a2a">Guéckédou</text>
<text x="1325.1" y="440.58" font-size="11.13" fill="#2a2a2a">Macenta</text>
<text x="1426.4" y="457.24" font-size="12.19" fill="#8d5a8d" font-style="italic">Région de</text>
<text x="1426.4" y="469.74" font-size="12.19" fill="#8d5a8d" font-style="italic">Nzérékoré</text>
<text x="1253" y="542.24" font-size="12.19" fill="#8d5a8d" font-style="italic">Lofa County</text>
<text x="1443.9" y="585.68" font-size="11.13" fill="#2a2a2a">N'Zérékoré</text>
<text x="1673.3" y="647.68" font-size="11.13" fill="#2a2a2a">Man</text>
<text x="1197.5" y="642.64" font-size="12.19" fill="#8d5a8d" font-style="italic">Gbarpolu</text>
<text x="1197.5" y="655.14" font-size="12.19" fill="#8d5a8d" font-style="italic">County</text>
<text x="1265.1" y="735.24" font-size="12.19" fill="#8d5a8d" font-style="italic">Bong County</text>
<text x="1460.2" y="755.94" font-size="12.19" fill="#8d5a8d" font-style="italic">Nimba County</text>
<text x="1647.7" y="735.24" font-size="12.19" fill="#8d5a8d" font-style="italic">Montagnes</text>
<text x="1227.5" y="812.24" font-size="12.19" fill="#8d5a8d" font-style="italic">Margibi County</text>
<text x="1291.3" y="848.32" font-size="15.37" fill="#8a4f8a" letter-spacing=".6">Liberia</text>
<text x="1248.8" y="860.24" font-size="12.19" fill="#8d5a8d" font-style="italic">Grand Bassa</text>
<text x="1248.8" y="873.54" font-size="12.19" fill="#8d5a8d" font-style="italic">County</text>
<text x="1792.2" y="473.24" font-size="12.19" fill="#8d5a8d" font-style="italic">Woro</text>
<text x="1031" y="700.44" font-size="12.19" fill="#8d5a8d" font-style="italic">Grand Cape</text>
<text x="1031" y="713.04" font-size="12.19" fill="#8d5a8d" font-style="italic">Mount County</text>
<text x="1087.2" y="774.44" font-size="12.19" fill="#8d5a8d" font-style="italic">Bomi County</text>
<text x="1120.9" y="808.14" font-size="12.19" fill="#8d5a8d" font-style="italic">Montserrado</text>
<text x="1120.9" y="820.24" font-size="12.19" fill="#8d5a8d" font-style="italic">County</text>
<text x="1083" y="849.16" font-size="14.31" fill="#2a2a2a">Monrovia</text>
<text x="697.3" y="333.88" font-size="11.13" fill="#2a2a2a">Kambia</text>
<text x="855.5" y="378.18" font-size="11.13" fill="#2a2a2a">Makeni</text>
<text x="887.4" y="325.64" font-size="12.19" fill="#8d5a8d" font-style="italic">Northern</text>
<text x="887.4" y="337.74" font-size="12.19" fill="#8d5a8d" font-style="italic">Province</text>
<text x="851.1" y="450.02" font-size="15.37" fill="#8a4f8a" letter-spacing=".5">Sierra</text>
<text x="851.7" y="466.02" font-size="15.37" fill="#8a4f8a" letter-spacing=".5">Leone</text>
<text x="633.4" y="452.88" font-size="11.13" fill="#2a2a2a">Freetown</text>
<text x="670" y="478.78" font-size="11.13" fill="#2a2a2a">Waterloo</text>
<text x="1051.8" y="422.78" font-size="11.13" fill="#2a2a2a">Koidu</text>
<text x="1071.4" y="497.14" font-size="12.19" fill="#8d5a8d" font-style="italic">Eastern Province</text>
<text x="912.6" y="547.58" font-size="11.13" fill="#2a2a2a">Bo</text>
<text x="1012.6" y="561.98" font-size="11.13" fill="#2a2a2a">Kenema</text>
<text x="845.7" y="573.84" font-size="12.19" fill="#8d5a8d" font-style="italic">Southern</text>
<text x="845.7" y="585.94" font-size="12.19" fill="#8d5a8d" font-style="italic">Province</text>
</g>
<g fill="#008000" fill-opacity=".3" stroke="none">
<path d="M626.4 345.4 L629 341.9 L639.4 338.4 L649.7 336.7 L654.9 340.2 L663.6 343.6 L672.2 338.4 L680.9 335 L686 322.9 L689.5 316 L688.6 307.3 L693 300.4 L698.1 302.1 L706.8 298.7 L718.9 297 L727.5 288.3 L728.4 279.7 L737.9 277.1 L740.5 267.6 L747.4 258.9 L749.1 250.3 L755.2 240.8 L756.9 233 L758.8 230.1 L770.1 217.6 L773.8 200.1 L780.1 192.6 L797.6 187.6 L823.9 181.3 L841.4 192.1 L881.4 180.1 L883.9 168.8 L1007.7 168.1 L1016.5 175.1 L1017.7 191.3 L1030.2 193.8 L1042.7 207.6 L1052.7 227.6 L1065.2 240.1 L1075.2 260.1 L1080.3 277.6 L1090.3 282.6 L1103.3 289.9 L1109.4 298.6 L1106.8 307.2 L1109.4 314.1 L1098.1 317.6 L1099.9 326.2 L1095.6 334.9 L1099.9 338.3 L1112 338.3 L1123.2 343.5 L1122.3 355.6 L1124.1 369.4 L1126.7 383.3 L1132.7 393.6 L1139.6 404 L1144 412.6 L1143.9 413 L1142.1 417.6 L1137.5 421.2 L1130.2 424 L1123.8 427.6 L1121 433.1 L1116.5 436.8 L1113.7 444.1 L1111 451.4 L1110.5 458.7 L1111.9 465.1 L1105.5 468.7 L1102.8 475.1 L1100.5 485.2 L1103.7 476 L1109.2 472.4 L1116.5 473.3 L1122 476 L1125.6 481.1 L1131.1 477 L1138.4 472.4 L1143.9 466 L1149.4 460.5 L1155.8 452.3 L1159.4 447.7 L1167.6 444.5 L1173.1 446.4 L1178.6 447.3 L1179.1 453.2 L1177.7 462.3 L1175.9 471.5 L1174 478.8 L1170.4 485.2 L1173.1 490.7 L1174.5 496.2 L1172.2 500.7 L1168.6 505.3 L1165.8 508.9 L1160.3 507.1 L1154.9 508.9 L1149.4 508.5 L1143 508 L1137.5 509.9 L1132.9 514.4 L1130.2 519 L1126.5 524.5 L1122 529 L1118.3 530.9 L1118 533.1 L1118 578.1 L1101.6 585.9 L1082.6 610.9 L1075.7 620.4 L1060.1 627.3 L1046.3 638.6 L1034.2 646.4 L1020.4 659.3 L1014.3 670.6 L994.4 681.8 L984.1 693.9 L984.9 706 L979.1 709.8 L980.9 715 L972.2 721.9 L970.5 730.5 L960.1 735.7 L960.1 735.7 L946.3 728.8 L935.9 723.6 L925.5 713.3 L911.7 704.6 L894.4 696 L877.1 687.3 L859.9 681.3 L842.6 674.4 L850 677.7 L832.7 671.7 L815.4 663.9 L798.1 657 L780.9 651.8 L770.5 650.1 L775.7 636.2 L780.9 625.9 L779.1 613.8 L773.9 605.1 L763.6 598.2 L756.7 594.7 L746.3 591.3 L735.9 591.3 L725.5 584.4 L720.4 578.3 L711.7 574 L703.1 565.4 L694.4 560.2 L691 553.3 L697.9 548.9 L703.1 542.9 L699.6 530.8 L699.6 520.4 L694.4 508.3 L685.8 501.4 L682.3 494.5 L668.5 494.5 L659.9 499.7 L653.8 504.9 L652.1 492.8 L648.6 482.4 L642.6 472 L633.9 461.6 L628.7 453 L629 456 L632.5 450.8 L646.3 449.1 L655.8 448.2 L654.9 442.2 L648 437 L644.6 430.1 L642 421.4 L638.5 414.5 L637.6 404.1 L636.8 392 L639.4 383.4 L644.6 379.1 L651.5 379.9 L658.4 382.5 L654.1 376.5 L651.5 369.6 L644.6 373.9 L639.4 371.3 L642 366.1 L635.9 361.8 L629 360.1 L629 354 L626.4 345.4Z"/>
<path d="M693.6 614.3 L701.2 606.6 L722.5 604.2 L753 603 L759.1 608.2 L768.2 615.8 L775.8 621.9 L778.9 628 L771.3 634.1 L768.2 649.3 L762.1 646.3 L759.1 637.1 L740.8 628 L716.4 620.4Z"/>
</g>
<path d="M655.5 441.9 C656.5 441.3 659.7 439.0 661.6 438.1 C663.5 437.2 665.2 437.9 666.9 436.6 C668.5 435.3 670.1 432.1 671.5 430.5 C672.9 428.9 673.6 427.7 675.3 426.7 C676.9 425.7 679.1 424.6 681.4 424.4 C683.7 424.1 686.7 424.3 689 425.2 C691.3 426.1 693.5 427.9 695.1 429.7 C696.8 431.5 698.9 434.1 698.9 435.8 C698.9 437.5 696.5 439.2 695.1 439.6 C693.7 440.0 692.0 439.0 690.5 438.1 C689.0 437.2 687.8 435.1 686 434.3 C684.2 433.5 681.4 432.9 679.9 433.5 C678.4 434.1 677.8 436.5 676.8 438.1 C675.8 439.8 675.2 442.0 673.8 443.4 C672.4 444.8 670.2 445.5 668.4 446.5 C666.6 447.5 665.0 448.7 663.1 449.5 C661.2 450.3 658.0 450.8 657 451.1Z" fill="#c3d9da"/>
<g fill="none" stroke="#fff" stroke-width="2" stroke-linejoin="round" stroke-linecap="round">
<path d="M626.4 345.4 L629 341.9 L639.4 338.4 L649.7 336.7 L654.9 340.2 L663.6 343.6 L672.2 338.4 L680.9 335 L686 322.9 L689.5 316 L688.6 307.3 L693 300.4 L698.1 302.1 L706.8 298.7 L718.9 297 L727.5 288.3 L728.4 279.7 L737.9 277.1 L740.5 267.6 L747.4 258.9 L749.1 250.3 L755.2 240.8 L756.9 233 L758.8 230.1 L770.1 217.6 L773.8 200.1 L780.1 192.6 L797.6 187.6 L823.9 181.3 L841.4 192.1 L881.4 180.1 L883.9 168.8 L1007.7 168.1 L1016.5 175.1 L1017.7 191.3 L1030.2 193.8 L1042.7 207.6 L1052.7 227.6 L1065.2 240.1 L1075.2 260.1 L1080.3 277.6 L1090.3 282.6 L1103.3 289.9 L1109.4 298.6 L1106.8 307.2 L1109.4 314.1 L1098.1 317.6 L1099.9 326.2 L1095.6 334.9 L1099.9 338.3 L1112 338.3 L1123.2 343.5 L1122.3 355.6 L1124.1 369.4 L1126.7 383.3 L1132.7 393.6 L1139.6 404 L1144 412.6 L1143.9 413 L1142.1 417.6 L1137.5 421.2 L1130.2 424 L1123.8 427.6 L1121 433.1 L1116.5 436.8 L1113.7 444.1 L1111 451.4 L1110.5 458.7 L1111.9 465.1 L1105.5 468.7 L1102.8 475.1 L1100.5 485.2 L1103.7 476 L1109.2 472.4 L1116.5 473.3 L1122 476 L1125.6 481.1 L1131.1 477 L1138.4 472.4 L1143.9 466 L1149.4 460.5 L1155.8 452.3 L1159.4 447.7 L1167.6 444.5 L1173.1 446.4 L1178.6 447.3 L1179.1 453.2 L1177.7 462.3 L1175.9 471.5 L1174 478.8 L1170.4 485.2 L1173.1 490.7 L1174.5 496.2 L1172.2 500.7 L1168.6 505.3 L1165.8 508.9 L1160.3 507.1 L1154.9 508.9 L1149.4 508.5 L1143 508 L1137.5 509.9 L1132.9 514.4 L1130.2 519 L1126.5 524.5 L1122 529 L1118.3 530.9 L1118 533.1 L1118 578.1 L1101.6 585.9 L1082.6 610.9 L1075.7 620.4 L1060.1 627.3 L1046.3 638.6 L1034.2 646.4 L1020.4 659.3 L1014.3 670.6 L994.4 681.8 L984.1 693.9 L984.9 706 L979.1 709.8 L980.9 715 L972.2 721.9 L970.5 730.5 L960.1 735.7 L960.1 735.7 L946.3 728.8 L935.9 723.6 L925.5 713.3 L911.7 704.6 L894.4 696 L877.1 687.3 L859.9 681.3 L842.6 674.4 L850 677.7 L832.7 671.7 L815.4 663.9 L798.1 657 L780.9 651.8 L770.5 650.1 L775.7 636.2 L780.9 625.9 L779.1 613.8 L773.9 605.1 L763.6 598.2 L756.7 594.7 L746.3 591.3 L735.9 591.3 L725.5 584.4 L720.4 578.3 L711.7 574 L703.1 565.4 L694.4 560.2 L691 553.3 L697.9 548.9 L703.1 542.9 L699.6 530.8 L699.6 520.4 L694.4 508.3 L685.8 501.4 L682.3 494.5 L668.5 494.5 L659.9 499.7 L653.8 504.9 L652.1 492.8 L648.6 482.4 L642.6 472 L633.9 461.6 L628.7 453 L629 456 L632.5 450.8 L646.3 449.1 L655.8 448.2 L654.9 442.2 L648 437 L644.6 430.1 L642 421.4 L638.5 414.5 L637.6 404.1 L636.8 392 L639.4 383.4 L644.6 379.1 L651.5 379.9 L658.4 382.5 L654.1 376.5 L651.5 369.6 L644.6 373.9 L639.4 371.3 L642 366.1 L635.9 361.8 L629 360.1 L629 354 L626.4 345.4Z" stroke-dasharray="3"/>
<path d="M693.6 614.3 L701.2 606.6 L722.5 604.2 L753 603 L759.1 608.2 L768.2 615.8 L775.8 621.9 L778.9 628 L771.3 634.1 L768.2 649.3 L762.1 646.3 L759.1 637.1 L740.8 628 L716.4 620.4Z" stroke-dasharray="3"/>
<path d="M755.2 240.8 L776.8 244.2 L776.8 255.5 L779.4 265.8 L789.8 267.6 L791.5 277.9 L798.4 280.5 L796.7 288.3 L790.6 293.5 L795.8 299.6 L794.9 302.1 L788.9 298.7 L784.6 305.6 L774.2 302.1 L767.3 309.1 L758.6 314.2 L746.5 319.4 L744.8 329.8 L734.4 338.4 L732.7 350.5" stroke-width="2.1" stroke-dasharray="6 .8" stroke-linecap="butt"/>
<path d="M784.6 305.6 L786.3 316 L782.8 326.3 L776.8 333.3 L775.9 338.4 L765.6 339.3 L761.2 347.1 L769 352.3 L777.7 354 L782.8 364.4 L794.9 369.6 L804.5 375.6 L805.3 383.4 L808.8 388.6 L805.3 397.2 L804.5 405.9 L812.2 397.2 L819.1 404.1 L829.5 407.6 L836.4 419.7 L846.8 414.5 L852 409.3 L864.1 411 L876.2 402.4 L883.1 393.8 L886.6 379.9 L888.3 369.6 L886.6 357.5 L898.7 348.8 L908 341.9" stroke-width="2.1" stroke-dasharray="6 .8" stroke-linecap="butt"/>
<path d="M732.7 350.5 L729.3 345.4 L730.1 335 L720.6 334.1 L718.9 341.9 L712 352.3 L705.9 362.6 L705.1 371.3 L699.9 379.9 L689.5 381.7 L673.9 383.4 L656.7 385.1 L654.9 388.6 L649.7 386.8 L651.5 379.9" stroke-width="2.1" stroke-dasharray="6 .8" stroke-linecap="butt"/>
<path d="M804.5 405.9 L795.8 411 L796.7 418 L805.3 420.6 L807 427.5 L814.8 433.5 L801.9 442.2 L791.5 445.6 L781.1 450.8 L767.3 454.3 L760.4 450.8 L755.2 453.4 L753.5 460" stroke-width="2.1" stroke-dasharray="6 .8" stroke-linecap="butt"/>
<path d="M755.1 241.4 L776.3 243.9 L777.6 265.1 L788.9 267.6 L792.6 277.6 L797.6 281.4 L796.4 287.6 L790.1 295.1" stroke-width="2.1" stroke-dasharray="6 .8" stroke-linecap="butt"/>
<path d="M881.4 180.1 L883.9 200.1 L886.4 222.6 L862.6 231.4 L848.9 236.4 L840.1 245.1 L852.6 250.1 L857.6 256.4 L872.6 258.9 L886.4 257.6 L890.2 270.1 L897.7 282.6 L897.7 300.2 L900.2 315.2 L912.7 314.7 L915.2 301.4 L917.7 315.2 L918.9 327.9" stroke-width="2.1" stroke-dasharray="6 .8" stroke-linecap="butt"/>
<path d="M900.2 315.2 L901.4 327.9" stroke-width="2.1" stroke-dasharray="6 .8" stroke-linecap="butt"/>
<path d="M908 315.8 L915.8 300.3 L918.4 317.6 L917.5 333.1 L924.4 338.3 L930.5 334.9 L937.4 328.8 L952.1 321.9 L965 323.6 L970.2 325.4 L964.2 329.7 L963.3 347 L965 355.6 L959.9 367.7 L965 379.8 L970.2 391.9 L974.6 398.8 L976.3 410.9 L981.5 417.8 L984.1 431.7 L980.6 438.6" stroke-width="2.1" stroke-dasharray="6 .8" stroke-linecap="butt"/>
<path d="M980.6 438.6 L965 438.6 L956.4 441.2 L949.5 437.7 L940.8 444.6 L925.3 446.4 L914.9 448.1 L908 461" stroke-width="2.1" stroke-dasharray="6 .8" stroke-linecap="butt"/>
<path d="M940.8 444.6 L939.1 448.9 L945.2 457.6 L946 468 L954.7 474.9 L959.9 481.8 L966.8 490.4 L977.1 500.8 L980.6 510" stroke-width="2.1" stroke-dasharray="6 .8" stroke-linecap="butt"/>
<path d="M980.6 438.6 L992.7 443.8 L997.9 452.4 L999.6 462.8 L1004.8 471.4 L1010 475.7 L1018.6 474 L1027.3 469.7 L1031.6 474.9 L1039.4 474.9 L1046.3 466.2 L1051.5 463.6 L1063.6 466.2 L1069.6 465.4 L1071.4 460.2 L1078.3 461.9 L1086 462.8 L1088.6 468.8 L1098.1 461 L1110.2 455" stroke-width="2.1" stroke-dasharray="6 .8" stroke-linecap="butt"/>
<path d="M984.1 431.7 L982.3 417.8 L980.6 402.3 L984.1 393.6 L991 381.5 L994.4 372.9 L997.9 368.6 L1010 364.2 L1020.4 359.1 L1020.4 350.4 L1027.3 344.4 L1033.3 341.8 L1041.1 344.4 L1051.5 344.4 L1058.4 352.1 L1067 360.8 L1073.9 366.8 L1080.9 368.6 L1091.2 366.8 L1100.7 365.1 L1098.1 357.3 L1103.3 350.4 L1112 346.1 L1122.3 345.2" stroke-width="2.1" stroke-dasharray="6 .8" stroke-linecap="butt"/>
<path d="M1063.6 466.2 L1056.7 469.7 L1052.3 480.1 L1054.9 488.7 L1063.6 487 L1070.5 488.7 L1069.6 499.1 L1065.3 510" stroke-width="2.1" stroke-dasharray="6 .8" stroke-linecap="butt"/>
<path d="M959.9 483 L968.5 493.4 L978.9 502 L984.1 521 L984.1 538.3 L977.1 547 L965 555.6 L959.9 564.2 L960.7 572 L967.6 572.9 L971.1 579.8 L968.5 590.2 L959.9 593.6 L947.8 601.4 L945.2 609.2 L938.3 614.4 L930.5 621.3 L921.8 616.1 L912.3 614.4 L915.8 602.3 L911.5 599.7 L908 602.3" stroke-width="2.1" stroke-dasharray="6 .8" stroke-linecap="butt"/>
<path d="M947.8 601.4 L954.7 604 L955.5 621.3 L963.3 622.2 L970.2 612.6 L976.3 609.2 L982.3 611.8 L984.1 621.3 L981.5 631.7 L982.3 643.8 L991 650.7 L1004.8 655.9 L1020.4 661" stroke-width="2.1" stroke-dasharray="6 .8" stroke-linecap="butt"/>
<path d="M1052.3 483 L1056.7 489.9 L1063.6 487.3 L1070.5 488.2 L1067.9 500.3 L1063.6 512.4 L1054.9 522.8 L1049.7 533.1 L1044.6 543.5 L1039.4 552.1 L1038.5 560.8 L1044.6 567.7 L1051.5 578.1 L1057.5 581.5 L1063.6 582.4 L1065.3 590.2 L1066.2 598.8 L1065.3 604 L1070.5 610.1 L1082.6 610.9" stroke-width="2.1" stroke-dasharray="6 .8" stroke-linecap="butt"/>
<path d="M684.1 494.5 L691 490.2 L699.6 485.8 L702.2 482.4 L708.3 473.7 L716.9 466 L725.5 468.6 L732.5 471.2 L739.4 468.6 L746.3 468.6 L754.9 472.9 L761.8 481.5 L770.5 485 L780.9 483.3 L785.2 486.7 L786 480.7 L798.1 472.9 L810.2 475.5 L817.2 472 L825.8 476.3 L836.2 478.9 L844.8 485.8 L851.7 490.2 L858.6 490.2 L859.5 485.8 L855.2 480.7 L855.2 475.5 L865.6 468.6 L877.7 472 L889.8 475.5 L896.7 473.7 L901.9 466 L908.8 459.9 L912.2 453" stroke-width="2.1" stroke-dasharray="6 .8" stroke-linecap="butt"/>
<path d="M702.2 482.4 L697.9 468.6 L691 466.8 L677.1 466.8 L668.5 465.1 L659.9 458.2 L656.4 453" stroke-width="2.1" stroke-dasharray="6 .8" stroke-linecap="butt"/>
<path d="M739.4 468.6 L748 465.1 L754.9 458.2 L756.7 453" stroke-width="2.1" stroke-dasharray="6 .8" stroke-linecap="butt"/>
<path d="M896.7 473.7 L895.8 481.5 L900.1 489.3 L900.1 503.1 L902.7 508.3 L891.5 509.2 L882.8 518.7 L882.8 527.3 L889.8 531.7 L896.7 536 L898.4 541.2 L888 542 L877.7 537.7 L867.3 538.6 L853.5 540.3 L844.8 543.8 L838.8 548.1 L840.5 553.3 L837.9 558.4 L839.6 570.5 L841.4 584.4 L844 591.3 L850 590.4 L845.7 598.2 L841.4 600.8 L832.7 599.9 L825.8 596.5 L819.8 589.6 L813.7 584.4 L812 575.7 L803.3 572.3 L796.4 575.7 L787.8 580.1 L780.9 582.6 L773.9 583.5 L763.6 589.6 L756.7 593.9" stroke-width="2.1" stroke-dasharray="6 .8" stroke-linecap="butt"/>
<path d="M850 590.4 L855.2 594.7 L858.6 601.7 L865.6 605.1 L865.6 612 L870.7 619.8 L877.7 621.5 L886.3 622.4 L889.8 629.3 L884.6 636.2 L882.8 641.4 L886.3 646.6 L886.3 657 L888 665.6 L881.1 672.5 L884.6 680" stroke-width="2.1" stroke-dasharray="6 .8" stroke-linecap="butt"/>
<path d="M889.8 629.3 L894.9 622.4 L895.8 616.4 L905.3 612.9 L908.8 603.4 L913.1 599.1 L915.7 603.4 L912.2 613.8 L919.1 615.5 L924.3 618.9 L930.4 623.3 L939.9 617.2 L945.1 608.6 L950.3 601.7 L958.9 594.7 L964.1 591.3 L969.3 593 L971 580.9 L971.9 575.7 L967.6 571.4 L960.6 572.3 L959.8 563.6 L964.1 556.7 L972.7 551.5 L983.1 539.4 L984 527.3 L979.7 504.9 L974.5 499.7 L964.1 487.6 L958.9 478.9 L952 473.7 L945.1 468.6 L944.2 458.2 L939.9 453" stroke-width="2.1" stroke-dasharray="6 .8" stroke-linecap="butt"/>
<path d="M950.3 601.7 L955.5 606.8 L955.5 622.4 L964.1 622.4 L969.3 613.8 L976.2 609.4 L983.1 612.9 L984 624.1 L981.4 634.5 L981.4 643.1 L988.3 650.1 L998.7 653.5 L1008.9 657" stroke-width="2.1" stroke-dasharray="6 .8" stroke-linecap="butt"/>
<path d="M996.9 453 L1000.4 463.4 L1008.9 472" stroke-width="2.1" stroke-dasharray="6 .8" stroke-linecap="butt"/>
<path d="M866.8 613 L872 620.8 L884.1 621.6 L889.2 626 L890.1 630.3 L884.1 637.2 L883.2 642.4 L886.7 647.6 L884.9 654.5 L888.4 659.7 L884.1 668.3 L880.6 672.6 L885.8 675.2 L891.8 677.8 L890.1 685.6 L877.1 686.5" stroke-width="2.1" stroke-dasharray="6 .8" stroke-linecap="butt"/>
<path d="M894.4 613 L895.3 620.8 L897.9 625.1 L890.1 630.3" stroke-width="2.1" stroke-dasharray="6 .8" stroke-linecap="butt"/>
<path d="M911.7 613.9 L922.1 615.6 L930.7 622.5 L937.6 617.3 L941.1 613" stroke-width="2.1" stroke-dasharray="6 .8" stroke-linecap="butt"/>
<path d="M955.8 613 L955.8 622.5 L965.3 622.5 L971.4 613" stroke-width="2.1" stroke-dasharray="6 .8" stroke-linecap="butt"/>
<path d="M982.6 613 L985.2 618.2 L982.6 628.6 L981.7 644.1 L986 648.4 L998.1 652.8 L1012 657.9 L1019.8 660.5" stroke-width="2.1" stroke-dasharray="6 .8" stroke-linecap="butt"/>
<path d="M652.4 416 L658.5 418.3 L663.1 416 L664.6 420.6" stroke-dasharray="3" stroke-width="2"/>
<path d="M655.5 420.6 L661.6 424.4 L667.7 422.9" stroke-dasharray="3" stroke-width="2"/>
<path d="M670.7 412.2 L672.2 418.3 L678.3 416" stroke-dasharray="3" stroke-width="2"/>
<path d="M660.1 427.4 L663.1 432 L658.5 436.6" stroke-dasharray="3" stroke-width="2"/>
<path d="M664.6 430.5 L669.2 430.5 L672.2 425.9" stroke-dasharray="3" stroke-width="2"/>
<path d="M673.8 433.5 L679.9 430.5 L686 430.5 L692 433.5" stroke-dasharray="3" stroke-width="2"/>
<path d="M675.3 439.6 L678.3 448.8" stroke-dasharray="3" stroke-width="2"/>
<path d="M686 436.6 L692 444.2" stroke-dasharray="3" stroke-width="2"/>
<path d="M663.1 450.3 L667.7 453.3" stroke-dasharray="3" stroke-width="2"/>
<path d="M655.5 454.9 L664.6 459.4 L670.7 458.7" stroke-dasharray="3" stroke-width="2"/>
<path d="M657 438.1 L655.5 442.7" stroke-dasharray="3" stroke-width="2"/>
<path d="M640.3 370.3 L643.3 368.8 L645.6 371.1 L642.5 372.9 L640.3 370.3" stroke-dasharray="3" stroke-width="2"/>
<path d="M649.4 371.1 L653.2 377.2 L657 378.7" stroke-dasharray="3" stroke-width="2"/>
<path d="M637.2 519.6 L641.8 515.8 L648.6 510.5" stroke-dasharray="3" stroke-width="2"/>
<path d="M673.8 428.2 L679.9 425.2 L687.5 425.9 L694.3 430.5" stroke-dasharray="3" stroke-width="2"/>
<path d="M673.8 438.1 L670.7 444.2" stroke-dasharray="3" stroke-width="2"/>
<path d="M664.6 448.8 L670.7 451.8" stroke-dasharray="3" stroke-width="2"/>
<path d="M679.9 439.6 L684.4 442.7" stroke-dasharray="3" stroke-width="2"/>
<path d="M649.4 418.3 L655.5 424.4" stroke-dasharray="3" stroke-width="2"/>
<path d="M663.1 410.7 L665.4 415.3" stroke-dasharray="3" stroke-width="2"/>
<path d="M695.1 433.5 L698.1 438.1" stroke-dasharray="3" stroke-width="2"/>
<path d="M669.2 596 L675.3 602.1" stroke-dasharray="3" stroke-width="2"/>
<path d="M678.3 608.2 L689 615.8 L695.1 612.7" stroke-dasharray="3" stroke-width="2"/>
<path d="M670.7 605.1 L673.2 607.3" stroke-dasharray="3" stroke-width="2"/>
<path d="M682.9 603.6 L690.5 605.1" stroke-dasharray="3" stroke-width="2"/>
<path d="M737.7 591.4 L753 594.5 L765.2 600.6 L774.3 611.2" stroke-dasharray="3" stroke-width="2"/>
<path d="M753 609.7 L765.2 615.8 L771.3 623.4" stroke-dasharray="3" stroke-width="2"/>
<path d="M771.3 615.8 L781.9 624.9 L780.4 634.1" stroke-dasharray="3" stroke-width="2"/>
<path d="M768.2 634.1 L777.3 635.6" stroke-dasharray="3" stroke-width="2"/>
<path d="M771.3 643.2 L778.9 643.2" stroke-dasharray="3" stroke-width="2"/>
</g>
</svg>
    <div id="zoomc"><svg width="26" height="52" viewBox="0 0 26 52" style="position:absolute;left:0;top:0"><rect x="0" y="25" width="26" height="1" fill="#ccc"/><g fill="#000"><rect x="8" y="11.9" width="9.8" height="2.1" rx=".5"/><rect x="11.85" y="8.05" width="2.1" height="9.8" rx=".5"/><rect x="10" y="39.2" width="6.1" height="2.6" rx=".4"/></g></svg></div>
    <div id="sbox">
      <svg class="abs" style="left:0;top:0" width="44" height="44" viewBox="0 0 44 44"><circle cx="12.05" cy="21.1" r="4.85" fill="none" stroke="#2e2e2e" stroke-width="1.75"/><path d="M15.6 24.7 L19.4 28.2" stroke="#2e2e2e" stroke-width="2.1" stroke-linecap="butt"/></svg>
      <div class="abs" style="left:31.5px;top:14px;font-size:13.5px;line-height:18px;color:#111">Bo,</div>
      <div class="abs" style="left:53px;top:14px;width:1.2px;height:16px;background:#000"></div>
      <svg class="abs" style="left:260px;top:16.5px" width="10" height="10" viewBox="0 0 10 10"><path d="M1.3 1.3 L8.7 8.7 M8.7 1.3 L1.3 8.7" stroke="#333" stroke-width="1.5"/></svg>
    </div>
    <div id="res">
      <div class="it" style="top:0px"><svg width="14" height="14" viewBox="0 0 14 14"><g transform="translate(1.5,1.5)"><circle cx="6" cy="6" r="5.55" fill="#3d3d3d"/><g fill="#a8a8a8"><rect x="5.4" y="2.2" width="1.2" height="1.9" rx=".4"/><rect x="5.4" y="7.9" width="1.2" height="1.9" rx=".4"/><rect x="1.6" y="5.4" width="2" height="1.2" rx=".4"/><rect x="8.4" y="5.4" width="2" height="1.2" rx=".4"/><rect x="4.6" y="5.6" width="2.8" height=".8" rx=".3"/></g></g></svg><b>Bo,</b> Sierra Leone</div>
      <div class="it" style="top:33px"><svg width="14" height="14" viewBox="0 0 14 14"><g transform="translate(1.5,1.5)"><circle cx="6" cy="6" r="5.55" fill="#3d3d3d"/><g fill="#a8a8a8"><rect x="5.4" y="2.2" width="1.2" height="1.9" rx=".4"/><rect x="5.4" y="7.9" width="1.2" height="1.9" rx=".4"/><rect x="1.6" y="5.4" width="2" height="1.2" rx=".4"/><rect x="8.4" y="5.4" width="2" height="1.2" rx=".4"/><rect x="4.6" y="5.6" width="2.8" height=".8" rx=".3"/></g></g></svg>Tha <b>Bo,</b> Thailand</div>
      <div class="it" style="top:66px"><svg width="14" height="14" viewBox="0 0 14 14"><g transform="translate(1.5,1.5)"><circle cx="6" cy="6" r="5.55" fill="#3d3d3d"/><g fill="#a8a8a8"><rect x="5.4" y="2.2" width="1.2" height="1.9" rx=".4"/><rect x="5.4" y="7.9" width="1.2" height="1.9" rx=".4"/><rect x="1.6" y="5.4" width="2" height="1.2" rx=".4"/><rect x="8.4" y="5.4" width="2" height="1.2" rx=".4"/><rect x="4.6" y="5.6" width="2.8" height=".8" rx=".3"/></g></g></svg>Huyện Trảng Bom, Vietnam</div>
      <div class="it" style="top:99px"><svg width="14" height="14" viewBox="0 0 14 14"><g transform="translate(1.5,1.5)"><circle cx="6" cy="6" r="5.55" fill="#3d3d3d"/><g fill="#a8a8a8"><rect x="5.4" y="2.2" width="1.2" height="1.9" rx=".4"/><rect x="5.4" y="7.9" width="1.2" height="1.9" rx=".4"/><rect x="1.6" y="5.4" width="2" height="1.2" rx=".4"/><rect x="8.4" y="5.4" width="2" height="1.2" rx=".4"/><rect x="4.6" y="5.6" width="2.8" height=".8" rx=".3"/></g></g></svg>Bang Bo District, Thailand</div>
      <div class="it" style="top:132px"><svg width="14" height="14" viewBox="0 0 14 14"><g transform="translate(1.5,1.5)"><circle cx="6" cy="6" r="5.55" fill="#3d3d3d"/><g fill="#a8a8a8"><rect x="5.4" y="2.2" width="1.2" height="1.9" rx=".4"/><rect x="5.4" y="7.9" width="1.2" height="1.9" rx=".4"/><rect x="1.6" y="5.4" width="2" height="1.2" rx=".4"/><rect x="8.4" y="5.4" width="2" height="1.2" rx=".4"/><rect x="4.6" y="5.6" width="2.8" height=".8" rx=".3"/></g></g></svg>Ban Bang Bo (1), Thailand</div>
      <div class="it" style="top:165px"><svg width="14" height="14" viewBox="0 0 14 14"><g transform="translate(1.5,1.5)"><circle cx="6" cy="6" r="5.55" fill="#3d3d3d"/><g fill="#a8a8a8"><rect x="5.4" y="2.2" width="1.2" height="1.9" rx=".4"/><rect x="5.4" y="7.9" width="1.2" height="1.9" rx=".4"/><rect x="1.6" y="5.4" width="2" height="1.2" rx=".4"/><rect x="8.4" y="5.4" width="2" height="1.2" rx=".4"/><rect x="4.6" y="5.6" width="2.8" height=".8" rx=".3"/></g></g></svg>Bo District, Sierra Leone</div>
      <div class="it" style="top:198px"><svg width="14" height="14" viewBox="0 0 14 14"><g transform="translate(1.5,1.5)"><circle cx="6" cy="6" r="5.55" fill="#3d3d3d"/><g fill="#a8a8a8"><rect x="5.4" y="2.2" width="1.2" height="1.9" rx=".4"/><rect x="5.4" y="7.9" width="1.2" height="1.9" rx=".4"/><rect x="1.6" y="5.4" width="2" height="1.2" rx=".4"/><rect x="8.4" y="5.4" width="2" height="1.2" rx=".4"/><rect x="4.6" y="5.6" width="2.8" height=".8" rx=".3"/></g></g></svg>Bo Phloi, Thailand</div>
      <div class="it" style="top:231px"><svg width="14" height="14" viewBox="0 0 14 14"><g transform="translate(1.5,1.5)"><circle cx="6" cy="6" r="5.55" fill="#3d3d3d"/><g fill="#a8a8a8"><rect x="5.4" y="2.2" width="1.2" height="1.9" rx=".4"/><rect x="5.4" y="7.9" width="1.2" height="1.9" rx=".4"/><rect x="1.6" y="5.4" width="2" height="1.2" rx=".4"/><rect x="8.4" y="5.4" width="2" height="1.2" rx=".4"/><rect x="4.6" y="5.6" width="2.8" height=".8" rx=".3"/></g></g></svg>Bo Rai, Thailand</div>
      <div class="it" style="top:264px"><svg width="14" height="14" viewBox="0 0 14 14"><g transform="translate(1.5,1.5)"><circle cx="6" cy="6" r="5.55" fill="#3d3d3d"/><g fill="#a8a8a8"><rect x="5.4" y="2.2" width="1.2" height="1.9" rx=".4"/><rect x="5.4" y="7.9" width="1.2" height="1.9" rx=".4"/><rect x="1.6" y="5.4" width="2" height="1.2" rx=".4"/><rect x="8.4" y="5.4" width="2" height="1.2" rx=".4"/><rect x="4.6" y="5.6" width="2.8" height=".8" rx=".3"/></g></g></svg>South Boston, Boston, MA, USA</div>
      <div class="it" style="top:297px"><svg width="14" height="14" viewBox="0 0 14 14"><g transform="translate(1.5,1.5)"><circle cx="6" cy="6" r="5.55" fill="#3d3d3d"/><g fill="#a8a8a8"><rect x="5.4" y="2.2" width="1.2" height="1.9" rx=".4"/><rect x="5.4" y="7.9" width="1.2" height="1.9" rx=".4"/><rect x="1.6" y="5.4" width="2" height="1.2" rx=".4"/><rect x="8.4" y="5.4" width="2" height="1.2" rx=".4"/><rect x="4.6" y="5.6" width="2.8" height=".8" rx=".3"/></g></g></svg>Bolivia</div>

    </div>
    <div id="attr"><span>Leaflet</span> | © <span>OpenStreetMap</span> contributors, Geocoding by <span>Mapzen</span></div>
  </div>
  <div id="mfl"></div>
  <div class="btn" style="left:1667px;width:79px;background:#3d8acb;border-color:#357ebd;color:#fff">Capture</div>
  <div class="btn" style="left:1755px;width:72px;background:#fff;border-color:#ccc;color:#505050">Cancel</div>
</div>
</body>
</html>
